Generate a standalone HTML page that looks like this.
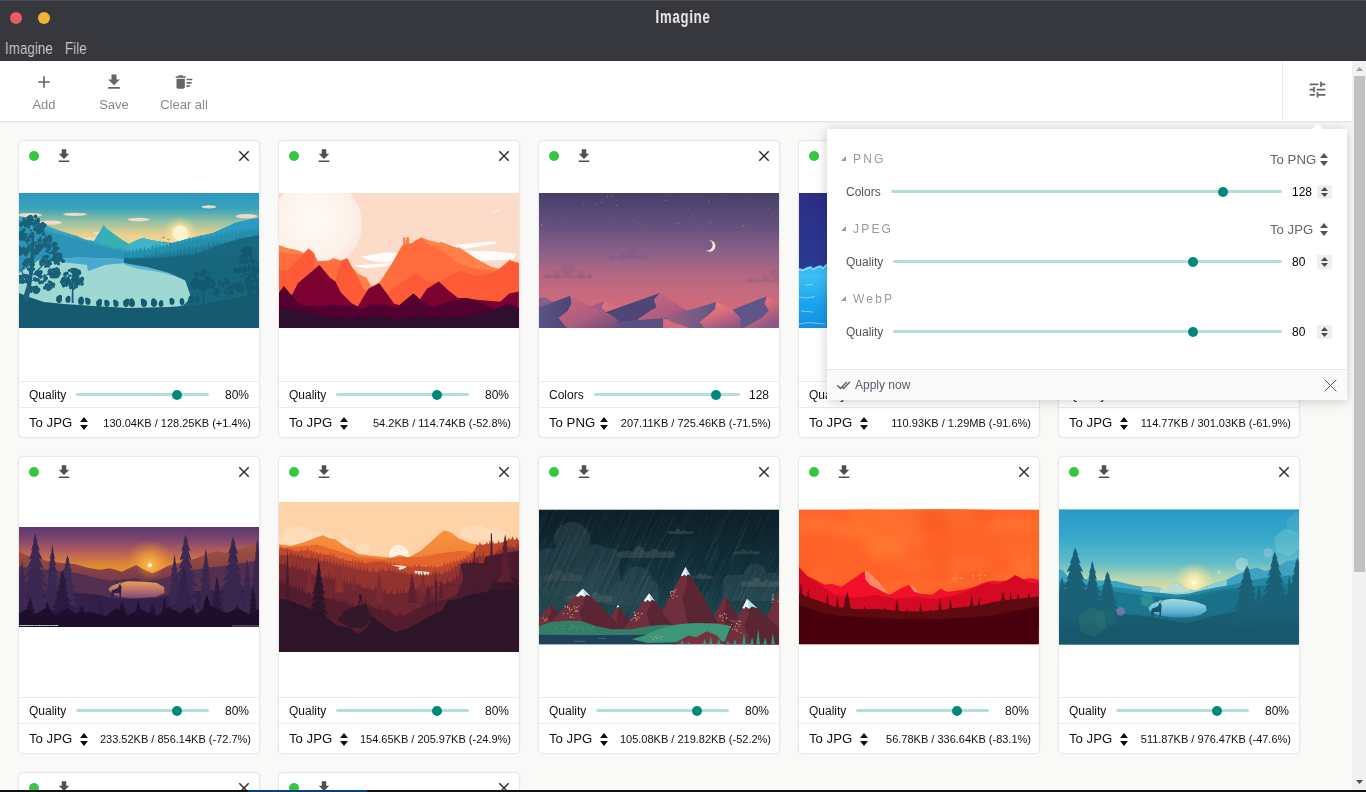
<!DOCTYPE html><html><head><meta charset="utf-8"><title>Imagine</title><style>
*{box-sizing:border-box;margin:0;padding:0}
html,body{width:1366px;height:792px;overflow:hidden;background:#f9f9f7;font-family:"Liberation Sans",sans-serif;}
body{position:relative}
#wrap{position:absolute;left:0;top:0;width:1366px;height:792px;will-change:transform;overflow:hidden}
.abs{position:absolute}
#titlebar{z-index:8;position:absolute;left:0;top:0;width:1366px;height:61px;background:#37383d;border-top:1px solid #4c4d52}
.tl{position:absolute;width:12px;height:12px;border-radius:50%;top:11px}
#title{position:absolute;left:583px;top:4px;width:200px;text-align:center;color:#e9e9e9;font-weight:bold;font-size:18px;line-height:24px;transform:scaleX(.74);transform-origin:50% 50%;letter-spacing:.9px;will-change:transform}
.menu{position:absolute;top:38px;will-change:transform;color:#c9c9c9;font-size:17px;line-height:20px;transform-origin:0 50%;white-space:nowrap}
#toolbar{position:absolute;left:0;top:61px;width:1352px;height:61px;background:#fff;border-bottom:1px solid #e4e4e2;box-shadow:0 1px 2px rgba(0,0,0,.04);z-index:5}
.tb{position:absolute;top:0;height:60px;text-align:center;color:#888;font-size:13px}
.tb svg{position:absolute;top:11px;left:50%;margin-left:-10px;width:20px;height:20px;fill:#666}
.tb span{position:absolute;left:-20px;right:-20px;top:36px;line-height:15px;white-space:nowrap}
#tune{position:absolute;left:1282px;top:61px;width:70px;height:60px;z-index:6;border-left:1px solid #ececec;background:#fff}
#tune svg{position:absolute;left:23.5px;top:18px;width:21px;height:21px;fill:#666}

.card{position:absolute;width:242px;height:298px;background:#fff;border:1px solid #e8e8e6;border-radius:5px;box-shadow:0 0 2px rgba(0,0,0,.07);overflow:hidden}
.card .dot{position:absolute;left:10px;top:10px;width:10px;height:10px;border-radius:50%;background:#33c840}
.card svg.dl{position:absolute;left:36px;top:6px;width:18px;height:18px;fill:#505050}
.card svg.cl{position:absolute;left:216px;top:6px;width:18px;height:18px;fill:#333}
.card .img{position:absolute;left:0;width:240px}
.card .img svg{display:block;width:240px}
.card .r1{position:absolute;left:0;top:240px;width:240px;height:27px;border-top:1px solid #ececec}
.card .r2{position:absolute;left:0;top:266px;width:240px;height:31px;border-top:1px solid #ececec}
.lab{position:absolute;left:10px;top:6px;font-size:12px;line-height:14px;color:#111}
.val{position:absolute;right:10px;top:6px;font-size:12px;line-height:14px;color:#111}
.trk{position:absolute;top:11px;height:3px;border-radius:2px;background:#b2dfdb}
.thm{position:absolute;top:8px;width:10px;height:10px;border-radius:50%;background:#00897b}
.sel{position:absolute;left:10px;top:7px;font-size:13.2px;line-height:16px;color:#111;white-space:nowrap}
.arr{position:absolute;top:9px;width:8px;height:13px;fill:#111}
.sz{position:absolute;right:8px;top:8px;font-size:11px;line-height:14px;color:#111;white-space:nowrap}
#sb{z-index:7;position:absolute;left:1352px;top:61px;width:14px;height:729px;background:#f1f1f1}
#sb .th{position:absolute;left:2px;top:15px;width:11px;height:496px;background:#c1c1c1}
#bottom{position:absolute;left:0;top:790px;width:1366px;height:2px;background:#111}
#bottom i{position:absolute;left:248px;top:0;width:119px;height:2px;background:#0a3d7a}
#pop{position:absolute;left:827px;top:129px;width:520px;height:271px;background:#fff;box-shadow:0 1px 12px rgba(0,0,0,.2);z-index:4}
#pop .ft{position:absolute;left:0;top:240px;width:520px;height:31px;background:#fafafa;border-top:1px solid #e8e8e8}
.ph{position:absolute;left:26px;font-size:12px;line-height:14px;color:#999;letter-spacing:2.2px}
.ptri{position:absolute;left:14px;width:5px;height:5px;fill:#999}
.psel{position:absolute;font-size:13.2px;line-height:16px;color:#666;white-space:nowrap}
.parr{position:absolute;width:8px;height:13px;fill:#555}
.plab{position:absolute;left:19px;font-size:12px;line-height:14px;color:#555}
.ptrk{position:absolute;height:3px;border-radius:2px;background:#b2dfdb}
.pthm{position:absolute;width:10px;height:10px;border-radius:50%;background:#00897b}
.pval{position:absolute;left:465px;font-size:12px;line-height:14px;color:#000}
.spin{position:absolute;left:490px;width:15px;height:14px;background:#efefef}
.spin svg{position:absolute;left:4px;top:2px;width:7px;height:10px;fill:#4a4a4a}
</style></head><body><div id="wrap"><div class="card" style="left:18px;top:140px"><div class="img" style="top:52px;height:135px"><svg viewBox="0 0 240 135" height="135" preserveAspectRatio="none"><defs><linearGradient id="i1sky" x1="0" y1="0" x2="0" y2="1"><stop offset="0" stop-color="#2c97c2"/><stop offset=".28" stop-color="#3aa3b8"/><stop offset=".5" stop-color="#8fc0a4"/><stop offset=".75" stop-color="#ecd08c"/><stop offset="1" stop-color="#f6d78f"/></linearGradient><radialGradient id="i1sun" cx=".5" cy=".5" r=".5"><stop offset="0" stop-color="#fff6d8"/><stop offset=".42" stop-color="#fdf0c8"/><stop offset=".5" stop-color="#fbe6aa" stop-opacity=".7"/><stop offset="1" stop-color="#f6d78f" stop-opacity="0"/></radialGradient></defs><rect width="240" height="135" fill="#2d94b8"/><rect width="240" height="56" fill="url(#i1sky)"/><circle cx="161.3" cy="40.4" r="17" fill="url(#i1sun)"/><ellipse cx="11" cy="22" rx="12" ry="2" fill="#f4dcc6" opacity=".95"/><ellipse cx="56" cy="21.3" rx="12" ry="1.6" fill="#f4dcc6" opacity=".95"/><ellipse cx="31" cy="29.6" rx="12" ry="2.2" fill="#f4dcc6" opacity=".95"/><ellipse cx="119.5" cy="26.6" rx="11" ry="1.8" fill="#f4dcc6" opacity=".95"/><ellipse cx="190" cy="13.8" rx="7.5" ry="1.6" fill="#f4dcc6" opacity=".95"/><ellipse cx="227.5" cy="23.2" rx="11" ry="2.2" fill="#f4dcc6" opacity=".95"/><ellipse cx="84" cy="40" rx="10" ry="1.5" fill="#f4dcc6" opacity=".95"/><ellipse cx="73" cy="45.6" rx="8" ry="1.2" fill="#f4dcc6" opacity=".95"/><ellipse cx="126" cy="46.6" rx="7" ry="1.3" fill="#f4dcc6" opacity=".95"/><path d="M0 23.5L8 25L23 31L42 38L58 43L66 46.5L75 48L80 40L84.4 32.3L88 36L96 42L104 47.5L110 51L118 47L124 45L132 47L139 48.2L153 50L172 45L194 40L216 30L232 26L240 25.4V70H0z" fill="#3aa6c6"/><path d="M84.4 32.3L88 36L96 42L104 47.5L110 51L112 56H78L80 47z" fill="#36b0b4"/><path d="M110 51L118 47L124 45L132 47L139 48.2L153 50V58H108z" fill="#3db4c8"/><path d="M150 51L172 45L194 40L216 30L232 26L240 25.4V70H150z" fill="#2a9cc4"/><path d="M0 33L10 36L24 40L40 45L60 50L80 55L100 59L112 62V72H0z" fill="#2d94b8"/><path d="M24.0 38.0L25.4 35.1L26.8 38.7L28.1 35.0L29.4 39.5L30.9 36.0L32.4 40.3L34.0 38.1L35.6 41.1L37.2 39.0L38.8 42.0L40.1 39.7L41.4 42.7L43.2 39.6L45.1 43.7L46.5 41.3L47.9 44.5L49.8 40.9L51.7 45.5L53.2 41.9L54.7 46.3L56.0 41.7L57.4 47.0L58.8 42.8L60.3 47.8L61.6 45.3L63.0 48.5L64.8 45.7L66.6 49.5L68.3 47.0L69.9 50.4L71.4 46.7L72.9 51.2L74.3 47.7L75.6 51.9L77.0 49.7L78.4 52.7L80.0 48.9L81.5 53.5L83.2 50.7L84.8 54.4L86.3 51.2L87.8 55.2L89.5 51.2L91.2 56.2L92.9 53.5L94.5 57.0L96.4 53.7L98.2 58.0L99.7 54.1L101.1 58.8L102.5 54.2L103.8 59.6L105.6 56.5L107.4 60.5L109.0 58.1L110.6 61.4L112.3 59.2L112.0 61.8V72H0z" fill="#2d94b8"/><path d="M105.0 62.0L106.9 56.4L108.7 61.3L110.4 55.4L112.0 60.7L113.9 55.2L115.8 60.0L117.5 54.9L119.3 59.3L121.4 53.4L123.6 58.5L125.5 53.7L127.4 57.7L129.3 54.2L131.3 57.0L133.4 51.7L135.6 56.2L137.2 50.4L138.9 55.6L140.8 51.0L142.7 54.8L144.5 51.4L146.3 54.2L147.8 50.4L149.3 53.6L151.3 50.0L153.3 52.8L154.9 49.1L156.5 52.2L158.6 47.6L160.7 51.4L162.4 47.8L164.2 50.8L166.3 45.7L168.3 50.0L170.4 44.1L172.5 49.2L174.2 45.0L176.0 48.5L178.0 44.0L180.1 47.7L181.7 41.6L183.2 47.1L184.8 43.3L186.4 46.5L188.2 42.5L190.0 45.9L191.6 40.8L193.3 45.2L195.0 41.9L196.7 44.6L198.6 40.1L200.4 43.9L202.4 37.6L204.3 43.1L206.2 38.2L208.1 42.4L209.6 37.1L211.0 41.9L213.0 35.8L215.0 41.1L217.1 35.1L219.1 40.3L220.8 35.8L222.5 39.7L224.4 36.0L226.3 39.0L227.8 35.5L229.3 38.4L230.8 34.5L232.4 37.8L233.9 33.5L235.4 37.2L236.9 33.9L238.5 36.6L240.2 33.0L240.0 36.4V80H105z" fill="#2590ae"/><path d="M120.0 66.0L122.2 62.5L124.4 65.3L126.0 59.8L127.6 64.7L129.4 60.5L131.2 64.1L132.8 59.5L134.4 63.5L136.7 57.2L139.0 62.8L140.9 57.8L142.8 62.1L144.4 58.6L145.9 61.6L147.7 57.1L149.4 61.0L151.0 54.8L152.7 60.4L154.9 57.0L157.2 59.7L158.8 54.6L160.4 59.1L162.0 54.0L163.5 58.6L165.8 53.4L168.0 57.8L170.1 51.5L172.1 57.1L173.9 52.9L175.7 56.5L177.8 52.6L179.9 55.8L182.1 50.6L184.2 55.1L185.9 50.7L187.5 54.5L189.8 48.3L192.1 53.7L194.2 47.4L196.3 53.0L198.4 46.8L200.5 52.3L202.4 48.2L204.3 51.7L205.9 47.2L207.4 51.1L209.2 47.7L210.9 50.5L212.9 46.3L215.0 49.9L216.8 43.2L218.7 49.2L221.0 42.6L223.2 48.4L225.0 41.8L226.8 47.8L228.5 43.8L230.2 47.3L231.9 43.3L233.6 46.7L235.8 41.1L238.0 45.9L239.9 39.7L240.0 45.6V80H120z" fill="#1e7f9c"/><path d="M135.0 70.0L137.1 64.6L139.3 69.1L141.3 65.5L143.3 68.3L145.4 62.2L147.5 67.5L149.4 61.9L151.3 66.7L153.4 62.8L155.5 65.9L157.7 61.5L159.8 65.0L161.6 58.8L163.4 64.3L165.7 59.7L167.9 63.4L169.6 57.9L171.2 62.8L172.8 59.0L174.5 62.1L176.6 56.0L178.7 61.3L180.9 57.4L183.0 60.4L185.1 54.0L187.1 59.6L189.0 55.1L191.0 58.8L192.5 55.1L194.0 58.2L196.0 51.9L198.0 57.4L200.3 52.4L202.5 56.5L204.7 51.8L206.9 55.6L208.5 49.8L210.2 55.0L212.0 50.8L213.7 54.3L215.7 50.1L217.6 53.5L219.5 49.3L221.3 52.7L223.5 48.9L225.7 51.9L227.6 47.4L229.5 51.1L231.7 45.9L233.9 50.2L236.1 45.5L238.3 49.3L240.3 44.4L240.0 49.0V90H135z" fill="#1a7088"/><path d="M150 72L180 60L200 52L220 46L240 42V100H150z" fill="#18687f"/><path d="M20 67L60 64.5L105 66L130 72L160 80L176 88L180 96L176 106L150 118L60 118L10 108L0 100L0 80z" fill="#9fd7d3"/><path d="M38 66L60 64.5L105 66L108 70L95 71L86 72L72 77L69 78L68 72L52 70L40 69z" fill="#49a9d2"/><path d="M105 69L125 73L150 80L165 86L160 84L140 79L120 76L106 72z" fill="#5bb8d8"/><path d="M105.0 66.0L106.0 63.7L106.9 66.0L108.0 63.9L109.0 66.0L110.4 64.5L111.7 66.1L112.9 64.3L114.1 66.1L115.3 63.5L116.5 66.1L117.8 64.1L119.0 66.1L120.3 63.8L121.6 66.2L122.9 64.5L124.1 66.2L125.2 64.4L126.3 66.6L127.5 64.3L128.7 67.3L130.0 65.4L131.3 68.1L132.5 65.6L133.7 68.8L134.9 66.7L136.1 69.5L137.4 67.6L138.7 70.3L139.9 68.5L141.1 71.0L142.5 69.2L143.9 71.9L145.3 69.7L146.7 72.7L147.8 70.1L148.9 73.4L150.3 71.4L151.7 74.2L152.7 71.8L153.7 74.8L154.9 73.5L156.1 75.5L157.2 74.2L158.2 76.2L159.5 74.9L160.8 76.9L162.2 74.7L163.6 77.8L164.9 76.4L166.2 78.6L167.2 76.4L168.2 79.2L169.7 76.8L171.1 80.0L172.5 78.6L173.9 80.9L175.1 79.1L176.0 81.5L176 92L150 80L128 74L105 70z" fill="#18677e"/><path d="M105 67L125 67L150 72L172 82L185 95L240 95V60L200 60z" fill="#18677e"/><path d="M165 84L185 74L210 64L240 58V118H160L172 104z" fill="#17667c"/><path d="M0 100L10 104L25 109L45 111L75 113L110 115L150 114L180 112L200 108L220 104L240 101V135H0z" fill="#155a6f"/><g fill="#1a6279"><path d="M3 108L8 92L11 74L12 56L13 40L15 40L15 58L14.5 76L12 94L9 109z"/><path d="M12 70L22 52L30 46M13 60L6 46L4 36M14 82L26 70L36 64M12 88L22 84L32 80M10 92L5 84L2 76" stroke="#1a6279" stroke-width="1.1" fill="none"/><circle cx="11.9" cy="29.7" r="1.0"/><circle cx="1.8" cy="31.7" r="1.2"/><circle cx="7.2" cy="32.9" r="1.7"/><circle cx="10.8" cy="30.5" r="1.4"/><circle cx="9.7" cy="30.4" r="1.6"/><circle cx="4.4" cy="29.9" r="2.1"/><circle cx="7.5" cy="24.7" r="0.9"/><circle cx="5.9" cy="31.1" r="1.8"/><circle cx="5.7" cy="32.0" r="1.3"/><circle cx="11.0" cy="27.4" r="1.1"/><circle cx="9.7" cy="34.3" r="1.5"/><circle cx="5.4" cy="28.4" r="0.9"/><circle cx="4.4" cy="26.7" r="0.9"/><circle cx="10.8" cy="28.3" r="1.8"/><circle cx="11.2" cy="32.6" r="0.9"/><circle cx="8.8" cy="27.2" r="1.2"/><circle cx="0.1" cy="28.3" r="1.1"/><circle cx="9.2" cy="32.9" r="1.1"/><circle cx="8.0" cy="31.4" r="0.9"/><circle cx="7.1" cy="32.9" r="1.2"/><circle cx="6.2" cy="27.0" r="1.5"/><circle cx="7.7" cy="32.9" r="0.8"/><circle cx="6.0" cy="30.7" r="1.8"/><circle cx="3.3" cy="29.2" r="1.4"/><circle cx="7.9" cy="29.3" r="1.9"/><circle cx="1.8" cy="31.6" r="1.9"/><circle cx="2.4" cy="32.4" r="1.7"/><circle cx="9.8" cy="29.6" r="1.9"/><circle cx="4.6" cy="25.8" r="1.3"/><circle cx="5.1" cy="31.1" r="1.0"/><circle cx="11.1" cy="32.0" r="1.1"/><circle cx="7.0" cy="31.4" r="1.9"/><circle cx="9.7" cy="26.7" r="1.2"/><circle cx="6.2" cy="33.0" r="1.4"/><circle cx="16.0" cy="29.6" r="1.1"/><circle cx="19.3" cy="25.9" r="1.5"/><circle cx="14.2" cy="31.6" r="1.2"/><circle cx="13.9" cy="27.1" r="1.3"/><circle cx="10.1" cy="27.5" r="1.1"/><circle cx="13.6" cy="27.0" r="1.1"/><circle cx="16.9" cy="28.6" r="0.9"/><circle cx="17.0" cy="27.4" r="1.1"/><circle cx="10.6" cy="25.3" r="1.8"/><circle cx="11.4" cy="23.7" r="1.9"/><circle cx="11.6" cy="28.7" r="2.1"/><circle cx="16.8" cy="30.2" r="1.6"/><circle cx="18.8" cy="28.2" r="2.0"/><circle cx="10.7" cy="24.1" r="1.9"/><circle cx="16.6" cy="29.6" r="1.5"/><circle cx="16.5" cy="23.4" r="1.9"/><circle cx="9.5" cy="24.8" r="1.7"/><circle cx="13.1" cy="24.9" r="0.8"/><circle cx="16.2" cy="29.1" r="0.9"/><circle cx="16.1" cy="24.0" r="1.6"/><circle cx="10.8" cy="24.3" r="1.4"/><circle cx="18.9" cy="27.1" r="1.8"/><circle cx="10.0" cy="26.9" r="1.7"/><circle cx="18.3" cy="28.6" r="1.1"/><circle cx="16.5" cy="28.1" r="1.7"/><circle cx="15.3" cy="30.9" r="2.1"/><circle cx="10.6" cy="27.1" r="1.4"/><circle cx="12.1" cy="23.3" r="1.6"/><circle cx="13.0" cy="26.0" r="1.0"/><circle cx="13.9" cy="31.0" r="1.2"/><circle cx="13.4" cy="26.8" r="0.9"/><circle cx="13.5" cy="30.8" r="1.7"/><circle cx="12.7" cy="24.7" r="1.5"/><circle cx="10.3" cy="27.7" r="1.0"/><circle cx="23.3" cy="33.5" r="2.1"/><circle cx="21.8" cy="34.7" r="1.4"/><circle cx="23.7" cy="30.1" r="1.4"/><circle cx="20.7" cy="37.5" r="2.0"/><circle cx="22.2" cy="39.1" r="1.0"/><circle cx="14.7" cy="34.2" r="1.0"/><circle cx="23.0" cy="31.4" r="2.0"/><circle cx="20.1" cy="32.5" r="2.0"/><circle cx="20.0" cy="35.1" r="0.8"/><circle cx="16.6" cy="35.2" r="1.2"/><circle cx="23.4" cy="37.5" r="1.2"/><circle cx="21.1" cy="34.8" r="1.8"/><circle cx="22.2" cy="33.4" r="2.0"/><circle cx="19.6" cy="29.9" r="1.2"/><circle cx="18.2" cy="37.5" r="2.1"/><circle cx="17.7" cy="33.2" r="1.4"/><circle cx="20.8" cy="36.2" r="0.9"/><circle cx="22.8" cy="32.5" r="2.0"/><circle cx="21.0" cy="37.8" r="1.5"/><circle cx="22.5" cy="38.1" r="2.0"/><circle cx="25.4" cy="31.7" r="1.6"/><circle cx="26.4" cy="32.2" r="1.5"/><circle cx="20.7" cy="33.8" r="1.8"/><circle cx="15.6" cy="36.5" r="1.6"/><circle cx="20.7" cy="36.2" r="2.0"/><circle cx="24.1" cy="37.7" r="1.2"/><circle cx="19.3" cy="39.5" r="2.1"/><circle cx="20.7" cy="39.5" r="1.2"/><circle cx="17.2" cy="33.8" r="1.0"/><circle cx="22.6" cy="37.1" r="2.0"/><circle cx="18.0" cy="35.0" r="2.0"/><circle cx="25.4" cy="34.9" r="1.0"/><circle cx="21.7" cy="36.6" r="1.2"/><circle cx="23.7" cy="36.5" r="1.1"/><circle cx="2.0" cy="39.6" r="1.8"/><circle cx="4.2" cy="44.0" r="1.5"/><circle cx="5.1" cy="44.4" r="0.9"/><circle cx="6.8" cy="47.8" r="1.0"/><circle cx="2.4" cy="41.9" r="1.9"/><circle cx="8.8" cy="45.0" r="1.1"/><circle cx="4.2" cy="44.3" r="2.0"/><circle cx="11.8" cy="37.5" r="0.8"/><circle cx="13.8" cy="43.0" r="2.0"/><circle cx="2.7" cy="42.8" r="0.8"/><circle cx="2.8" cy="45.6" r="1.9"/><circle cx="12.2" cy="37.4" r="1.1"/><circle cx="10.1" cy="43.5" r="1.5"/><circle cx="5.2" cy="36.7" r="1.7"/><circle cx="4.3" cy="37.8" r="1.4"/><circle cx="6.7" cy="41.6" r="1.8"/><circle cx="8.7" cy="47.7" r="1.6"/><circle cx="7.2" cy="44.0" r="1.1"/><circle cx="4.2" cy="38.2" r="0.9"/><circle cx="12.6" cy="43.8" r="1.6"/><circle cx="5.5" cy="43.8" r="1.6"/><circle cx="11.8" cy="42.2" r="1.4"/><circle cx="13.4" cy="40.8" r="1.9"/><circle cx="4.6" cy="42.4" r="1.1"/><circle cx="13.7" cy="40.8" r="1.2"/><circle cx="12.9" cy="42.6" r="1.7"/><circle cx="4.9" cy="43.5" r="1.7"/><circle cx="11.0" cy="40.7" r="0.8"/><circle cx="5.6" cy="45.3" r="1.7"/><circle cx="10.0" cy="47.0" r="1.8"/><circle cx="4.8" cy="41.9" r="2.1"/><circle cx="5.6" cy="47.0" r="1.1"/><circle cx="9.1" cy="47.1" r="1.2"/><circle cx="12.7" cy="40.8" r="1.0"/><circle cx="25.8" cy="51.1" r="1.7"/><circle cx="27.7" cy="46.2" r="1.3"/><circle cx="26.7" cy="53.1" r="1.0"/><circle cx="26.7" cy="47.5" r="1.3"/><circle cx="30.7" cy="43.4" r="1.8"/><circle cx="32.2" cy="46.9" r="1.2"/><circle cx="27.9" cy="52.7" r="1.8"/><circle cx="31.0" cy="48.0" r="1.3"/><circle cx="22.0" cy="49.6" r="1.0"/><circle cx="29.0" cy="47.1" r="1.3"/><circle cx="27.5" cy="46.4" r="2.1"/><circle cx="26.2" cy="50.7" r="1.9"/><circle cx="27.2" cy="43.2" r="0.9"/><circle cx="20.5" cy="47.6" r="2.0"/><circle cx="26.6" cy="50.6" r="2.0"/><circle cx="29.7" cy="47.8" r="1.9"/><circle cx="25.2" cy="45.7" r="0.8"/><circle cx="31.6" cy="49.3" r="1.1"/><circle cx="24.9" cy="41.0" r="1.2"/><circle cx="24.0" cy="53.2" r="1.6"/><circle cx="24.5" cy="52.4" r="1.2"/><circle cx="24.9" cy="47.4" r="1.8"/><circle cx="30.2" cy="44.5" r="2.0"/><circle cx="28.6" cy="47.5" r="1.4"/><circle cx="32.1" cy="45.3" r="1.3"/><circle cx="25.0" cy="51.2" r="1.4"/><circle cx="27.9" cy="45.8" r="1.8"/><circle cx="24.5" cy="41.2" r="1.8"/><circle cx="21.6" cy="44.7" r="1.2"/><circle cx="20.7" cy="51.3" r="0.9"/><circle cx="27.1" cy="52.2" r="1.1"/><circle cx="26.3" cy="47.5" r="1.5"/><circle cx="21.6" cy="52.6" r="1.9"/><circle cx="28.8" cy="46.7" r="0.9"/><circle cx="36.8" cy="57.2" r="1.7"/><circle cx="30.0" cy="55.9" r="1.3"/><circle cx="29.1" cy="51.9" r="1.8"/><circle cx="36.0" cy="51.3" r="1.0"/><circle cx="34.9" cy="52.5" r="1.5"/><circle cx="29.1" cy="58.4" r="1.1"/><circle cx="33.1" cy="57.7" r="1.0"/><circle cx="36.7" cy="52.2" r="1.2"/><circle cx="27.9" cy="58.3" r="1.5"/><circle cx="33.7" cy="59.9" r="1.6"/><circle cx="35.1" cy="54.9" r="1.4"/><circle cx="35.5" cy="50.4" r="2.0"/><circle cx="36.4" cy="55.8" r="1.0"/><circle cx="35.4" cy="60.1" r="1.6"/><circle cx="36.6" cy="53.6" r="1.9"/><circle cx="29.9" cy="55.9" r="1.8"/><circle cx="35.0" cy="54.4" r="1.6"/><circle cx="30.8" cy="53.2" r="1.3"/><circle cx="34.9" cy="56.9" r="1.1"/><circle cx="28.7" cy="52.4" r="1.1"/><circle cx="36.7" cy="55.2" r="1.7"/><circle cx="34.4" cy="57.8" r="1.1"/><circle cx="34.4" cy="51.1" r="0.9"/><circle cx="36.3" cy="57.1" r="1.5"/><circle cx="31.7" cy="53.7" r="1.0"/><circle cx="31.6" cy="51.7" r="1.2"/><circle cx="30.8" cy="60.0" r="1.2"/><circle cx="29.4" cy="53.7" r="1.3"/><circle cx="37.3" cy="50.8" r="1.3"/><circle cx="34.8" cy="59.5" r="1.1"/><circle cx="39.2" cy="55.2" r="1.4"/><circle cx="34.8" cy="51.8" r="1.9"/><circle cx="30.5" cy="55.5" r="0.8"/><circle cx="28.1" cy="53.6" r="2.0"/><circle cx="20.7" cy="57.5" r="1.3"/><circle cx="13.3" cy="54.9" r="1.2"/><circle cx="9.3" cy="54.2" r="0.9"/><circle cx="9.7" cy="55.3" r="2.1"/><circle cx="16.8" cy="57.0" r="2.0"/><circle cx="20.8" cy="54.4" r="0.9"/><circle cx="19.9" cy="53.3" r="2.0"/><circle cx="11.4" cy="51.3" r="1.0"/><circle cx="16.7" cy="52.3" r="1.3"/><circle cx="19.6" cy="50.5" r="1.0"/><circle cx="16.9" cy="58.7" r="1.5"/><circle cx="14.2" cy="56.4" r="1.1"/><circle cx="15.0" cy="49.4" r="0.9"/><circle cx="10.4" cy="53.0" r="0.8"/><circle cx="17.3" cy="53.3" r="1.6"/><circle cx="10.7" cy="53.5" r="1.2"/><circle cx="11.3" cy="57.2" r="1.4"/><circle cx="13.5" cy="51.7" r="1.4"/><circle cx="21.4" cy="55.7" r="1.4"/><circle cx="16.6" cy="60.2" r="1.8"/><circle cx="13.1" cy="55.7" r="1.4"/><circle cx="18.0" cy="56.3" r="1.4"/><circle cx="19.9" cy="57.2" r="1.5"/><circle cx="21.4" cy="56.2" r="0.9"/><circle cx="15.4" cy="49.8" r="1.5"/><circle cx="20.7" cy="56.4" r="1.3"/><circle cx="18.5" cy="54.3" r="1.9"/><circle cx="22.0" cy="54.9" r="1.9"/><circle cx="18.4" cy="60.5" r="1.4"/><circle cx="22.5" cy="53.5" r="1.0"/><circle cx="17.6" cy="49.4" r="0.9"/><circle cx="12.4" cy="59.2" r="1.0"/><circle cx="18.9" cy="53.1" r="1.9"/><circle cx="19.1" cy="58.3" r="2.0"/><circle cx="4.7" cy="60.3" r="1.5"/><circle cx="3.6" cy="58.8" r="1.0"/><circle cx="6.8" cy="61.8" r="1.7"/><circle cx="5.8" cy="56.8" r="1.8"/><circle cx="7.0" cy="60.3" r="1.6"/><circle cx="0.7" cy="61.4" r="1.5"/><circle cx="-0.5" cy="55.9" r="0.9"/><circle cx="8.4" cy="57.8" r="1.3"/><circle cx="4.8" cy="55.7" r="2.1"/><circle cx="1.1" cy="56.7" r="1.8"/><circle cx="1.8" cy="58.7" r="1.8"/><circle cx="8.8" cy="59.3" r="1.1"/><circle cx="0.5" cy="54.4" r="1.6"/><circle cx="2.4" cy="55.8" r="0.8"/><circle cx="6.1" cy="58.4" r="1.6"/><circle cx="0.4" cy="59.4" r="2.0"/><circle cx="5.8" cy="59.6" r="1.6"/><circle cx="4.3" cy="58.0" r="1.3"/><circle cx="6.6" cy="59.7" r="1.1"/><circle cx="0.3" cy="56.2" r="1.1"/><circle cx="1.3" cy="55.7" r="1.0"/><circle cx="6.5" cy="57.1" r="1.0"/><circle cx="7.6" cy="60.1" r="1.9"/><circle cx="4.7" cy="55.1" r="1.1"/><circle cx="8.4" cy="58.3" r="1.5"/><circle cx="1.4" cy="61.0" r="1.4"/><circle cx="8.3" cy="56.5" r="1.1"/><circle cx="4.9" cy="57.4" r="1.5"/><circle cx="1.8" cy="59.3" r="0.9"/><circle cx="4.1" cy="57.5" r="1.5"/><circle cx="5.9" cy="57.4" r="1.1"/><circle cx="1.0" cy="55.9" r="1.6"/><circle cx="4.9" cy="56.2" r="1.2"/><circle cx="3.6" cy="59.0" r="2.0"/><circle cx="40.0" cy="61.8" r="0.8"/><circle cx="41.9" cy="62.3" r="1.4"/><circle cx="38.8" cy="62.6" r="1.1"/><circle cx="41.3" cy="67.5" r="0.9"/><circle cx="36.3" cy="69.8" r="1.7"/><circle cx="41.9" cy="62.4" r="1.1"/><circle cx="35.3" cy="64.9" r="1.8"/><circle cx="35.9" cy="65.6" r="1.6"/><circle cx="41.7" cy="65.5" r="1.9"/><circle cx="42.0" cy="66.2" r="1.1"/><circle cx="38.8" cy="61.0" r="1.8"/><circle cx="36.4" cy="70.2" r="1.2"/><circle cx="39.4" cy="70.8" r="1.6"/><circle cx="37.3" cy="62.1" r="2.1"/><circle cx="33.6" cy="66.9" r="1.7"/><circle cx="41.5" cy="63.4" r="1.7"/><circle cx="36.0" cy="64.8" r="1.1"/><circle cx="37.8" cy="65.0" r="2.0"/><circle cx="39.6" cy="66.7" r="0.9"/><circle cx="42.2" cy="64.7" r="1.0"/><circle cx="40.2" cy="66.2" r="1.7"/><circle cx="35.7" cy="62.8" r="1.8"/><circle cx="43.2" cy="67.6" r="1.3"/><circle cx="41.2" cy="61.8" r="2.0"/><circle cx="44.1" cy="67.9" r="2.0"/><circle cx="40.8" cy="65.4" r="1.1"/><circle cx="39.8" cy="66.6" r="1.9"/><circle cx="40.8" cy="62.2" r="1.9"/><circle cx="36.8" cy="64.0" r="0.9"/><circle cx="43.3" cy="68.6" r="1.1"/><circle cx="37.4" cy="69.0" r="0.8"/><circle cx="38.9" cy="68.7" r="1.7"/><circle cx="36.7" cy="68.1" r="2.1"/><circle cx="33.5" cy="65.9" r="1.6"/><circle cx="31.1" cy="68.7" r="1.4"/><circle cx="27.6" cy="64.8" r="1.7"/><circle cx="24.1" cy="67.4" r="1.9"/><circle cx="32.0" cy="70.7" r="1.0"/><circle cx="29.9" cy="68.0" r="1.8"/><circle cx="27.4" cy="67.9" r="1.4"/><circle cx="21.2" cy="68.3" r="1.0"/><circle cx="23.2" cy="68.1" r="1.9"/><circle cx="26.6" cy="73.4" r="1.2"/><circle cx="28.2" cy="72.5" r="1.4"/><circle cx="31.0" cy="70.8" r="0.9"/><circle cx="28.3" cy="63.5" r="1.8"/><circle cx="24.3" cy="65.6" r="1.3"/><circle cx="22.2" cy="71.2" r="0.9"/><circle cx="27.8" cy="67.4" r="1.1"/><circle cx="26.5" cy="73.2" r="1.5"/><circle cx="22.6" cy="71.6" r="1.1"/><circle cx="22.4" cy="69.0" r="1.8"/><circle cx="27.1" cy="63.6" r="1.3"/><circle cx="25.8" cy="69.9" r="1.9"/><circle cx="24.1" cy="63.9" r="1.0"/><circle cx="21.7" cy="69.8" r="1.6"/><circle cx="30.1" cy="70.7" r="2.0"/><circle cx="27.2" cy="70.4" r="1.2"/><circle cx="25.3" cy="63.1" r="1.0"/><circle cx="28.8" cy="70.3" r="1.2"/><circle cx="24.4" cy="67.7" r="1.2"/><circle cx="29.4" cy="73.1" r="1.7"/><circle cx="32.1" cy="71.2" r="0.9"/><circle cx="22.2" cy="71.6" r="1.8"/><circle cx="26.6" cy="64.4" r="1.1"/><circle cx="25.6" cy="66.6" r="1.1"/><circle cx="26.1" cy="68.7" r="1.3"/><circle cx="28.4" cy="63.6" r="1.5"/><circle cx="6.8" cy="69.0" r="1.0"/><circle cx="6.5" cy="69.7" r="1.8"/><circle cx="13.8" cy="69.9" r="1.5"/><circle cx="10.0" cy="68.1" r="1.1"/><circle cx="8.9" cy="66.5" r="1.8"/><circle cx="8.0" cy="66.8" r="1.7"/><circle cx="7.0" cy="68.9" r="1.2"/><circle cx="8.5" cy="70.7" r="1.3"/><circle cx="11.2" cy="67.1" r="1.6"/><circle cx="10.0" cy="75.9" r="1.4"/><circle cx="6.8" cy="69.4" r="1.7"/><circle cx="12.7" cy="70.9" r="1.7"/><circle cx="10.8" cy="68.3" r="1.4"/><circle cx="11.3" cy="71.8" r="1.5"/><circle cx="13.3" cy="76.5" r="2.0"/><circle cx="7.8" cy="71.8" r="1.5"/><circle cx="4.3" cy="70.7" r="1.5"/><circle cx="5.9" cy="67.8" r="1.5"/><circle cx="4.2" cy="75.1" r="1.1"/><circle cx="8.2" cy="68.6" r="1.8"/><circle cx="15.0" cy="76.1" r="1.3"/><circle cx="13.4" cy="73.1" r="1.3"/><circle cx="14.5" cy="72.3" r="1.3"/><circle cx="8.7" cy="68.7" r="1.1"/><circle cx="11.0" cy="77.1" r="2.0"/><circle cx="6.8" cy="71.5" r="1.8"/><circle cx="7.5" cy="73.7" r="1.0"/><circle cx="11.0" cy="66.7" r="1.6"/><circle cx="4.9" cy="72.9" r="1.1"/><circle cx="14.1" cy="71.2" r="1.6"/><circle cx="12.6" cy="67.1" r="1.4"/><circle cx="8.6" cy="76.2" r="1.0"/><circle cx="12.1" cy="68.9" r="1.9"/><circle cx="9.5" cy="75.6" r="1.1"/><circle cx="32.7" cy="81.0" r="0.8"/><circle cx="34.4" cy="77.3" r="1.1"/><circle cx="33.7" cy="83.3" r="1.4"/><circle cx="31.8" cy="76.9" r="1.3"/><circle cx="40.0" cy="78.0" r="0.9"/><circle cx="37.7" cy="75.7" r="1.8"/><circle cx="38.5" cy="83.6" r="1.6"/><circle cx="35.6" cy="80.1" r="2.0"/><circle cx="33.3" cy="77.9" r="0.9"/><circle cx="36.8" cy="81.9" r="1.8"/><circle cx="33.7" cy="81.6" r="2.0"/><circle cx="35.6" cy="78.0" r="2.0"/><circle cx="30.9" cy="77.2" r="1.7"/><circle cx="39.2" cy="77.2" r="1.9"/><circle cx="36.6" cy="84.0" r="1.5"/><circle cx="34.8" cy="76.6" r="1.9"/><circle cx="32.1" cy="79.1" r="1.1"/><circle cx="37.7" cy="82.7" r="0.9"/><circle cx="32.8" cy="80.4" r="1.4"/><circle cx="30.6" cy="80.0" r="1.9"/><circle cx="40.5" cy="80.2" r="1.4"/><circle cx="30.5" cy="78.4" r="1.9"/><circle cx="32.3" cy="82.3" r="2.0"/><circle cx="39.3" cy="81.9" r="1.6"/><circle cx="39.6" cy="80.7" r="1.7"/><circle cx="38.1" cy="78.8" r="2.1"/><circle cx="30.8" cy="79.8" r="2.0"/><circle cx="40.0" cy="80.9" r="1.6"/><circle cx="32.1" cy="84.0" r="1.3"/><circle cx="30.7" cy="80.6" r="1.8"/><circle cx="36.0" cy="83.3" r="1.3"/><circle cx="29.9" cy="78.5" r="1.2"/><circle cx="36.8" cy="77.1" r="1.5"/><circle cx="34.4" cy="83.6" r="2.1"/><circle cx="17.5" cy="79.6" r="1.2"/><circle cx="19.4" cy="87.0" r="1.6"/><circle cx="16.9" cy="80.1" r="0.9"/><circle cx="19.9" cy="78.5" r="1.5"/><circle cx="24.7" cy="85.0" r="0.8"/><circle cx="23.5" cy="89.3" r="1.6"/><circle cx="17.6" cy="79.6" r="2.0"/><circle cx="16.8" cy="81.0" r="1.6"/><circle cx="19.2" cy="79.7" r="1.7"/><circle cx="22.3" cy="88.7" r="1.4"/><circle cx="21.2" cy="82.1" r="1.0"/><circle cx="27.0" cy="85.2" r="2.0"/><circle cx="18.6" cy="81.0" r="1.9"/><circle cx="22.2" cy="79.7" r="1.1"/><circle cx="19.5" cy="87.7" r="1.2"/><circle cx="15.9" cy="86.0" r="2.0"/><circle cx="26.0" cy="85.5" r="0.9"/><circle cx="25.6" cy="87.6" r="1.5"/><circle cx="25.1" cy="82.1" r="0.8"/><circle cx="16.9" cy="87.0" r="2.0"/><circle cx="25.8" cy="83.5" r="1.3"/><circle cx="25.5" cy="86.9" r="1.1"/><circle cx="21.5" cy="84.6" r="0.8"/><circle cx="20.0" cy="82.1" r="2.1"/><circle cx="26.6" cy="86.9" r="1.0"/><circle cx="26.9" cy="84.6" r="1.1"/><circle cx="20.7" cy="81.4" r="0.9"/><circle cx="21.9" cy="79.0" r="1.9"/><circle cx="20.7" cy="82.3" r="1.6"/><circle cx="19.8" cy="80.1" r="2.0"/><circle cx="20.8" cy="89.8" r="1.7"/><circle cx="21.8" cy="84.1" r="1.6"/><circle cx="21.8" cy="82.5" r="1.2"/><circle cx="20.6" cy="81.6" r="1.9"/><circle cx="3.7" cy="86.1" r="1.3"/><circle cx="1.8" cy="84.6" r="1.7"/><circle cx="8.0" cy="89.3" r="1.3"/><circle cx="2.3" cy="83.1" r="1.3"/><circle cx="1.3" cy="88.7" r="2.0"/><circle cx="5.9" cy="82.6" r="1.2"/><circle cx="10.0" cy="87.7" r="1.7"/><circle cx="6.5" cy="83.6" r="1.6"/><circle cx="10.0" cy="85.4" r="1.6"/><circle cx="3.7" cy="88.9" r="2.0"/><circle cx="1.7" cy="88.7" r="1.6"/><circle cx="8.9" cy="83.4" r="1.2"/><circle cx="7.8" cy="86.0" r="1.3"/><circle cx="0.7" cy="83.8" r="2.0"/><circle cx="9.8" cy="87.1" r="1.9"/><circle cx="7.8" cy="83.4" r="1.2"/><circle cx="7.9" cy="82.6" r="1.7"/><circle cx="7.8" cy="84.6" r="0.9"/><circle cx="0.4" cy="84.6" r="1.1"/><circle cx="5.0" cy="81.5" r="1.1"/><circle cx="1.5" cy="83.6" r="1.4"/><circle cx="5.7" cy="88.3" r="1.8"/><circle cx="6.0" cy="82.9" r="0.9"/><circle cx="6.7" cy="82.1" r="1.1"/><circle cx="0.4" cy="83.9" r="2.0"/><circle cx="1.2" cy="85.6" r="1.6"/><circle cx="5.9" cy="87.9" r="1.0"/><circle cx="4.0" cy="83.3" r="1.5"/><circle cx="1.8" cy="87.9" r="1.0"/><circle cx="10.3" cy="87.3" r="1.3"/><circle cx="8.4" cy="88.3" r="1.8"/><circle cx="7.4" cy="89.0" r="1.2"/><circle cx="4.2" cy="85.9" r="0.8"/><circle cx="10.1" cy="85.7" r="1.4"/><circle cx="27.7" cy="92.1" r="1.8"/><circle cx="25.7" cy="94.9" r="1.8"/><circle cx="32.1" cy="89.2" r="1.1"/><circle cx="32.2" cy="93.4" r="1.0"/><circle cx="31.0" cy="93.5" r="1.5"/><circle cx="32.3" cy="90.9" r="2.0"/><circle cx="31.1" cy="92.4" r="1.6"/><circle cx="28.6" cy="93.9" r="2.0"/><circle cx="29.8" cy="96.2" r="1.6"/><circle cx="33.9" cy="92.1" r="1.3"/><circle cx="28.1" cy="93.5" r="2.1"/><circle cx="32.4" cy="92.9" r="0.9"/><circle cx="29.9" cy="95.5" r="2.0"/><circle cx="33.8" cy="90.8" r="0.9"/><circle cx="31.0" cy="89.5" r="1.6"/><circle cx="31.2" cy="92.9" r="1.0"/><circle cx="30.2" cy="88.9" r="1.7"/><circle cx="28.8" cy="96.1" r="1.8"/><circle cx="32.2" cy="94.5" r="1.1"/><circle cx="32.5" cy="95.1" r="1.0"/><circle cx="30.1" cy="94.6" r="1.7"/><circle cx="34.2" cy="93.3" r="1.1"/><circle cx="34.7" cy="93.9" r="1.1"/><circle cx="34.3" cy="91.4" r="2.0"/><circle cx="32.1" cy="95.2" r="0.9"/><circle cx="34.1" cy="91.3" r="1.6"/><circle cx="27.2" cy="93.7" r="1.9"/><circle cx="26.1" cy="93.5" r="1.0"/><circle cx="30.2" cy="94.0" r="1.7"/><circle cx="28.2" cy="92.5" r="1.9"/><circle cx="29.7" cy="95.7" r="1.0"/><circle cx="29.4" cy="96.9" r="1.2"/><circle cx="31.7" cy="95.6" r="1.2"/><circle cx="31.4" cy="92.2" r="2.1"/><circle cx="19.0" cy="98.3" r="1.7"/><circle cx="15.8" cy="99.6" r="1.2"/><circle cx="14.9" cy="98.7" r="1.3"/><circle cx="19.5" cy="96.8" r="2.0"/><circle cx="17.0" cy="98.2" r="2.0"/><circle cx="18.6" cy="98.2" r="1.2"/><circle cx="15.6" cy="96.9" r="1.8"/><circle cx="14.1" cy="98.2" r="0.8"/><circle cx="16.6" cy="94.6" r="1.0"/><circle cx="11.1" cy="98.4" r="1.1"/><circle cx="13.5" cy="96.4" r="1.0"/><circle cx="15.5" cy="93.8" r="1.1"/><circle cx="16.2" cy="97.5" r="1.6"/><circle cx="12.6" cy="97.1" r="1.1"/><circle cx="12.1" cy="94.9" r="1.9"/><circle cx="13.2" cy="96.1" r="0.9"/><circle cx="14.7" cy="94.6" r="1.7"/><circle cx="18.8" cy="98.2" r="1.2"/><circle cx="17.3" cy="94.0" r="1.4"/><circle cx="19.3" cy="97.4" r="1.4"/><circle cx="16.6" cy="95.6" r="1.0"/><circle cx="16.3" cy="95.0" r="1.0"/><circle cx="12.6" cy="99.1" r="0.8"/><circle cx="12.0" cy="96.7" r="1.5"/><circle cx="17.8" cy="99.2" r="1.9"/><circle cx="16.7" cy="95.4" r="1.7"/><circle cx="12.1" cy="99.2" r="0.9"/><circle cx="18.1" cy="94.3" r="1.4"/><circle cx="11.7" cy="96.8" r="1.5"/><circle cx="19.4" cy="97.5" r="1.1"/><circle cx="15.6" cy="98.1" r="1.1"/><circle cx="15.3" cy="96.4" r="0.9"/><circle cx="14.4" cy="95.4" r="0.8"/><circle cx="12.2" cy="95.3" r="1.5"/><circle cx="1.6" cy="43.0" r="1.9"/><circle cx="1.8" cy="43.3" r="1.0"/><circle cx="-0.8" cy="44.1" r="1.2"/><circle cx="3.8" cy="45.5" r="1.0"/><circle cx="-1.1" cy="42.3" r="1.0"/><circle cx="-1.1" cy="42.7" r="1.0"/><circle cx="3.8" cy="41.1" r="1.3"/><circle cx="-1.2" cy="45.5" r="1.5"/><circle cx="-1.1" cy="46.0" r="1.8"/><circle cx="1.0" cy="45.4" r="1.2"/><circle cx="-1.6" cy="45.3" r="1.8"/><circle cx="5.1" cy="42.4" r="1.9"/><circle cx="4.7" cy="44.8" r="2.0"/><circle cx="3.8" cy="43.3" r="1.3"/><circle cx="0.4" cy="42.5" r="1.5"/><circle cx="4.4" cy="44.9" r="1.5"/><circle cx="3.5" cy="44.2" r="2.1"/><circle cx="2.6" cy="40.8" r="1.6"/><circle cx="3.4" cy="41.0" r="2.0"/><circle cx="5.1" cy="44.6" r="1.1"/><circle cx="1.1" cy="42.4" r="1.5"/><circle cx="4.8" cy="42.8" r="1.1"/><circle cx="-0.6" cy="43.7" r="2.0"/><circle cx="1.5" cy="45.8" r="1.6"/><circle cx="4.2" cy="45.8" r="2.0"/><circle cx="-0.1" cy="43.8" r="1.4"/><circle cx="0.5" cy="43.7" r="1.0"/><circle cx="3.5" cy="45.4" r="1.3"/><circle cx="1.5" cy="45.6" r="0.9"/><circle cx="-1.5" cy="43.1" r="1.6"/><circle cx="-0.9" cy="42.8" r="1.1"/><circle cx="1.3" cy="41.8" r="1.5"/><circle cx="-0.1" cy="42.5" r="1.2"/><circle cx="2.1" cy="45.6" r="1.5"/></g><g fill="#176077"><path d="M53 92L54.3 92L54.6 110L52.6 110z"/><path d="M53.5 96L48 88M53.8 94L60 86" stroke="#176077" stroke-width=".7" fill="none"/><circle cx="48.7" cy="85.3" r="0.8"/><circle cx="48.8" cy="86.7" r="1.0"/><circle cx="48.1" cy="80.4" r="1.1"/><circle cx="57.1" cy="81.7" r="1.6"/><circle cx="54.1" cy="83.4" r="1.7"/><circle cx="51.3" cy="82.6" r="1.2"/><circle cx="47.0" cy="84.0" r="0.9"/><circle cx="54.1" cy="88.2" r="1.5"/><circle cx="55.5" cy="85.1" r="1.2"/><circle cx="50.3" cy="77.5" r="1.6"/><circle cx="55.3" cy="77.9" r="1.5"/><circle cx="52.7" cy="76.4" r="1.3"/><circle cx="54.4" cy="76.8" r="1.7"/><circle cx="57.9" cy="86.3" r="0.8"/><circle cx="53.6" cy="77.1" r="1.3"/><circle cx="58.5" cy="80.9" r="1.2"/><circle cx="54.5" cy="76.2" r="1.4"/><circle cx="49.3" cy="84.9" r="1.3"/><circle cx="52.3" cy="78.6" r="1.2"/><circle cx="48.6" cy="80.7" r="1.1"/><circle cx="54.6" cy="76.3" r="1.3"/><circle cx="50.0" cy="82.9" r="1.1"/><circle cx="56.5" cy="85.8" r="1.4"/><circle cx="59.1" cy="85.2" r="1.1"/><circle cx="56.8" cy="77.1" r="1.8"/><circle cx="54.4" cy="86.0" r="1.7"/><circle cx="54.6" cy="82.1" r="1.4"/><circle cx="45.8" cy="82.1" r="1.6"/><circle cx="45.7" cy="80.5" r="1.3"/><circle cx="46.8" cy="81.4" r="1.2"/><circle cx="49.4" cy="85.8" r="1.2"/><circle cx="58.8" cy="80.3" r="1.3"/><circle cx="56.7" cy="84.3" r="1.2"/><circle cx="47.7" cy="80.2" r="1.7"/><circle cx="49.9" cy="88.3" r="1.2"/><circle cx="43.0" cy="86.0" r="1.1"/><circle cx="42.1" cy="88.3" r="1.0"/><circle cx="44.4" cy="92.8" r="1.6"/><circle cx="44.8" cy="88.9" r="1.7"/><circle cx="44.8" cy="85.4" r="1.8"/><circle cx="49.0" cy="87.2" r="1.0"/><circle cx="45.6" cy="91.9" r="1.3"/><circle cx="47.3" cy="90.7" r="1.4"/><circle cx="44.1" cy="87.5" r="1.8"/><circle cx="45.8" cy="88.3" r="1.2"/><circle cx="47.1" cy="86.7" r="1.5"/><circle cx="49.3" cy="89.1" r="1.6"/><circle cx="43.0" cy="87.2" r="1.0"/><circle cx="42.8" cy="89.0" r="1.1"/><circle cx="44.3" cy="86.5" r="1.8"/><circle cx="43.6" cy="87.8" r="0.9"/><circle cx="48.9" cy="92.1" r="0.9"/><circle cx="48.2" cy="90.0" r="1.3"/><circle cx="48.2" cy="86.0" r="1.6"/><circle cx="47.0" cy="89.2" r="1.6"/><circle cx="44.6" cy="92.2" r="1.2"/><circle cx="47.8" cy="90.9" r="0.9"/><circle cx="49.6" cy="87.2" r="1.1"/><circle cx="43.5" cy="89.8" r="0.9"/><circle cx="49.4" cy="86.9" r="1.8"/><circle cx="42.8" cy="90.2" r="1.0"/><circle cx="51.1" cy="90.1" r="1.7"/><circle cx="44.6" cy="92.7" r="1.6"/><circle cx="45.2" cy="92.1" r="1.8"/><circle cx="41.6" cy="89.1" r="1.0"/><circle cx="43.2" cy="91.3" r="1.0"/><circle cx="44.8" cy="92.7" r="1.3"/><circle cx="47.2" cy="87.0" r="1.0"/><circle cx="59.0" cy="89.6" r="1.8"/><circle cx="59.5" cy="91.4" r="0.9"/><circle cx="57.2" cy="87.4" r="1.2"/><circle cx="62.3" cy="88.7" r="1.6"/><circle cx="58.9" cy="89.9" r="1.0"/><circle cx="59.9" cy="90.2" r="0.8"/><circle cx="58.9" cy="85.7" r="1.0"/><circle cx="60.0" cy="86.6" r="1.1"/><circle cx="61.5" cy="86.6" r="1.2"/><circle cx="63.0" cy="84.4" r="1.0"/><circle cx="57.7" cy="91.2" r="1.2"/><circle cx="62.9" cy="87.4" r="1.8"/><circle cx="57.9" cy="87.9" r="1.3"/><circle cx="63.6" cy="90.9" r="1.1"/><circle cx="63.9" cy="85.9" r="1.2"/><circle cx="60.6" cy="91.6" r="1.0"/><circle cx="61.8" cy="86.8" r="1.3"/><circle cx="57.7" cy="87.4" r="1.6"/><circle cx="57.2" cy="90.5" r="1.4"/><circle cx="59.2" cy="90.7" r="0.9"/><circle cx="62.7" cy="91.9" r="1.1"/><circle cx="59.6" cy="86.7" r="1.4"/><circle cx="58.0" cy="90.5" r="1.1"/><circle cx="63.3" cy="89.0" r="1.0"/><circle cx="63.8" cy="90.8" r="1.1"/><circle cx="56.2" cy="90.5" r="1.6"/><circle cx="64.3" cy="85.1" r="0.9"/><circle cx="60.3" cy="88.8" r="1.5"/><circle cx="58.8" cy="85.6" r="1.2"/><circle cx="58.0" cy="84.7" r="1.0"/><circle cx="62.4" cy="85.7" r="1.4"/><circle cx="61.3" cy="89.4" r="1.7"/><circle cx="60.0" cy="84.1" r="0.8"/><circle cx="62.6" cy="88.5" r="1.0"/><circle cx="51.8" cy="94.0" r="0.8"/><circle cx="51.2" cy="94.8" r="1.0"/><circle cx="55.4" cy="87.7" r="1.5"/><circle cx="52.9" cy="94.4" r="1.5"/><circle cx="52.9" cy="91.1" r="1.6"/><circle cx="53.5" cy="88.3" r="0.8"/><circle cx="55.8" cy="87.8" r="0.8"/><circle cx="53.1" cy="92.7" r="1.6"/><circle cx="54.4" cy="95.7" r="1.5"/><circle cx="57.3" cy="93.2" r="1.2"/><circle cx="52.9" cy="86.4" r="1.1"/><circle cx="57.9" cy="93.7" r="1.2"/><circle cx="57.5" cy="89.2" r="1.5"/><circle cx="55.3" cy="87.5" r="1.3"/><circle cx="57.7" cy="92.4" r="1.2"/><circle cx="47.2" cy="90.6" r="0.9"/><circle cx="53.1" cy="89.9" r="1.5"/><circle cx="54.1" cy="88.6" r="1.3"/><circle cx="57.7" cy="90.2" r="1.3"/><circle cx="53.0" cy="92.2" r="1.2"/><circle cx="50.7" cy="92.2" r="1.1"/><circle cx="56.3" cy="94.2" r="1.5"/><circle cx="53.2" cy="93.5" r="1.3"/><circle cx="47.5" cy="92.7" r="1.2"/><circle cx="51.3" cy="95.6" r="0.9"/><circle cx="49.8" cy="89.9" r="1.6"/><circle cx="48.0" cy="89.7" r="1.0"/><circle cx="50.7" cy="87.6" r="1.3"/><circle cx="53.6" cy="86.4" r="0.9"/><circle cx="52.1" cy="94.0" r="1.0"/><circle cx="56.0" cy="92.0" r="1.0"/><circle cx="51.8" cy="87.7" r="0.9"/><circle cx="51.1" cy="94.1" r="1.2"/><circle cx="53.8" cy="92.2" r="0.8"/><circle cx="60.5" cy="79.9" r="0.9"/><circle cx="56.2" cy="76.7" r="1.4"/><circle cx="59.2" cy="81.5" r="1.2"/><circle cx="58.1" cy="82.3" r="0.8"/><circle cx="59.8" cy="78.7" r="1.4"/><circle cx="60.0" cy="78.9" r="1.1"/><circle cx="57.0" cy="81.3" r="0.8"/><circle cx="57.6" cy="76.9" r="1.1"/><circle cx="58.3" cy="82.5" r="1.6"/><circle cx="58.5" cy="79.4" r="1.6"/><circle cx="58.7" cy="77.4" r="1.1"/><circle cx="58.5" cy="82.8" r="1.1"/><circle cx="55.0" cy="81.9" r="1.2"/><circle cx="58.0" cy="78.5" r="0.8"/><circle cx="54.1" cy="78.9" r="1.6"/><circle cx="56.0" cy="76.9" r="1.7"/><circle cx="54.2" cy="80.1" r="1.0"/><circle cx="56.1" cy="82.5" r="0.9"/><circle cx="56.4" cy="78.7" r="1.2"/><circle cx="58.2" cy="79.8" r="0.8"/><circle cx="55.4" cy="80.6" r="1.5"/><circle cx="60.7" cy="80.1" r="1.7"/><circle cx="57.6" cy="77.8" r="1.1"/><circle cx="55.5" cy="77.9" r="1.2"/><circle cx="55.6" cy="81.9" r="1.5"/><circle cx="58.7" cy="77.1" r="1.0"/><circle cx="56.2" cy="82.2" r="1.4"/><circle cx="56.0" cy="81.2" r="0.9"/><circle cx="55.8" cy="82.1" r="1.8"/><circle cx="60.1" cy="78.3" r="1.8"/><circle cx="60.1" cy="79.4" r="1.6"/><circle cx="60.1" cy="81.0" r="1.4"/><circle cx="56.1" cy="82.5" r="1.8"/><circle cx="53.8" cy="80.3" r="1.1"/></g><g fill="#14586e"><path d="M184 94L185.3 94L185.6 110L183.6 110z"/><circle cx="179.8" cy="88.3" r="0.8"/><circle cx="186.5" cy="88.2" r="1.2"/><circle cx="189.6" cy="85.8" r="1.2"/><circle cx="179.5" cy="80.9" r="1.3"/><circle cx="179.4" cy="81.3" r="0.9"/><circle cx="187.2" cy="88.8" r="1.3"/><circle cx="189.7" cy="87.1" r="1.1"/><circle cx="188.8" cy="85.8" r="1.1"/><circle cx="178.1" cy="83.3" r="1.0"/><circle cx="181.6" cy="82.0" r="1.3"/><circle cx="182.1" cy="82.0" r="1.2"/><circle cx="188.7" cy="85.0" r="1.7"/><circle cx="177.6" cy="81.2" r="1.6"/><circle cx="190.0" cy="87.5" r="1.5"/><circle cx="189.8" cy="86.7" r="1.2"/><circle cx="187.7" cy="88.9" r="1.4"/><circle cx="184.5" cy="80.5" r="1.6"/><circle cx="187.6" cy="84.2" r="1.2"/><circle cx="190.1" cy="83.5" r="1.0"/><circle cx="181.9" cy="88.4" r="1.2"/><circle cx="188.8" cy="79.5" r="1.7"/><circle cx="176.9" cy="80.5" r="1.7"/><circle cx="187.4" cy="88.1" r="1.1"/><circle cx="184.6" cy="77.4" r="1.6"/><circle cx="187.5" cy="85.9" r="1.5"/><circle cx="190.4" cy="81.1" r="0.8"/><circle cx="182.0" cy="81.7" r="1.3"/><circle cx="184.9" cy="80.8" r="1.7"/><circle cx="182.2" cy="79.9" r="1.0"/><circle cx="177.1" cy="85.0" r="1.4"/><circle cx="184.9" cy="83.6" r="0.9"/><circle cx="185.1" cy="80.2" r="1.4"/><circle cx="182.3" cy="88.5" r="1.2"/><circle cx="188.6" cy="88.0" r="1.3"/><circle cx="175.2" cy="87.1" r="1.7"/><circle cx="180.2" cy="91.2" r="1.0"/><circle cx="171.9" cy="91.0" r="1.6"/><circle cx="179.3" cy="91.4" r="1.6"/><circle cx="175.5" cy="88.4" r="1.3"/><circle cx="179.8" cy="94.6" r="1.2"/><circle cx="180.0" cy="88.4" r="0.9"/><circle cx="175.8" cy="92.9" r="1.7"/><circle cx="176.0" cy="90.5" r="1.0"/><circle cx="174.6" cy="93.5" r="1.4"/><circle cx="174.5" cy="92.8" r="0.8"/><circle cx="174.2" cy="89.7" r="0.8"/><circle cx="171.7" cy="92.2" r="0.8"/><circle cx="179.7" cy="94.0" r="1.1"/><circle cx="176.4" cy="94.3" r="1.1"/><circle cx="173.4" cy="89.6" r="1.8"/><circle cx="178.0" cy="91.0" r="1.4"/><circle cx="177.7" cy="86.7" r="1.6"/><circle cx="174.1" cy="88.2" r="1.2"/><circle cx="176.0" cy="95.1" r="1.7"/><circle cx="181.2" cy="89.5" r="1.1"/><circle cx="177.4" cy="87.0" r="1.3"/><circle cx="174.9" cy="88.9" r="1.4"/><circle cx="175.9" cy="91.6" r="1.1"/><circle cx="174.6" cy="95.2" r="1.3"/><circle cx="175.2" cy="92.7" r="1.0"/><circle cx="175.8" cy="92.4" r="0.8"/><circle cx="179.6" cy="88.7" r="1.2"/><circle cx="174.3" cy="89.9" r="1.0"/><circle cx="179.8" cy="92.0" r="1.1"/><circle cx="176.4" cy="87.6" r="1.7"/><circle cx="174.2" cy="94.8" r="1.4"/><circle cx="179.0" cy="92.0" r="1.4"/><circle cx="180.3" cy="90.8" r="1.6"/><circle cx="186.4" cy="91.9" r="0.9"/><circle cx="185.8" cy="90.4" r="1.1"/><circle cx="191.0" cy="90.7" r="1.0"/><circle cx="190.5" cy="93.9" r="1.0"/><circle cx="189.0" cy="91.2" r="1.4"/><circle cx="193.9" cy="87.2" r="1.0"/><circle cx="190.5" cy="85.4" r="1.4"/><circle cx="195.3" cy="92.0" r="1.7"/><circle cx="189.9" cy="91.5" r="1.0"/><circle cx="186.0" cy="89.0" r="1.4"/><circle cx="193.2" cy="89.0" r="1.1"/><circle cx="191.0" cy="86.2" r="1.2"/><circle cx="189.6" cy="87.5" r="0.9"/><circle cx="190.0" cy="90.5" r="1.4"/><circle cx="189.0" cy="92.8" r="1.4"/><circle cx="190.8" cy="93.2" r="0.8"/><circle cx="194.7" cy="88.4" r="1.8"/><circle cx="195.0" cy="91.3" r="1.5"/><circle cx="190.2" cy="91.3" r="1.0"/><circle cx="194.0" cy="93.2" r="0.9"/><circle cx="192.4" cy="87.2" r="1.3"/><circle cx="187.5" cy="88.2" r="1.5"/><circle cx="188.5" cy="88.4" r="1.5"/><circle cx="190.8" cy="93.9" r="1.6"/><circle cx="191.5" cy="87.4" r="1.6"/><circle cx="194.7" cy="89.6" r="1.1"/><circle cx="185.7" cy="89.3" r="0.9"/><circle cx="194.8" cy="90.2" r="1.5"/><circle cx="191.5" cy="87.2" r="1.8"/><circle cx="191.7" cy="94.0" r="0.9"/><circle cx="193.0" cy="90.3" r="0.9"/><circle cx="186.9" cy="90.0" r="1.0"/><circle cx="194.1" cy="89.0" r="0.9"/><circle cx="193.1" cy="93.6" r="1.7"/><circle cx="184.5" cy="92.7" r="1.6"/><circle cx="184.3" cy="96.6" r="1.3"/><circle cx="181.9" cy="89.9" r="1.6"/><circle cx="181.0" cy="92.7" r="1.7"/><circle cx="187.7" cy="94.5" r="0.9"/><circle cx="181.9" cy="89.7" r="1.7"/><circle cx="187.8" cy="93.3" r="1.2"/><circle cx="188.7" cy="89.8" r="1.4"/><circle cx="184.4" cy="94.3" r="1.1"/><circle cx="181.6" cy="92.9" r="1.0"/><circle cx="184.3" cy="88.3" r="1.1"/><circle cx="186.6" cy="91.9" r="1.4"/><circle cx="186.8" cy="95.6" r="1.7"/><circle cx="183.5" cy="96.0" r="1.6"/><circle cx="183.4" cy="94.6" r="1.3"/><circle cx="185.7" cy="90.8" r="1.5"/><circle cx="181.0" cy="90.2" r="1.4"/><circle cx="185.9" cy="90.6" r="1.7"/><circle cx="180.9" cy="95.2" r="1.7"/><circle cx="186.1" cy="96.0" r="1.8"/><circle cx="183.7" cy="92.7" r="0.9"/><circle cx="184.5" cy="91.9" r="1.7"/><circle cx="186.8" cy="95.3" r="0.9"/><circle cx="186.2" cy="95.4" r="0.9"/><circle cx="181.2" cy="95.8" r="1.5"/><circle cx="188.0" cy="88.9" r="0.8"/><circle cx="184.5" cy="96.1" r="1.5"/><circle cx="187.8" cy="92.8" r="1.0"/><circle cx="182.4" cy="92.6" r="0.8"/><circle cx="187.1" cy="91.8" r="1.7"/><circle cx="186.8" cy="94.2" r="0.9"/><circle cx="181.9" cy="92.9" r="1.5"/><circle cx="186.8" cy="95.2" r="1.3"/><circle cx="186.5" cy="93.8" r="1.3"/></g><g fill="#15596f"><circle cx="207.1" cy="88.5" r="0.9"/><circle cx="209.5" cy="89.0" r="1.4"/><circle cx="203.6" cy="92.1" r="1.0"/><circle cx="205.1" cy="90.4" r="1.2"/><circle cx="200.2" cy="92.1" r="1.1"/><circle cx="209.0" cy="90.3" r="1.4"/><circle cx="199.7" cy="89.0" r="1.4"/><circle cx="209.6" cy="89.5" r="1.4"/><circle cx="201.3" cy="91.7" r="1.1"/><circle cx="207.7" cy="89.5" r="1.1"/><circle cx="202.1" cy="91.0" r="1.7"/><circle cx="208.7" cy="90.1" r="1.6"/><circle cx="203.9" cy="94.0" r="1.1"/><circle cx="204.2" cy="92.3" r="0.8"/><circle cx="206.9" cy="86.2" r="1.6"/><circle cx="208.8" cy="91.3" r="1.0"/><circle cx="201.3" cy="87.0" r="1.0"/><circle cx="204.2" cy="90.0" r="1.4"/><circle cx="212.6" cy="95.1" r="1.3"/><circle cx="212.9" cy="97.9" r="1.3"/><circle cx="209.8" cy="94.9" r="1.4"/><circle cx="206.6" cy="100.3" r="1.3"/><circle cx="208.5" cy="95.4" r="1.3"/><circle cx="207.3" cy="97.4" r="1.3"/><circle cx="209.5" cy="102.8" r="1.2"/><circle cx="209.2" cy="94.4" r="1.2"/><circle cx="210.4" cy="99.9" r="1.6"/><circle cx="205.7" cy="97.3" r="1.2"/><circle cx="211.1" cy="95.7" r="0.9"/><circle cx="211.8" cy="94.9" r="1.3"/><circle cx="212.7" cy="93.7" r="1.6"/><circle cx="213.6" cy="98.8" r="1.5"/><circle cx="210.9" cy="96.4" r="0.9"/><circle cx="210.0" cy="99.6" r="1.1"/><circle cx="211.4" cy="94.5" r="1.2"/><circle cx="213.2" cy="99.7" r="1.7"/><circle cx="196.9" cy="96.3" r="1.2"/><circle cx="199.3" cy="95.5" r="0.8"/><circle cx="196.7" cy="96.7" r="1.2"/><circle cx="198.2" cy="101.6" r="1.0"/><circle cx="197.5" cy="99.4" r="0.9"/><circle cx="196.9" cy="98.6" r="0.9"/><circle cx="197.5" cy="96.8" r="1.0"/><circle cx="198.2" cy="102.9" r="0.8"/><circle cx="195.0" cy="96.0" r="0.9"/><circle cx="194.1" cy="100.8" r="1.3"/><circle cx="197.3" cy="99.6" r="1.1"/><circle cx="195.2" cy="101.7" r="1.0"/><circle cx="194.6" cy="100.9" r="1.5"/><circle cx="196.1" cy="101.1" r="1.3"/><circle cx="199.9" cy="98.2" r="1.7"/><circle cx="197.3" cy="96.5" r="1.4"/><circle cx="197.4" cy="100.0" r="1.5"/><circle cx="195.4" cy="101.1" r="1.2"/></g><g fill="#14586e"><path d="M229 80L231 80L233 108L228 108z"/><circle cx="233.7" cy="62.6" r="0.8"/><circle cx="223.5" cy="63.5" r="1.4"/><circle cx="230.7" cy="62.3" r="1.4"/><circle cx="232.1" cy="63.1" r="1.4"/><circle cx="220.8" cy="65.5" r="1.6"/><circle cx="227.7" cy="61.7" r="0.8"/><circle cx="225.5" cy="61.4" r="1.7"/><circle cx="228.3" cy="63.7" r="1.1"/><circle cx="234.4" cy="68.9" r="0.9"/><circle cx="233.9" cy="69.1" r="1.5"/><circle cx="234.2" cy="67.9" r="1.7"/><circle cx="226.1" cy="66.2" r="1.6"/><circle cx="222.7" cy="68.6" r="2.0"/><circle cx="231.0" cy="60.2" r="1.0"/><circle cx="225.1" cy="70.2" r="0.8"/><circle cx="232.2" cy="65.7" r="1.1"/><circle cx="226.4" cy="69.2" r="1.8"/><circle cx="222.6" cy="64.3" r="1.3"/><circle cx="232.2" cy="67.2" r="1.8"/><circle cx="230.4" cy="60.0" r="1.1"/><circle cx="228.5" cy="67.5" r="1.4"/><circle cx="224.2" cy="69.3" r="1.4"/><circle cx="223.8" cy="63.9" r="1.8"/><circle cx="230.4" cy="72.2" r="1.5"/><circle cx="232.3" cy="67.2" r="1.4"/><circle cx="222.9" cy="68.8" r="1.2"/><circle cx="235.1" cy="81.3" r="1.1"/><circle cx="234.5" cy="70.8" r="1.5"/><circle cx="229.5" cy="77.6" r="1.3"/><circle cx="237.2" cy="75.0" r="1.3"/><circle cx="235.0" cy="75.0" r="1.8"/><circle cx="240.9" cy="78.0" r="1.0"/><circle cx="240.6" cy="73.9" r="1.8"/><circle cx="230.3" cy="76.1" r="1.6"/><circle cx="235.1" cy="78.6" r="1.8"/><circle cx="240.1" cy="80.5" r="1.0"/><circle cx="237.7" cy="77.1" r="1.7"/><circle cx="240.3" cy="74.8" r="1.6"/><circle cx="235.7" cy="81.7" r="1.6"/><circle cx="236.9" cy="77.2" r="1.6"/><circle cx="242.2" cy="77.4" r="1.2"/><circle cx="236.6" cy="80.5" r="1.2"/><circle cx="233.4" cy="75.1" r="1.9"/><circle cx="233.1" cy="80.9" r="1.0"/><circle cx="238.1" cy="70.4" r="1.3"/><circle cx="240.2" cy="76.8" r="1.6"/><circle cx="236.9" cy="80.3" r="0.9"/><circle cx="230.2" cy="77.1" r="1.3"/><circle cx="235.0" cy="74.2" r="1.8"/><circle cx="240.8" cy="80.0" r="2.0"/><circle cx="240.7" cy="74.4" r="1.1"/><circle cx="232.5" cy="80.2" r="1.4"/><circle cx="223.9" cy="77.2" r="1.4"/><circle cx="225.6" cy="74.5" r="1.4"/><circle cx="224.2" cy="79.2" r="1.1"/><circle cx="227.0" cy="74.6" r="1.1"/><circle cx="223.1" cy="77.5" r="1.5"/><circle cx="226.0" cy="77.3" r="1.9"/><circle cx="221.1" cy="76.9" r="1.2"/><circle cx="218.7" cy="78.9" r="1.7"/><circle cx="224.7" cy="82.8" r="1.2"/><circle cx="226.7" cy="79.9" r="0.9"/><circle cx="216.1" cy="76.3" r="1.5"/><circle cx="220.8" cy="78.3" r="1.4"/><circle cx="226.6" cy="80.7" r="1.0"/><circle cx="218.3" cy="76.3" r="1.2"/><circle cx="220.5" cy="75.9" r="1.0"/><circle cx="225.8" cy="76.8" r="1.8"/><circle cx="225.4" cy="75.1" r="1.0"/><circle cx="227.5" cy="81.1" r="0.9"/><circle cx="216.9" cy="78.1" r="0.9"/><circle cx="219.2" cy="78.5" r="1.4"/><circle cx="217.8" cy="77.8" r="1.0"/><circle cx="219.4" cy="79.5" r="1.0"/><circle cx="222.4" cy="83.5" r="1.4"/><circle cx="222.7" cy="77.5" r="1.9"/><circle cx="215.8" cy="78.4" r="1.5"/><circle cx="220.7" cy="75.4" r="1.7"/><circle cx="234.3" cy="92.9" r="0.8"/><circle cx="227.5" cy="93.0" r="1.2"/><circle cx="233.8" cy="88.7" r="1.5"/><circle cx="232.6" cy="95.2" r="1.7"/><circle cx="231.5" cy="88.4" r="1.1"/><circle cx="225.6" cy="86.1" r="0.8"/><circle cx="227.1" cy="86.2" r="1.8"/><circle cx="228.1" cy="95.1" r="1.4"/><circle cx="232.7" cy="89.7" r="1.9"/><circle cx="227.7" cy="92.3" r="0.9"/><circle cx="232.2" cy="95.8" r="1.6"/><circle cx="234.7" cy="93.2" r="1.0"/><circle cx="233.2" cy="93.0" r="1.2"/><circle cx="239.9" cy="89.0" r="1.7"/><circle cx="226.4" cy="90.6" r="1.7"/><circle cx="237.8" cy="86.8" r="1.6"/><circle cx="234.0" cy="95.1" r="1.8"/><circle cx="232.6" cy="88.0" r="1.7"/><circle cx="230.1" cy="92.2" r="2.0"/><circle cx="228.8" cy="84.8" r="1.0"/><circle cx="235.7" cy="84.2" r="1.9"/><circle cx="231.8" cy="83.8" r="1.8"/><circle cx="227.6" cy="87.6" r="1.8"/><circle cx="233.6" cy="83.8" r="1.2"/><circle cx="237.7" cy="88.8" r="1.9"/><circle cx="237.9" cy="94.5" r="1.7"/><circle cx="219.9" cy="98.7" r="1.1"/><circle cx="221.3" cy="97.3" r="1.1"/><circle cx="214.3" cy="94.2" r="1.6"/><circle cx="219.1" cy="90.9" r="1.7"/><circle cx="221.3" cy="89.9" r="1.9"/><circle cx="221.8" cy="91.1" r="0.9"/><circle cx="216.8" cy="90.2" r="1.2"/><circle cx="215.5" cy="91.4" r="1.8"/><circle cx="224.2" cy="94.1" r="0.8"/><circle cx="224.2" cy="96.9" r="1.3"/><circle cx="216.8" cy="91.9" r="1.2"/><circle cx="220.8" cy="97.0" r="1.8"/><circle cx="217.6" cy="92.1" r="0.9"/><circle cx="219.3" cy="98.2" r="1.3"/><circle cx="217.1" cy="90.1" r="0.9"/><circle cx="219.5" cy="93.1" r="1.8"/><circle cx="221.3" cy="96.4" r="1.9"/><circle cx="218.2" cy="95.8" r="1.9"/><circle cx="215.6" cy="90.9" r="1.3"/><circle cx="214.1" cy="94.0" r="1.4"/><circle cx="222.6" cy="93.8" r="1.8"/><circle cx="222.3" cy="97.2" r="0.8"/><circle cx="222.6" cy="98.4" r="1.3"/><circle cx="221.1" cy="91.6" r="1.2"/><circle cx="223.6" cy="96.2" r="1.8"/><circle cx="216.3" cy="93.7" r="1.9"/><circle cx="241.8" cy="95.4" r="0.9"/><circle cx="235.2" cy="95.6" r="1.9"/><circle cx="234.8" cy="101.2" r="1.6"/><circle cx="234.9" cy="100.6" r="1.6"/><circle cx="241.5" cy="96.0" r="1.2"/><circle cx="239.4" cy="97.8" r="1.8"/><circle cx="236.2" cy="94.5" r="1.3"/><circle cx="238.0" cy="93.2" r="1.7"/><circle cx="238.0" cy="97.0" r="1.2"/><circle cx="241.8" cy="101.8" r="1.9"/><circle cx="240.8" cy="101.1" r="1.5"/><circle cx="241.6" cy="98.9" r="1.7"/><circle cx="236.0" cy="95.9" r="1.7"/><circle cx="236.9" cy="101.6" r="1.3"/><circle cx="242.8" cy="97.4" r="1.8"/><circle cx="236.4" cy="95.2" r="2.0"/><circle cx="236.8" cy="93.9" r="1.1"/><circle cx="240.4" cy="101.3" r="1.8"/><circle cx="239.0" cy="95.1" r="1.0"/><circle cx="232.4" cy="97.5" r="1.0"/><circle cx="237.8" cy="95.9" r="1.2"/><circle cx="241.1" cy="98.9" r="1.3"/><circle cx="243.8" cy="97.0" r="1.0"/><circle cx="235.9" cy="102.6" r="1.0"/><circle cx="236.3" cy="101.0" r="0.9"/><circle cx="237.8" cy="101.2" r="1.3"/><circle cx="230.5" cy="57.5" r="1.0"/><circle cx="230.8" cy="56.5" r="1.8"/><circle cx="225.1" cy="55.2" r="1.2"/><circle cx="230.5" cy="61.0" r="1.4"/><circle cx="224.2" cy="56.7" r="1.7"/><circle cx="227.5" cy="60.5" r="1.9"/><circle cx="225.4" cy="57.6" r="1.6"/><circle cx="227.7" cy="61.7" r="0.8"/><circle cx="229.7" cy="55.2" r="1.2"/><circle cx="230.4" cy="57.2" r="1.1"/><circle cx="231.4" cy="59.3" r="1.7"/><circle cx="226.6" cy="55.5" r="1.8"/><circle cx="230.1" cy="59.5" r="1.6"/><circle cx="231.9" cy="57.3" r="1.6"/><circle cx="228.5" cy="55.4" r="1.9"/><circle cx="227.9" cy="55.5" r="1.3"/><circle cx="229.0" cy="55.6" r="1.0"/><circle cx="230.5" cy="55.8" r="1.4"/><circle cx="225.7" cy="54.5" r="1.0"/><circle cx="227.3" cy="58.9" r="1.3"/><circle cx="223.4" cy="57.9" r="1.6"/><circle cx="225.2" cy="56.7" r="1.5"/><circle cx="227.3" cy="61.9" r="1.7"/><circle cx="229.0" cy="56.6" r="1.6"/><circle cx="228.1" cy="55.0" r="1.9"/><circle cx="231.5" cy="55.8" r="1.8"/></g><g fill="#155a6f"><ellipse cx="40" cy="106.3" rx="2.9" ry="3.6"/><circle cx="41.1" cy="103.7" r="2.0"/><ellipse cx="49" cy="106.7" rx="2.5" ry="3.1"/><circle cx="49.6" cy="104.5" r="1.8"/><ellipse cx="62" cy="108.2" rx="3.0" ry="3.7"/><circle cx="62.3" cy="105.6" r="2.1"/><ellipse cx="69" cy="108.6" rx="2.6" ry="3.3"/><circle cx="67.7" cy="106.3" r="1.8"/><ellipse cx="80" cy="110.3" rx="2.9" ry="3.6"/><circle cx="81.0" cy="107.7" r="2.0"/><ellipse cx="88" cy="110.6" rx="2.6" ry="3.3"/><circle cx="87.1" cy="108.3" r="1.8"/><ellipse cx="97" cy="110.7" rx="2.6" ry="3.2"/><circle cx="95.8" cy="108.3" r="1.8"/><ellipse cx="107" cy="110.3" rx="2.9" ry="3.7"/><circle cx="108.4" cy="107.6" r="2.1"/><ellipse cx="113" cy="110.2" rx="3.0" ry="3.8"/><circle cx="112.6" cy="107.4" r="2.1"/><ellipse cx="125" cy="110.2" rx="3.0" ry="3.7"/><circle cx="123.7" cy="107.6" r="2.1"/><ellipse cx="135" cy="110.1" rx="3.1" ry="3.8"/><circle cx="134.5" cy="107.4" r="2.1"/><ellipse cx="142" cy="110.9" rx="2.4" ry="3.0"/><circle cx="142.4" cy="108.7" r="1.7"/><ellipse cx="153" cy="108.7" rx="2.5" ry="3.1"/><circle cx="152.3" cy="106.5" r="1.8"/><ellipse cx="163" cy="108.8" rx="2.4" ry="3.1"/><circle cx="162.8" cy="106.6" r="1.7"/><ellipse cx="172" cy="106.4" rx="2.8" ry="3.6"/><circle cx="172.9" cy="103.8" r="2.0"/><ellipse cx="178" cy="106.8" rx="2.4" ry="3.0"/><circle cx="179.0" cy="104.6" r="1.7"/></g><path d="M143 44l1.5 1l1.5-1M148 46l1.3 .8l1.3-.8M144 49l1.2 .8l1.2-.8M151 50l1.2 .8l1.2-.8M147 52l1 .6l1-.6" stroke="#4a4a3a" stroke-width=".5" fill="none"/></svg></div><div class="dot"></div><svg class="dl" viewBox="0 0 24 24"><path d="M19 9h-4V3H9v6H5l7 7 7-7zM5 18v2h14v-2H5z"/></svg><svg class="cl" viewBox="0 0 24 24"><path d="M19 6.41L17.59 5 12 10.59 6.41 5 5 6.41 10.59 12 5 17.59 6.41 19 12 13.41 17.59 19 19 17.59 13.41 12z"/></svg><div class="r1"><span class="lab">Quality</span><i class="trk" style="left:57px;width:133px"></i><i class="thm" style="left:153px"></i><span class="val">80%</span></div><div class="r2"><span class="sel">To JPG</span><svg class="arr" style="left:60.5px" viewBox="0 0 8 13"><path d="M4 0L8 5H0zM4 13L0 8H8z"/></svg><span class="sz">130.04KB / 128.25KB (+1.4%)</span></div></div><div class="card" style="left:278px;top:140px"><div class="img" style="top:52px;height:135px"><svg viewBox="0 0 240 135" height="135" preserveAspectRatio="none"><rect width="240" height="135" fill="#fcdbc8"/><g transform="scale(0.183016) translate(-21.9,-16.4)"><defs><radialGradient id="i2moon" cx=".45" cy=".45" r=".55"><stop offset="0" stop-color="#fffaf6"/><stop offset=".8" stop-color="#fdf1ea"/><stop offset="1" stop-color="#fbe9df"/></radialGradient></defs><circle cx="230" cy="185" r="246" fill="url(#i2moon)"/><path d="M470 365L600 340L670 345L680 395L560 395L500 378z" fill="#fff" opacity=".92"/><path d="M430 412L650 398L620 415L500 428z" fill="#fff" opacity=".9"/><path d="M960 302L1200 280L1212 292L1030 322z" fill="#fff" opacity=".92"/><path d="M1030 332L1180 335L1322 348L1300 378L1120 388z" fill="#fff" opacity=".95"/><path d="M1185 122Q1215 118 1226 98Q1222 124 1185 122z" fill="#fff"/><path d="M22 300L60 315L130 330L160 345L183 318L215 345L225 390L290 385L320 372L360 385L395 372L420 420L450 455L500 480L525 525L540 520L575 500L640 400L690 310L700 300L700 258L712 258L714 300L718 258L732 258L735 300L760 280L800 258L830 272L900 290L905 283L1000 318L1000 310L1100 375L1180 420L1230 432L1283 380L1310 400L1332 395L1332 760L22 760z" fill="#ff8048" /><path d="M575 505L640 400L700 300L760 288L800 262L830 292L920 335L1000 400L1100 432L1230 440L1283 385L1332 400L1332 760L575 760z" fill="#ff6d3e" /><path d="M22 335L80 350L150 352L183 322L215 350L235 392L300 392L330 380L360 390L395 375L430 440L470 500L470 760L22 760z" fill="#ff6d3e" /><path d="M22 430L60 445L183 322L215 350L210 420L240 410L330 500L360 390L395 375L430 440L470 520L500 560L620 560L700 500L770 452L830 500L900 500L1010 440L1100 470L1200 450L1283 385L1332 400L1332 760L22 760z" fill="#ff5a38" /><path d="M22 600L95 570L125 510L243 410L300 480L330 500L360 560L420 620L450 640L510 540L570 510L600 550L650 620L680 630L757 565L790 600L830 540L895 500L950 550L1000 590L1045 590L1100 600L1230 610L1280 565L1332 555L1332 760L22 760z" fill="#7b0230" /><path d="M22 560L48 525L95 580L125 610L150 630L200 635L320 625L400 635L430 625L480 650L520 625L600 625L660 645L757 565L800 605L860 640L950 610L1045 590L1120 610L1200 650L1270 620L1332 640L1332 760L22 760z" fill="#510030" /><path d="M22 665L65 650L150 670L300 695L420 700L560 690L680 705L780 690L900 700L1050 690L1180 665L1270 635L1332 650L1332 760L22 760z" fill="#2e102e" /></g></svg></div><div class="dot"></div><svg class="dl" viewBox="0 0 24 24"><path d="M19 9h-4V3H9v6H5l7 7 7-7zM5 18v2h14v-2H5z"/></svg><svg class="cl" viewBox="0 0 24 24"><path d="M19 6.41L17.59 5 12 10.59 6.41 5 5 6.41 10.59 12 5 17.59 6.41 19 12 13.41 17.59 19 19 17.59 13.41 12z"/></svg><div class="r1"><span class="lab">Quality</span><i class="trk" style="left:57px;width:133px"></i><i class="thm" style="left:153px"></i><span class="val">80%</span></div><div class="r2"><span class="sel">To JPG</span><svg class="arr" style="left:60.5px" viewBox="0 0 8 13"><path d="M4 0L8 5H0zM4 13L0 8H8z"/></svg><span class="sz">54.2KB / 114.74KB (-52.8%)</span></div></div><div class="card" style="left:538px;top:140px"><div class="img" style="top:52px;height:135px"><svg viewBox="0 0 240 135" height="135" preserveAspectRatio="none"><defs><linearGradient id="i3sky" x1="0" y1="0" x2="0" y2="1"><stop offset="0" stop-color="#463f6b"/><stop offset=".3" stop-color="#65507c"/><stop offset=".55" stop-color="#8d6289"/><stop offset=".75" stop-color="#b56782"/><stop offset="1" stop-color="#cf6a7c"/></linearGradient><linearGradient id="i3lit" x1="0" y1="0" x2="1" y2="1"><stop offset="0" stop-color="#c86a82"/><stop offset=".5" stop-color="#b05c80"/><stop offset="1" stop-color="#5a4a7a"/></linearGradient><linearGradient id="i3lit2" x1="0" y1="0" x2=".6" y2="1"><stop offset="0" stop-color="#f58a72"/><stop offset=".5" stop-color="#d86a7c"/><stop offset="1" stop-color="#8a5686"/></linearGradient><linearGradient id="i3sh" x1="0" y1="0" x2="1" y2="0"><stop offset="0" stop-color="#5c5486"/><stop offset="1" stop-color="#4c4474"/></linearGradient><linearGradient id="i3sh2" x1="0" y1="0" x2="1" y2="0"><stop offset="0" stop-color="#a0607f"/><stop offset="1" stop-color="#5e5688"/></linearGradient></defs><rect width="240" height="110" fill="url(#i3sky)"/><rect y="109" width="240" height="26" fill="#cf6a7c"/><g transform="scale(0.183016) translate(-21.9,-16.4)"><circle cx="337" cy="120" r="2.1" fill="#e6d6b0" opacity="0.57"/><circle cx="837" cy="36" r="1.6" fill="#e6d6b0" opacity="0.68"/><circle cx="365" cy="66" r="3.0" fill="#e6d6b0" opacity="0.51"/><circle cx="1109" cy="108" r="2.5" fill="#e6d6b0" opacity="0.37"/><circle cx="849" cy="177" r="2.3" fill="#e6d6b0" opacity="0.63"/><circle cx="896" cy="36" r="2.7" fill="#e6d6b0" opacity="0.57"/><circle cx="419" cy="30" r="2.8" fill="#e6d6b0" opacity="0.51"/><circle cx="957" cy="179" r="2.6" fill="#e6d6b0" opacity="0.71"/><circle cx="540" cy="165" r="2.2" fill="#e6d6b0" opacity="0.72"/><circle cx="1164" cy="42" r="1.8" fill="#e6d6b0" opacity="0.40"/><circle cx="1275" cy="101" r="2.5" fill="#e6d6b0" opacity="0.44"/><circle cx="684" cy="93" r="2.1" fill="#e6d6b0" opacity="0.56"/><circle cx="784" cy="183" r="2.6" fill="#e6d6b0" opacity="0.72"/><circle cx="1135" cy="198" r="2.5" fill="#e6d6b0" opacity="0.37"/><circle cx="1140" cy="194" r="2.9" fill="#e6d6b0" opacity="0.56"/><circle cx="951" cy="62" r="2.8" fill="#e6d6b0" opacity="0.56"/><circle cx="398" cy="36" r="2.8" fill="#e6d6b0" opacity="0.75"/><circle cx="144" cy="165" r="2.2" fill="#e6d6b0" opacity="0.37"/><circle cx="409" cy="160" r="2.8" fill="#e6d6b0" opacity="0.32"/><circle cx="823" cy="33" r="2.6" fill="#e6d6b0" opacity="0.45"/><circle cx="1166" cy="197" r="2.3" fill="#e6d6b0" opacity="0.75"/><circle cx="429" cy="38" r="2.4" fill="#e6d6b0" opacity="0.31"/><circle cx="285" cy="96" r="2.5" fill="#e6d6b0" opacity="0.37"/><circle cx="85" cy="177" r="2.0" fill="#e6d6b0" opacity="0.73"/><circle cx="1187" cy="91" r="2.2" fill="#e6d6b0" opacity="0.53"/><circle cx="861" cy="129" r="2.4" fill="#e6d6b0" opacity="0.58"/><circle cx="1243" cy="114" r="2.2" fill="#e6d6b0" opacity="0.62"/><circle cx="337" cy="78" r="3.0" fill="#e6d6b0" opacity="0.53"/><circle cx="737" cy="27" r="2.2" fill="#e6d6b0" opacity="0.56"/><circle cx="56" cy="133" r="2.5" fill="#e6d6b0" opacity="0.33"/><circle cx="839" cy="107" r="2.6" fill="#e6d6b0" opacity="0.46"/><circle cx="942" cy="154" r="1.6" fill="#e6d6b0" opacity="0.33"/><circle cx="902" cy="194" r="2.0" fill="#e6d6b0" opacity="0.51"/><circle cx="795" cy="81" r="2.1" fill="#e6d6b0" opacity="0.44"/><circle cx="506" cy="129" r="2.0" fill="#e6d6b0" opacity="0.47"/><circle cx="1026" cy="30" r="2.4" fill="#e6d6b0" opacity="0.63"/><circle cx="430" cy="64" r="2.7" fill="#e6d6b0" opacity="0.41"/><circle cx="272" cy="101" r="2.6" fill="#e6d6b0" opacity="0.35"/><circle cx="445" cy="83" r="2.8" fill="#e6d6b0" opacity="0.50"/><circle cx="1134" cy="55" r="2.1" fill="#e6d6b0" opacity="0.59"/><circle cx="1172" cy="104" r="1.9" fill="#e6d6b0" opacity="0.35"/><circle cx="713" cy="58" r="2.7" fill="#e6d6b0" opacity="0.68"/><circle cx="267" cy="74" r="2.7" fill="#e6d6b0" opacity="0.59"/><circle cx="1070" cy="85" r="1.8" fill="#e6d6b0" opacity="0.43"/><circle cx="1054" cy="72" r="2.1" fill="#e6d6b0" opacity="0.49"/><circle cx="572" cy="97" r="2.9" fill="#e6d6b0" opacity="0.37"/><circle cx="36" cy="190" r="2.8" fill="#e6d6b0" opacity="0.74"/><circle cx="590" cy="191" r="2.9" fill="#e6d6b0" opacity="0.40"/><circle cx="530" cy="350" r="30" fill="#6a5080" opacity=".17"/><circle cx="480" cy="362" r="22" fill="#6a5080" opacity=".17"/><circle cx="590" cy="362" r="20" fill="#6a5080" opacity=".17"/><circle cx="420" cy="368" r="15" fill="#6a5080" opacity=".17"/><circle cx="180" cy="440" r="32" fill="#6a5080" opacity=".17"/><circle cx="120" cy="462" r="22" fill="#6a5080" opacity=".17"/><circle cx="250" cy="462" r="22" fill="#6a5080" opacity=".17"/><circle cx="70" cy="468" r="14" fill="#6a5080" opacity=".17"/><circle cx="300" cy="470" r="12" fill="#6a5080" opacity=".17"/><circle cx="1310" cy="460" r="30" fill="#6a5080" opacity=".17"/><circle cx="1260" cy="480" r="20" fill="#6a5080" opacity=".17"/><circle cx="1180" cy="492" r="14" fill="#6a5080" opacity=".17"/><rect x="400" y="362" width="215" height="14" rx="7" fill="#6a5080" opacity=".22"/><rect x="40" y="466" width="275" height="14" rx="7" fill="#6a5080" opacity=".22"/><rect x="1150" y="490" width="190" height="14" rx="7" fill="#6a5080" opacity=".22"/><circle cx="948" cy="306" r="30" fill="#7a5a88"/><circle cx="955" cy="306" r="31" fill="#f6ead0"/><circle cx="942" cy="301" r="29" fill="#7a5a88"/><path d="M22 590L50 585L100 612L22 650z" fill="#8a5c8c" /><path d="M300 640L380 605L365 640L390 668L300 690z" fill="#9a5c88" /><path d="M380 605L460 642L390 670L365 640z" fill="#d8707e" /><path d="M22 640L193 578L200 620L180 660L130 700L180 760L22 760z" fill="url(#i3sh)" /><path d="M193 578L440 700L520 760L180 760L130 700L180 660L200 620z" fill="url(#i3lit)" /><path d="M385 668L683 563L650 600L665 640L600 680L560 710L600 735L720 700L500 760L440 700z" fill="#4e4676" /><path d="M683 563L830 660L920 760L700 760L720 700L600 735L560 710L600 680L665 640L650 600z" fill="url(#i3lit)" /><path d="M440 720L720 700L700 760L480 760z" fill="#5a5080" /><path d="M720 700L830 660L990 612L985 650L940 690L900 720L930 760L700 760z" fill="url(#i3sh2)" /><path d="M990 612L1080 655L1160 760L930 760L900 720L940 690L985 650z" fill="url(#i3lit2)" /><path d="M700 700L760 725L860 760L700 760z" fill="#d8687c" /><path d="M1080 655L1268 580L1255 620L1280 660L1240 700L1130 760L1120 700z" fill="#5e5688" /><path d="M1268 580L1332 620L1332 760L1130 760L1240 700L1280 660L1255 620z" fill="url(#i3lit2)" /></g></svg></div><div class="dot"></div><svg class="dl" viewBox="0 0 24 24"><path d="M19 9h-4V3H9v6H5l7 7 7-7zM5 18v2h14v-2H5z"/></svg><svg class="cl" viewBox="0 0 24 24"><path d="M19 6.41L17.59 5 12 10.59 6.41 5 5 6.41 10.59 12 5 17.59 6.41 19 12 13.41 17.59 19 19 17.59 13.41 12z"/></svg><div class="r1"><span class="lab">Colors</span><i class="trk" style="left:55px;width:146px"></i><i class="thm" style="left:172px"></i><span class="val">128</span></div><div class="r2"><span class="sel">To PNG</span><svg class="arr" style="left:60.5px" viewBox="0 0 8 13"><path d="M4 0L8 5H0zM4 13L0 8H8z"/></svg><span class="sz">207.11KB / 725.46KB (-71.5%)</span></div></div><div class="card" style="left:798px;top:140px"><div class="img" style="top:52px;height:135px"><svg viewBox="0 0 240 135" height="135" preserveAspectRatio="none"><defs><linearGradient id="i4sky" x1="0" y1="0" x2="0" y2="1"><stop offset="0" stop-color="#2b2e84"/><stop offset="1" stop-color="#2a3a94"/></linearGradient><linearGradient id="i4sea" x1="0" y1="0" x2="0" y2="1"><stop offset="0" stop-color="#22a2ee"/><stop offset=".35" stop-color="#3cc0f6"/><stop offset=".7" stop-color="#1aa4ee"/><stop offset="1" stop-color="#1590e0"/></linearGradient></defs><rect width="240" height="80" fill="url(#i4sky)"/><path d="M0 75L4 76L8 74L12 73L14 75L18 73L22 72L24 74L28 70L40 66L60 62L240 55V135H0z" fill="url(#i4sea)"/><path d="M0 76.5L4 77.5L8 75.5L12 74.5L14 76.5L18 74.5L22 73.5L24 76L27 72" stroke="#e8f8ff" stroke-width=".8" fill="none"/><path d="M0 104L8 105L16 103.5M6 92l8-.6M2 118l12 1M0 131l10-1.5l16 1.5" stroke="#9fe0fb" stroke-width=".7" fill="none"/></svg></div><div class="dot"></div><svg class="dl" viewBox="0 0 24 24"><path d="M19 9h-4V3H9v6H5l7 7 7-7zM5 18v2h14v-2H5z"/></svg><svg class="cl" viewBox="0 0 24 24"><path d="M19 6.41L17.59 5 12 10.59 6.41 5 5 6.41 10.59 12 5 17.59 6.41 19 12 13.41 17.59 19 19 17.59 13.41 12z"/></svg><div class="r1"><span class="lab">Quality</span><i class="trk" style="left:57px;width:133px"></i><i class="thm" style="left:153px"></i><span class="val">80%</span></div><div class="r2"><span class="sel">To JPG</span><svg class="arr" style="left:60.5px" viewBox="0 0 8 13"><path d="M4 0L8 5H0zM4 13L0 8H8z"/></svg><span class="sz">110.93KB / 1.29MB (-91.6%)</span></div></div><div class="card" style="left:1058px;top:140px"><div class="img" style="top:52px;height:135px"><svg viewBox="0 0 240 135" height="135" preserveAspectRatio="none"><defs><linearGradient id="gffffffffffff" x1="0" y1="0" x2="0" y2="1"><stop offset="0" stop-color="#ffffff"/><stop offset="1" stop-color="#ffffff"/></linearGradient></defs><rect width="240" height="135" fill="url(#gffffffffffff)"/></svg></div><div class="dot"></div><svg class="dl" viewBox="0 0 24 24"><path d="M19 9h-4V3H9v6H5l7 7 7-7zM5 18v2h14v-2H5z"/></svg><svg class="cl" viewBox="0 0 24 24"><path d="M19 6.41L17.59 5 12 10.59 6.41 5 5 6.41 10.59 12 5 17.59 6.41 19 12 13.41 17.59 19 19 17.59 13.41 12z"/></svg><div class="r1"><span class="lab">Quality</span><i class="trk" style="left:57px;width:133px"></i><i class="thm" style="left:153px"></i><span class="val">80%</span></div><div class="r2"><span class="sel">To JPG</span><svg class="arr" style="left:60.5px" viewBox="0 0 8 13"><path d="M4 0L8 5H0zM4 13L0 8H8z"/></svg><span class="sz">114.77KB / 301.03KB (-61.9%)</span></div></div><div class="card" style="left:18px;top:456px"><div class="img" style="top:69px;height:100px;transform:translateY(0.90px)"><svg viewBox="0 0 240 100" height="100" preserveAspectRatio="none"><defs><linearGradient id="i6sky" x1="0" y1="0" x2="0" y2="1"><stop offset="0" stop-color="#5a396e"/><stop offset=".25" stop-color="#7d4470"/><stop offset=".55" stop-color="#b8605a"/><stop offset=".85" stop-color="#e08a30"/><stop offset="1" stop-color="#e89830"/></linearGradient><radialGradient id="i6sun" cx=".5" cy=".5" r=".5"><stop offset="0" stop-color="#ffd060"/><stop offset=".2" stop-color="#f8b040" stop-opacity=".9"/><stop offset=".55" stop-color="#f0a038" stop-opacity=".55"/><stop offset="1" stop-color="#e89030" stop-opacity="0"/></radialGradient><linearGradient id="i6lake" x1="0" y1="0" x2="0" y2="1"><stop offset="0" stop-color="#e8a050"/><stop offset=".45" stop-color="#c07868"/><stop offset="1" stop-color="#80487a"/></linearGradient><linearGradient id="i6mt" x1="0" y1="0" x2="0" y2="1"><stop offset="0" stop-color="#a4543c"/><stop offset="1" stop-color="#6a3050"/></linearGradient></defs><rect width="240" height="100" fill="#2a1838"/><g transform="scale(0.20194) translate(-19.8,-133)"><rect x="19" y="133" width="1190" height="230" fill="url(#i6sky)"/><circle cx="668" cy="323" r="125" fill="url(#i6sun)"/><path d="M19 255L60 275L150 300L230 312L300 318L360 335L420 345L470 338L530 355L560 340L600 322L640 345L680 362L720 345L760 325L830 305L900 288L960 262L1000 252L1040 262L1100 248L1160 225L1209 212L1209 470L19 470z" fill="url(#i6mt)" /><circle cx="668" cy="323" r="70" fill="url(#i6sun)" opacity=".6"/><circle cx="668" cy="323" r="10" fill="#fff8e8"/><path d="M19 330L150 345L300 360L420 390L470 400L520 395L600 385L640 400L700 395L760 380L850 350L1000 330L1209 300L1209 500L19 500z" fill="#543050" /><path d="M462 440L480 425L520 410L560 402L640 405L700 410L738 430L740 460L700 478L600 486L520 480L480 465z" fill="url(#i6lake)" /><path d="M19 450L200 455L330 462L420 470L470 482L560 490L700 485L760 470L900 450L1209 440L1209 640L19 640z" fill="#33204a" /><path d="M478 488L476 455L482 445L500 440L512 432L516 420L522 418L528 430L526 452L524 488L518 488L517 462L490 462L486 488z" fill="#352046" /><path d="M516 420L506 405L498 392M506 405L498 406M522 418L532 404L540 390M532 404L540 404" stroke="#352046" stroke-width="3" fill="none"/><path d="M100 165L112.721 208.889L106.36 200.111L123.719 252.778L111.86 244L137.261 296.667L118.63 287.889L141.506 340.556L120.753 331.778L150.851 384.444L125.425 375.667L160.863 428.333L130.431 419.556L160.796 472.222L130.398 463.444L175.92 516.111L137.96 507.333L187.029 560L8.77245 560L66.8407 507.333L29.7093 516.111L73.4725 463.444L36.0171 472.222L68.8578 419.556L47.6295 428.333L72.1452 375.667L44.512 384.444L78.9671 331.778L58.3322 340.556L83.4306 287.889L68.1886 296.667L88.3528 244L79.4857 252.778L94.2911 200.111L88.4178 208.889z" fill="#3a2852" /><path d="M185 222L191.499 257.333L188.25 250.267L198.599 292.667L191.8 285.6L204.052 328L194.526 320.933L212.477 363.333L198.738 356.267L215.155 398.667L200.078 391.6L221.549 434L203.275 426.933L224.895 469.333L204.948 462.267L231.987 504.667L208.493 497.6L233.734 540L140.187 540L159.171 497.6L133.365 504.667L163.854 462.267L144.029 469.333L168.026 426.933L151.835 434L171.095 391.6L158.839 398.667L170.691 356.267L158.894 363.333L174.887 320.933L166.965 328L177.592 285.6L170.56 292.667L182.237 250.267L179.135 257.333z" fill="#3a2852" /><path d="M260 275L269.947 302.222L264.973 296.778L275.722 329.444L267.861 324L285.802 356.667L272.901 351.222L287.683 383.889L273.842 378.444L289.922 411.111L274.961 405.667L302.034 438.333L281.017 432.889L310.085 465.556L285.043 460.111L307.821 492.778L283.91 487.333L309.569 520L213.745 520L233.913 487.333L210.29 492.778L237.975 460.111L214.342 465.556L241.605 432.889L223.642 438.333L244.302 405.667L233.237 411.111L246.299 378.444L233.373 383.889L248.419 351.222L233.347 356.667L253.061 324L244.106 329.444L255.628 296.778L250.499 302.222z" fill="#3c2a54" /><path d="M35 300L40.3382 328.889L37.6691 323.111L44.8124 357.778L39.9062 352L52.157 386.667L43.5785 380.889L55.9009 415.556L45.4505 409.778L56.6309 444.444L45.8155 438.667L65.1939 473.333L50.097 467.556L62.8872 502.222L48.9436 496.444L68.232 531.111L51.616 525.333L77.2525 560L-7.69444 560L20.4596 525.333L-1.46633 531.111L22.4046 496.444L9.4952 502.222L19.2513 467.556L6.85206 473.333L25.0056 438.667L16.2168 444.444L25.8817 409.778L14.1893 415.556L27.1871 380.889L17.8374 386.667L30.3738 352L25.5477 357.778L32.0912 323.111L29.8169 328.889z" fill="#3c2852" /><path d="M845 170L857.769 213.333L851.384 204.667L870.089 256.667L857.544 248L873.56 300L859.28 291.333L881.104 343.333L863.052 334.667L900.315 386.667L872.658 378L907.95 430L876.475 421.333L905.059 473.333L875.03 464.667L910.901 516.667L877.95 508L931.855 560L750.753 560L815.373 508L773.331 516.667L812.852 464.667L784.888 473.333L814.93 421.333L789.858 430L821.223 378L784.669 386.667L828.58 334.667L807.952 343.333L831.945 291.333L814.843 300L832.467 248L821.834 256.667L839.293 204.667L831.847 213.333z" fill="#3c2852" /><path d="M945 240L950.705 273.333L947.852 266.667L955.883 306.667L950.442 300L962.118 340L953.559 333.333L968.845 373.333L956.923 366.667L971.875 406.667L958.438 400L973.185 440L959.093 433.333L984.078 473.333L964.539 466.667L980.062 506.667L962.531 500L981.224 540L911.772 540L928.145 500L914.668 506.667L927.531 466.667L908.181 473.333L931.006 433.333L920.116 440L932.361 400L916.17 406.667L931.943 366.667L920.815 373.333L936.246 333.333L927.949 340L940.184 300L935.654 306.667L942.563 266.667L938.853 273.333z" fill="#39274f" /><path d="M1080 180L1093.27 224.444L1086.63 215.556L1105.77 268.889L1092.89 260L1106.94 313.333L1093.47 304.444L1122.27 357.778L1101.14 348.889L1128.72 402.222L1104.36 393.333L1141.37 446.667L1110.69 437.778L1141.49 491.111L1110.74 482.222L1164.58 535.556L1122.29 526.667L1149.92 580L1011.02 580L1036.26 526.667L989.075 535.556L1048.2 482.222L1016.92 491.111L1047.83 437.778L1013.79 446.667L1057.15 393.333L1030.24 402.222L1057.27 348.889L1034.86 357.778L1067.15 304.444L1051.78 313.333L1066.27 260L1054.4 268.889L1073.33 215.556L1067.46 224.444z" fill="#3a2750" /><path d="M1200 190L1207.53 233.333L1203.76 224.667L1213.68 276.667L1206.84 268L1216.19 320L1208.1 311.333L1224.89 363.333L1212.45 354.667L1233.31 406.667L1216.66 398L1237.69 450L1218.84 441.333L1241.13 493.333L1220.56 484.667L1241.46 536.667L1220.73 528L1251.03 580L1149.22 580L1180.1 528L1156.07 536.667L1182.09 484.667L1157.33 493.333L1183.84 441.333L1162.3 450L1183.84 398L1169.77 406.667L1187.25 354.667L1175.75 363.333L1191.87 311.333L1182.51 320L1193.75 268L1188.33 276.667L1196.52 224.667L1192.32 233.333z" fill="#3a2750" /><path d="M790 270L795.319 297.778L792.66 292.222L799.478 325.556L794.739 320L806.849 353.333L798.425 347.778L810.037 381.111L800.019 375.556L812.634 408.889L801.317 403.333L820.252 436.667L805.126 431.111L819.014 464.444L804.507 458.889L826.181 492.222L808.09 486.667L824.382 520L757.071 520L770.978 486.667L750.977 492.222L774.477 458.889L762.55 464.444L774.938 431.111L761.892 436.667L779.995 403.333L767.952 408.889L779.388 375.556L768.717 381.111L781.341 347.778L771.676 353.333L785.644 320L781.543 325.556L787.44 292.222L785.113 297.778z" fill="#3a2750" /><path d="M1000 370L1004.01 391.111L1002 386.889L1007.72 412.222L1003.86 408L1011.65 433.333L1005.82 429.111L1014.28 454.444L1007.14 450.222L1016.28 475.556L1008.14 471.333L1022.35 496.667L1011.18 492.444L1026.52 517.778L1013.26 513.556L1025.4 538.889L1012.7 534.667L1024.67 560L978.834 560L986.435 534.667L978.148 538.889L986.379 513.556L973.673 517.778L989.636 492.444L976.576 496.667L993.04 471.333L985.605 475.556L993.12 450.222L987.776 454.444L993.842 429.111L989.409 433.333L996.583 408L993.347 412.222L997.983 386.889L996.148 391.111z" fill="#3c2852" /><path d="M1150 290L1155.35 320L1152.67 314L1159.71 350L1154.86 344L1164.34 380L1157.17 374L1169.11 410L1159.55 404L1171.35 440L1160.68 434L1171.32 470L1160.66 464L1176.64 500L1163.32 494L1177.03 530L1163.51 524L1178.11 560L1122.79 560L1136.1 524L1125.81 530L1137.77 494L1125.05 500L1139.08 464L1129.1 470L1139.29 434L1127.82 440L1140.94 404L1129.98 410L1142.28 374L1137.5 380L1144.74 344L1139.99 350L1147.64 314L1144.85 320z" fill="#3a2750" /><path d="M235 345L245.456 376.875L240.228 370.5L255.476 408.75L245.238 402.375L259.593 440.625L247.296 434.25L268.387 472.5L251.693 466.125L279.233 504.375L257.117 498L285.445 536.25L260.223 529.875L294.957 568.125L264.978 561.75L293.225 600L176.028 600L207.983 561.75L173.216 568.125L208.4 529.875L184.03 536.25L212.233 498L195.043 504.375L217.055 466.125L198.437 472.5L221.544 434.25L210.795 440.625L224.274 402.375L215.956 408.75L229.367 370.5L223.875 376.875z" fill="#2a1a40" /><path d="M75 480L82.7228 498.75L78.8614 495L87.6936 517.5L81.3468 513.75L95.2506 536.25L85.1253 532.5L101.771 555L88.3854 551.25L109.554 573.75L92.2772 570L112.049 592.5L93.5243 588.75L111.089 611.25L93.0443 607.5L127.137 630L29.8485 630L56.0541 607.5L42.7648 611.25L57.703 588.75L36.2111 592.5L59.7075 570L44.3444 573.75L61.8939 551.25L47.4021 555L64.2672 532.5L54.2969 536.25L68.1046 513.75L62.6473 517.5L70.8015 495L68.2695 498.75z" fill="#23142f" /><path d="M425 495L429.734 510.625L427.367 507.5L434.435 526.25L429.718 523.125L437.332 541.875L431.166 538.75L443.084 557.5L434.042 554.375L446.282 573.125L435.641 570L448.977 588.75L436.988 585.625L455.083 604.375L440.041 601.25L455.976 620L396.257 620L410.781 601.25L393.072 604.375L412.111 585.625L403.372 588.75L413.692 570L401.758 573.125L416.129 554.375L407.038 557.5L419.449 538.75L412.866 541.875L420.396 523.125L415.552 526.25L422.972 507.5L419.829 510.625z" fill="#2c1b42" /><path d="M530 505L538.967 520.625L534.484 517.5L545.577 536.25L537.788 533.125L554.857 551.875L542.429 548.75L559.563 567.5L544.781 564.375L564.942 583.125L547.471 580L573.383 598.75L551.692 595.625L570.25 614.375L550.125 611.25L582.889 630L479.574 630L508.08 611.25L486.496 614.375L510.102 595.625L487.992 598.75L514.595 580L496.51 583.125L514.421 564.375L498.216 567.5L517.955 548.75L506.9 551.875L523.007 533.125L514.353 536.25L525.152 517.5L522.088 520.625z" fill="#1f1130" /><path d="M610 500L617.061 516.25L613.53 513L619.933 532.5L614.967 529.25L624.914 548.75L617.457 545.5L629.266 565L619.633 561.75L636.99 581.25L623.495 578L638.085 597.5L624.042 594.25L642.373 613.75L626.187 610.5L649.437 630L575.444 630L593.284 610.5L581.489 613.75L596.272 594.25L584.369 597.5L597.862 578L583.48 581.25L600.76 561.75L591.814 565L602.891 545.5L595.35 548.75L605.58 529.25L601.049 532.5L606.442 513L602.871 516.25z" fill="#1d0f2c" /><path d="M680 515L687.368 529.375L683.684 526.5L694.617 543.75L687.309 540.875L699.227 558.125L689.614 555.25L706.389 572.5L693.195 569.625L706.25 586.875L693.125 584L716.022 601.25L698.011 598.375L721.905 615.625L700.953 612.75L728.186 630L635.237 630L660.54 612.75L634.713 615.625L663.709 598.375L640.391 601.25L665.932 584L656.809 586.875L667.995 569.625L652.776 572.5L671.205 555.25L663.19 558.125L672.267 540.875L666.034 543.75L676.141 526.5L673.505 529.375z" fill="#22132f" /><path d="M835 330L846.321 363.75L840.661 357L857.284 397.5L846.142 390.75L860.19 431.25L847.595 424.5L869.363 465L852.182 458.25L883.515 498.75L859.257 492L895.52 532.5L865.26 525.75L905.092 566.25L870.046 559.5L895.093 600L776.324 600L798.568 559.5L766.611 566.25L804.092 525.75L780.698 532.5L813.953 492L792.475 498.75L820.235 458.25L801.052 465L822.673 424.5L810.007 431.25L825.121 390.75L815.031 397.5L829.9 357L822.999 363.75z" fill="#33224a" /><path d="M1000 380L1007.87 410L1003.93 404L1013.94 440L1006.97 434L1015.12 470L1007.56 464L1019.07 500L1009.54 494L1030.57 530L1015.29 524L1030.87 560L1015.44 554L1038.6 590L1019.3 584L1037.72 620L963.536 620L981.11 584L963.043 590L984.561 554L973.658 560L984.327 524L967.559 530L991.461 494L981.623 500L992.177 464L985.617 470L993.737 434L987.579 440L996.152 404L993.282 410z" fill="#2a1a40" /><path d="M950 470L959.118 490L954.559 486L966.013 510L958.006 506L971.969 530L960.985 526L979.354 550L964.677 546L983.158 570L966.579 566L986.074 590L968.037 586L993.737 610L971.869 606L997.564 630L897.885 630L927.012 606L909.999 610L930.559 586L912.623 590L932.683 566L915.063 570L936.036 546L918.47 550L938.247 526L927.51 530L941.659 506L933.326 510L945.662 486L940.603 490z" fill="#1d0f2c" /><path d="M1180 430L1185.61 455L1182.8 450L1191.11 480L1185.56 475L1196.35 505L1188.17 500L1197.82 530L1188.91 525L1204.32 555L1192.16 550L1211.06 580L1195.53 575L1215.25 605L1197.63 600L1214.79 630L1142.22 630L1162.08 600L1147.06 605L1164.24 575L1149.18 580L1168.04 550L1156.96 555L1170.2 525L1161.99 530L1171.62 500L1162.99 505L1173.92 475L1170.49 480L1177.18 450L1174.2 455z" fill="#21122f" /><path d="M740 480L745.092 498.75L742.546 495L749.632 517.5L744.816 513.75L752.04 536.25L746.02 532.5L756.196 555L748.098 551.25L760.812 573.75L750.406 570L762.086 592.5L751.043 588.75L766.566 611.25L753.283 607.5L776.438 630L704.017 630L727.023 607.5L710.996 611.25L729.045 588.75L715.733 592.5L729.495 570L718.098 573.75L732.962 551.25L723.814 555L733.74 532.5L729.63 536.25L734.786 513.75L731.427 517.5L737.536 495L735.457 498.75z" fill="#22132f" /><path d="M1100 520L1107.29 533.75L1103.64 531L1113.62 547.5L1106.81 544.75L1115.98 561.25L1107.99 558.5L1127.05 575L1113.53 572.25L1127.95 588.75L1113.98 586L1133.76 602.5L1116.88 599.75L1139.34 616.25L1119.67 613.5L1140.94 630L1062.28 630L1080.06 613.5L1061.05 616.25L1084.46 599.75L1065.26 602.5L1087.09 586L1076.14 588.75L1087.67 572.25L1076.72 575L1092.89 558.5L1083.4 561.25L1093.55 544.75L1085.37 547.5L1096.22 531L1093.71 533.75z" fill="#26163a" /><path d="M880 520L887.49 533.75L883.745 531L893.337 547.5L886.669 544.75L894.285 561.25L887.143 558.5L903.782 575L891.891 572.25L904.918 588.75L892.459 586L909.546 602.5L894.773 599.75L918.991 616.25L899.496 613.5L914.924 630L845.745 630L858.86 613.5L839.812 616.25L865.713 599.75L847.655 602.5L866.866 586L855.06 588.75L869.551 572.25L856.074 575L873.115 558.5L867.13 561.25L874.245 544.75L866.902 547.5L876.7 531L872.804 533.75z" fill="#1f1130" /><path d="M160 500L166.833 516.25L163.416 513L171.532 532.5L165.766 529.25L175.269 548.75L167.634 545.5L181.629 565L170.815 561.75L184.837 581.25L172.419 578L192.369 597.5L176.184 594.25L194.252 613.75L177.126 610.5L203.972 630L112.152 630L142.299 610.5L128.844 613.75L145.783 594.25L125.263 597.5L147.009 578L135.008 581.25L149.836 561.75L140.147 565L152.203 545.5L144.865 548.75L154.246 529.25L148.373 532.5L156.453 513L153.868 516.25z" fill="#21122f" /><path d="M330 520L336.721 533.75L333.361 531L345.151 547.5L337.576 544.75L351.01 561.25L340.505 558.5L356.554 575L343.277 572.25L354.501 588.75L342.251 586L358.833 602.5L344.417 599.75L365.403 616.25L347.701 613.5L371.74 630L288.016 630L314.5 613.5L295.114 616.25L317.485 599.75L304.869 602.5L317.516 586L305.801 588.75L316.62 572.25L304.952 575L319.814 558.5L311.035 561.25L322.91 544.75L314.3 547.5L326.439 531L324.162 533.75z" fill="#22132f" /><path d="M19 560L60 540L100 565L160 530L200 570L260 535L300 560L380 555L450 575L500 535L560 570L620 540L700 575L760 530L820 560L860 530L900 565L960 520L1050 560L1100 535L1160 565L1209 540L1209 640L19 640z" fill="#1d0f2c" /><rect x="22" y="615" width="192" height="11" fill="#1c0e2a"/><text x="22" y="625.5" font-family="Liberation Sans" font-weight="bold" font-size="11" fill="#fff" stroke="#fff" stroke-width=".5" textLength="192" lengthAdjust="spacingAndGlyphs">WWW.GOODFON.COM</text><rect x="1075" y="620" width="133" height="7" fill="#6a5a78" opacity=".8"/></g></svg></div><div class="dot"></div><svg class="dl" viewBox="0 0 24 24"><path d="M19 9h-4V3H9v6H5l7 7 7-7zM5 18v2h14v-2H5z"/></svg><svg class="cl" viewBox="0 0 24 24"><path d="M19 6.41L17.59 5 12 10.59 6.41 5 5 6.41 10.59 12 5 17.59 6.41 19 12 13.41 17.59 19 19 17.59 13.41 12z"/></svg><div class="r1"><span class="lab">Quality</span><i class="trk" style="left:57px;width:133px"></i><i class="thm" style="left:153px"></i><span class="val">80%</span></div><div class="r2"><span class="sel">To JPG</span><svg class="arr" style="left:60.5px" viewBox="0 0 8 13"><path d="M4 0L8 5H0zM4 13L0 8H8z"/></svg><span class="sz">233.52KB / 856.14KB (-72.7%)</span></div></div><div class="card" style="left:278px;top:456px"><div class="img" style="top:44px;height:150px;transform:translateY(0.90px)"><svg viewBox="0 0 240 150" height="150" preserveAspectRatio="none"><defs><linearGradient id="i7mt" x1="0" y1="0" x2="0" y2="1"><stop offset="0" stop-color="#f8933e"/><stop offset="1" stop-color="#e7682c"/></linearGradient></defs><rect width="240" height="150" fill="#fdd3a7"/><g transform="scale(0.208333) translate(-19.2,-35)"><ellipse cx="110" cy="195" rx="70" ry="45" fill="#fee3c6" opacity=".5"/><ellipse cx="200" cy="215" rx="80" ry="40" fill="#fee3c6" opacity=".5"/><ellipse cx="60" cy="230" rx="50" ry="30" fill="#fee3c6" opacity=".5"/><ellipse cx="960" cy="185" rx="70" ry="40" fill="#fee3c6" opacity=".5"/><ellipse cx="1060" cy="195" rx="50" ry="35" fill="#fee3c6" opacity=".5"/><ellipse cx="420" cy="260" rx="40" ry="25" fill="#fee3c6" opacity=".5"/><ellipse cx="330" cy="235" rx="40" ry="25" fill="#fee3c6" opacity=".5"/><circle cx="595" cy="290" r="48" fill="#fff4e2"/><path d="M640 222l5 3l5-3M690 212l5 3l5-3M745 165l4 3l4-3M735 182l4 3l4-3" stroke="#e8b088" stroke-width="2" fill="none"/><path d="M600 262l4 3l4-3M620 255l4 3l4-3M578 272l4 3l4-3" stroke="#e0a078" stroke-width="2" fill="none"/><path d="M19 240L80 245L150 225L200 205L230 195L260 208L290 215L340 250L400 285L450 292L520 300L560 302L600 290L640 302L700 270L760 215L800 180L810 172L830 176L850 185L880 210L940 235L975 240L1000 262L1100 290L1171 300L1171 500L19 500z" fill="url(#i7mt)" /><path d="M19 255L100 250L200 240L300 270L400 300L520 310L600 300L700 300L800 280L900 270L1000 290L1171 320L1171 500L19 500z" fill="#e2602b" opacity=".8"/><path d="M19 262L22.075 261.7L29.25 245.582L36.425 260.3L60 258L100 272L119.167 270.467L125 257.344L130.833 269.533L150 268L152.25 268.637L157.5 253.116L162.75 271.613L167.25 272.887L172.5 261.684L177.75 275.863L182.25 277.137L187.5 265.187L192.75 280.113L197.25 281.387L202.5 274.744L207.75 284.363L210 285L212.5 285.25L218.333 275.039L224.167 286.417L260 290L262.25 290.75L267.5 276.529L272.75 294.25L277.25 295.75L282.5 283.325L287.75 299.25L292.25 300.75L297.5 294.482L302.75 304.25L320 310L322.25 310.45L327.5 301.345L332.75 312.55L367.25 319.45L372.5 302.885L377.75 321.55L380 322L382.25 322.3L387.5 308.222L392.75 323.7L397.25 324.3L402.5 307.59L407.75 325.7L412.25 326.3L417.5 309.334L422.75 327.7L440 330L442.25 329.7L447.5 317.388L452.75 328.3L457.25 327.7L462.5 317.543L467.75 326.3L472.25 325.7L477.5 313.986L482.75 324.3L487.25 323.7L492.5 314.966L497.75 322.3L500 322L502.25 322.5L507.5 312.288L512.75 324.833L517.25 325.833L522.5 310.815L527.75 328.167L532.25 329.167L537.5 319.175L542.75 331.5L545 332L547.75 332.65L554.167 319.12L560.583 335.683L566.083 336.983L572.5 320.749L578.917 340.017L584.417 341.317L590.833 327.335L597.25 344.35L600 345L617.25 346.438L622.5 330.998L627.75 347.312L632.25 347.688L637.5 334.34L642.75 348.562L647.25 348.938L652.5 340.908L657.75 349.812L660 350L663 349.625L670 331.198L677 347.875L683 347.125L690 330.693L697 345.375L700 345L732.25 348.762L737.5 337.827L742.75 349.988L747.25 350.512L752.5 335.369L757.75 351.738L760 352L762.25 351.55L767.5 335.016L772.75 349.45L807.25 342.55L812.5 324.042L817.75 340.45L820 340L822.25 339.25L827.5 326.093L832.75 335.75L837.25 334.25L842.5 315.319L847.75 330.75L852.25 329.25L857.5 310.258L862.75 325.75L867.25 324.25L872.5 311.375L877.75 320.75L880 320L882.5 319L888.333 306.892L894.167 314.333L899.167 312.333L905 300.511L910.833 307.667L915.833 305.667L921.667 285.366L927.5 301L930 300L932.25 297.1L937.5 281.848L942.75 283.567L962.25 258.433L967.5 239.608L972.75 244.9L975 242L977.625 241.7L983.75 227.06L989.875 240.3L1010 238L1012.1 237.82L1017 225.182L1021.9 236.98L1026.1 236.62L1031 219.039L1035.9 235.78L1040.1 235.42L1045 222.064L1049.9 234.58L1068.1 233.02L1073 217.283L1077.9 232.18L1080 232L1099.17 225.483L1105 207.62L1110.83 221.517L1115.83 219.817L1121.67 205.488L1127.5 215.85L1130 215L1133.08 215.225L1140.25 199.303L1147.42 216.275L1153.58 216.725L1160.75 204.718L1167.92 217.775L1171 218L1171 760L19 760z" fill="#bd482d" /><path d="M560 338L600 340L632 344L625 352L600 362L590 356L600 350z" fill="#fde8d2" /><path d="M670 366L700 368L740 372L742 384L700 386L672 378z" fill="#fde8d2" /><path d="M19 292L70 290L72.5 290.5L78.3333 272.832L84.1667 292.833L89.1667 293.833L95 276.293L100.833 296.167L105.833 297.167L111.667 280.68L117.5 299.5L120 300L122.5 300.25L128.333 283.555L134.167 301.417L170 305L172.25 305.562L177.5 287.884L182.75 308.188L187.25 309.312L192.5 297.377L197.75 311.938L202.25 313.062L207.5 291.427L212.75 315.688L230 320L232.25 320.562L237.5 298.871L242.75 323.188L247.25 324.312L252.5 303.901L257.75 326.938L262.25 328.062L267.5 306.74L272.75 330.688L277.25 331.812L282.5 311.262L287.75 334.438L290 335L292.25 335.562L297.5 318.075L302.75 338.188L307.25 339.312L312.5 318.953L317.75 341.938L322.25 343.062L327.5 319.137L332.75 345.688L337.25 346.812L342.5 327.996L347.75 349.438L350 350L352.1 350.45L357 331.842L361.9 352.55L366.1 353.45L371 333.097L375.9 355.55L380.1 356.45L385 334.066L389.9 358.55L394.1 359.45L399 337.333L403.9 361.55L408.1 362.45L413 342.483L417.9 364.55L420 365L422.25 365.262L427.5 342.28L432.75 366.488L437.25 367.012L442.5 343.825L447.75 368.238L467.25 370.512L472.5 345.459L477.75 371.738L480 372L497.25 369.988L502.5 349.964L507.75 368.762L512.25 368.238L517.5 343.912L522.75 367.012L540 365L542.25 365.488L547.5 344.945L552.75 367.762L557.25 368.738L562.5 347.65L567.75 371.012L572.25 371.988L577.5 350.2L582.75 374.262L587.25 375.238L592.5 355.057L597.75 377.512L600 378L602.25 378.375L607.5 358.518L612.75 380.125L617.25 380.875L622.5 360.834L627.75 382.625L632.25 383.375L637.5 371.863L642.75 385.125L647.25 385.875L652.5 368.575L657.75 387.625L660 388L662.25 388.15L667.5 373.433L672.75 388.85L677.25 389.15L682.5 368.668L687.75 389.85L692.25 390.15L697.5 371.898L702.75 390.85L707.25 391.15L712.5 378.742L717.75 391.85L720 392L722.25 391.738L727.5 374.682L732.75 390.512L737.25 389.988L742.5 374.668L747.75 388.762L752.25 388.238L757.5 369.11L762.75 387.012L767.25 386.488L772.5 365.31L777.75 385.262L780 385L782.25 384.512L787.5 368.045L792.75 382.238L812.25 378.012L817.5 359.2L822.75 375.738L827.25 374.762L832.5 355.884L837.75 372.488L840 372L842.5 370L848.333 341.694L854.167 360.667L859.167 356.667L865 339.495L870.833 347.333L875.833 343.333L881.667 325.339L887.5 334L890 332L892.5 331.8L898.333 314.582L904.167 330.867L909.167 330.467L915 304.584L920.833 329.533L940 328L942.625 325.9L948.75 297.618L954.875 316.1L960.125 311.9L966.25 289.828L972.375 302.1L975 300L977.438 299.625L983.125 278.407L988.812 297.875L993.688 297.125L999.375 270.849L1005.06 295.375L1026.19 292.125L1031.88 274.334L1037.56 290.375L1040 290L1057.25 281.375L1062.5 265.239L1067.75 276.125L1072.25 273.875L1077.5 250.638L1082.75 268.625L1087.25 266.375L1092.5 242.938L1097.75 261.125L1100 260L1116.33 257.7L1121.3 238.956L1126.27 256.3L1130.53 255.7L1135.5 238.919L1140.47 254.3L1158.93 251.7L1163.9 225.544L1168.87 250.3L1171 250L1171 760L19 760z" fill="#93332f" /><path d="M19 330L42.575 338.625L49.75 320.573L56.925 343.875L60 345L79.1667 350.75L85 329.021L90.8333 354.25L95.8333 355.75L101.667 323.783L107.5 359.25L110 360L112.5 360.6L118.333 340.845L124.167 363.4L129.167 364.6L135 347.806L140.833 367.4L145.833 368.6L151.667 346.018L157.5 371.4L160 372L162.25 372.863L167.5 344.804L172.75 376.887L192.25 384.363L197.5 360.789L202.75 388.387L207.25 390.113L212.5 359.29L217.75 394.137L220 395L237.25 399.312L242.5 379.807L247.75 401.938L252.25 403.062L257.5 370.576L262.75 405.688L267.25 406.812L272.5 381.18L277.75 409.438L280 410L282.25 410.75L287.5 384.892L292.75 414.25L297.25 415.75L302.5 388.117L307.75 419.25L312.25 420.75L317.5 392.813L322.75 424.25L327.25 425.75L332.5 401.897L337.75 429.25L340 430L342.25 430.375L347.5 409.907L352.75 432.125L357.25 432.875L362.5 409.392L367.75 434.625L372.25 435.375L377.5 406.84L382.75 437.125L387.25 437.875L392.5 422.094L397.75 439.625L400 440L402.25 440.562L407.5 417.674L412.75 443.188L447.25 451.812L452.5 436.863L457.75 454.438L460 455L477.25 459.312L482.5 434.263L487.75 461.938L492.25 463.062L497.5 436.995L502.75 465.688L507.25 466.812L512.5 435.714L517.75 469.438L520 470L522.25 470.375L527.5 448.196L532.75 472.125L552.25 475.375L557.5 454.914L562.75 477.125L580 480L582.25 479.625L587.5 447.697L592.75 477.875L597.25 477.125L602.5 452.459L607.75 475.375L612.25 474.625L617.5 443.697L622.75 472.875L640 470L642.25 469.438L647.5 443.514L652.75 466.812L657.25 465.688L662.5 439.417L667.75 463.062L672.25 461.938L677.5 441.862L682.75 459.312L687.25 458.188L692.5 426.262L697.75 455.562L700 455L702.25 454.438L707.5 432.985L712.75 451.812L747.25 443.188L752.5 425.415L757.75 440.562L760 440L762.25 439.625L767.5 405.134L772.75 437.875L792.25 434.625L797.5 416.87L802.75 432.875L820 430L822.25 428.875L827.5 398.627L832.75 423.625L852.25 413.875L857.5 392.827L862.75 408.625L867.25 406.375L872.5 371.226L877.75 401.125L880 400L883 390.25L890 340.509L897 344.75L900 335L902.25 334.625L907.5 314.849L912.75 332.875L917.25 332.125L922.5 314.466L927.75 330.375L932.25 329.625L937.5 305.924L942.75 327.875L947.25 327.125L952.5 309.214L957.75 325.375L960 325L963 325.375L970 296.888L977 327.125L1000 330L1002.25 329.25L1007.5 303.73L1012.75 325.75L1017.25 324.25L1022.5 295.696L1027.75 320.75L1032.25 319.25L1037.5 284.606L1042.75 315.75L1047.25 314.25L1052.5 295.496L1057.75 310.75L1060 310L1062.25 309.25L1067.5 288.78L1072.75 305.75L1077.25 304.25L1082.5 277.395L1087.75 300.75L1107.25 294.25L1112.5 265.324L1117.75 290.75L1120 290L1122.55 289.25L1128.5 261.57L1134.45 285.75L1139.55 284.25L1145.5 252.99L1151.45 280.75L1156.55 279.25L1162.5 259.092L1168.45 275.75L1171 275L1171 760L19 760z" fill="#702630" /><path d="M308 335L312.458 351.875L310.229 348.5L316.415 368.75L312.208 365.375L321.307 385.625L314.654 382.25L322.21 402.5L315.105 399.125L328.401 419.375L318.201 416L331.41 436.25L319.705 432.875L330.11 453.125L319.055 449.75L338.012 470L281.806 470L298.258 449.75L285.924 453.125L297.353 432.875L282.969 436.25L298.104 416L289.01 419.375L300.546 399.125L295.817 402.5L301.138 382.25L296.51 385.625L304.265 365.375L298.844 368.75L305.726 348.5L303.962 351.875z" fill="#8a3030" /><path d="M500 378L504.277 395.75L502.138 392.2L510.081 413.5L505.041 409.95L513.027 431.25L506.513 427.7L517.412 449L508.706 445.45L516.939 466.75L508.47 463.2L523.197 484.5L511.599 480.95L524.271 502.25L512.136 498.7L526.115 520L475.626 520L487.823 498.7L477.254 502.25L489.023 480.95L479.491 484.5L491.041 463.2L482.858 466.75L490.849 445.45L483.313 449L493.077 427.7L487.242 431.25L494.969 409.95L489.986 413.5L497.787 392.2L495.942 395.75z" fill="#7a2a32" /><path d="M658 378L662.53 395.75L660.265 392.2L665.977 413.5L661.989 409.95L669.966 431.25L663.983 427.7L672.413 449L665.206 445.45L680.894 466.75L669.447 463.2L681.663 484.5L669.831 480.95L687.369 502.25L672.685 498.7L683.604 520L633.227 520L642.252 498.7L628.488 502.25L646.676 480.95L635.133 484.5L647.985 463.2L637.655 466.75L651.588 445.45L644.399 449L652.338 427.7L645.196 431.25L654.458 409.95L650.713 413.5L655.918 392.2L653.966 395.75z" fill="#5e2030" /><path d="M710 365L713.329 379.375L711.664 376.5L715.895 393.75L712.947 390.875L719.028 408.125L714.514 405.25L719.882 422.5L714.941 419.625L725.896 436.875L717.948 434L725.689 451.25L717.845 448.375L731.238 465.625L720.619 462.75L732.139 480L687.453 480L699.722 462.75L686.928 465.625L703.101 448.375L694.042 451.25L702.666 434L693.808 436.875L704.899 419.625L701.197 422.5L705.936 405.25L702.27 408.125L707.325 390.875L704.874 393.75L708.418 376.5L706.36 379.375z" fill="#7d2b32" /><path d="M735 430L738.726 441.25L736.863 439L741.601 452.5L738.3 450.25L744.805 463.75L739.903 461.5L746.783 475L740.891 472.75L751.413 486.25L743.206 484L754.083 497.5L744.541 495.25L753.19 508.75L744.095 506.5L755.932 520L713.69 520L725.131 506.5L716.602 508.75L725.863 495.25L714.126 497.5L728.012 484L720.799 486.25L728.845 472.75L723.776 475L730.778 461.5L725.321 463.75L731.378 450.25L728.533 452.5L733.253 439L731.745 441.25z" fill="#5e2030" /><path d="M165 345L168.647 360.625L166.823 357.5L173.56 376.25L169.28 373.125L175.701 391.875L170.35 388.75L180.589 407.5L172.794 404.375L179.231 423.125L172.115 420L182.775 438.75L173.887 435.625L183.92 454.375L174.46 451.25L188.899 470L144.326 470L156.355 451.25L146.991 454.375L156.766 435.625L149.663 438.75L158.885 420L149.447 423.125L158.025 404.375L149.767 407.5L159.914 388.75L154.483 391.875L161.272 373.125L157.053 376.25L163.401 357.5L161.406 360.625z" fill="#7d2b32" /><path d="M770 362L773.676 375.5L771.838 372.8L776.029 389L773.015 386.3L779.184 402.5L774.592 399.8L779.59 416L774.795 413.3L780.801 429.5L775.4 426.8L785.065 443L777.532 440.3L786.889 456.5L778.445 453.8L789.429 470L751.656 470L761.502 453.8L752.58 456.5L761.878 440.3L756.037 443L764.804 426.8L758.588 429.5L765.656 413.3L761.571 416L765.739 399.8L761.992 402.5L766.855 386.3L763.64 389L768.294 372.8L766.756 375.5z" fill="#7d2b32" /><path d="M380 378L382.253 388.25L381.126 386.2L384.301 398.5L382.151 396.45L385.737 408.75L382.868 406.7L388.243 419L384.121 416.95L390.442 429.25L385.221 427.2L390.946 439.5L385.473 437.45L391.69 449.75L385.845 447.7L396.163 460L366.067 460L374.74 447.7L369.228 449.75L374.837 437.45L370.427 439.5L375.013 427.2L370.305 429.25L375.722 416.95L371.848 419L376.919 406.7L374.186 408.75L377.763 396.45L375.726 398.5L378.918 386.2L377.625 388.25z" fill="#7d2b32" /><path d="M798 410L800.723 421.25L799.361 419L803.35 432.5L800.675 430.25L805.079 443.75L801.539 441.5L806.968 455L802.484 452.75L807.446 466.25L802.723 464L811.076 477.5L804.538 475.25L811.065 488.75L804.533 486.5L811.425 500L786.367 500L792.171 486.5L786.037 488.75L791.338 475.25L785.952 477.5L793.91 464L788.167 466.25L793.564 452.75L790.315 455L794.947 441.5L791.753 443.75L795.487 430.25L792.302 432.5L796.52 419L795.269 421.25z" fill="#5a2030" /><path d="M19 420L21.2875 420.75L26.625 401.638L31.9625 424.25L36.5375 425.75L41.875 408.214L47.2125 429.25L51.7875 430.75L57.125 409.149L62.4625 434.25L80 440L97.25 448.625L102.5 428.765L107.75 453.875L112.25 456.125L117.5 433.399L122.75 461.375L127.25 463.625L132.5 437.233L137.75 468.875L140 470L157.25 475.75L162.5 458.427L167.75 479.25L187.25 485.75L192.5 466.554L197.75 489.25L200 490L202.25 490.375L207.5 464.97L212.75 492.125L260 500L276.1 504.6L281 478.972L285.9 507.4L290.1 508.6L295 495.163L299.9 511.4L318.1 516.6L323 494.768L327.9 519.4L330 520L332.5 521L338.333 495.225L344.167 525.667L349.167 527.667L355 512.55L360.833 532.333L365.833 534.333L371.667 519.448L377.5 539L380 540L397.25 534.25L402.5 506.483L407.75 530.75L412.25 529.25L417.5 507.872L422.75 525.75L427.25 524.25L432.5 492.781L437.75 520.75L440 520L480 545L497.25 549.312L502.5 534.336L507.75 551.938L527.25 556.812L532.5 543.521L537.75 559.438L540 560L542.25 561.125L547.5 548.17L552.75 566.375L587.25 583.625L592.5 559.497L597.75 588.875L600 590L602.25 588.875L607.5 561.324L612.75 583.625L660 560L662.25 558.875L667.5 542.089L672.75 553.625L707.25 536.375L712.5 513.524L717.75 531.125L720 530L722.25 529.25L727.5 513.067L732.75 525.75L737.25 524.25L742.5 502.375L747.75 520.75L752.25 519.25L757.5 492.246L762.75 515.75L767.25 514.25L772.5 482.782L777.75 510.75L780 510L830 500L877.25 476.375L882.5 450.253L887.75 471.125L890 470L920.1 461.4L925 444.756L929.9 458.6L934.1 457.4L939 436.306L943.9 454.6L960 450L994.4 445.7L1000 416.133L1005.6 444.3L1010.4 443.7L1016 417.543L1021.6 442.3L1026.4 441.7L1032 414.946L1037.6 440.3L1040 440L1144.07 432.056L1149.17 409.4L1154.26 431.278L1171 430L1171 760L19 760z" fill="#531d2e" /><path d="M890 332L950 326L1000 332L1010 300L1060 288L1171 270L1171 760L860 760L880 470L905 400z" fill="#4a1a2e" /><path d="M1050 420L1100 395L1150 400L1171 410L1171 760L1000 760L1020 470z" fill="#3a1629" /><path d="M955 275L960 275L962 480L952 480zM1036 185L1041 185L1046 330L1034 330zM770 412L777 412L780 600L768 600z" fill="#4a1a2e"/><path d="M780 425Q870 445 955 438Q1000 436 1050 430" stroke="#4a1a2e" stroke-width="2.5" fill="none"/><path d="M1105 190L1110.12 215.556L1107.56 210.444L1116.56 241.111L1110.78 236L1119.39 266.667L1112.19 261.556L1122.51 292.222L1113.75 287.111L1123.47 317.778L1114.23 312.667L1129.69 343.333L1117.34 338.222L1131.19 368.889L1118.1 363.778L1139.24 394.444L1122.12 389.333L1145.65 420L1061.19 420L1087.82 389.333L1072.59 394.444L1093.51 363.778L1078.23 368.889L1092.8 338.222L1079.6 343.333L1096.29 312.667L1085.21 317.778L1097.09 287.111L1088.78 292.222L1098.4 261.556L1090.53 266.667L1098.79 236L1094.69 241.111L1102.42 210.444L1099.67 215.556z" fill="#5a2030" /><path d="M60 262L63.0919 313.6L61.5459 303.28L65.2609 365.2L62.6305 354.88L68.7948 416.8L64.3974 406.48L72.1496 468.4L66.0748 458.08L74.8901 520L44.6333 520L54.2033 458.08L48.3807 468.4L55.6809 406.48L50.5352 416.8L57.5653 354.88L55.159 365.2L58.452 303.28L56.6248 313.6z" fill="#4a1a2e" /><path d="M210 318L217.256 350.2L213.628 343.76L222.361 382.4L216.18 375.96L227.998 414.6L218.999 408.16L236.676 446.8L223.338 440.36L242.656 479L226.328 472.56L243.238 511.2L226.619 504.76L247.976 543.4L228.988 536.96L258.56 575.6L234.28 569.16L264.526 607.8L237.263 601.36L270.424 640L147.628 640L186.408 601.36L157.046 607.8L184.296 569.16L157.104 575.6L192.349 536.96L169.647 543.4L193.194 504.76L174.048 511.2L195.186 472.56L176.554 479L195.859 440.36L184.146 446.8L202.124 408.16L193.831 414.6L204.505 375.96L199.206 382.4L206.778 343.76L202.715 350.2z" fill="#2f1529" /><path d="M19 500L60 505L100 520L150 540L200 560L260 600L300 630L360 640L400 670L440 640L470 585L500 610L540 640L580 660L620 650L680 620L740 585L800 560L830 510L880 500L940 480L1000 470L1060 460L1171 450L1171 760L19 760z" fill="#2d1428" /><path d="M330 560L360 545L400 530L440 528L450 560L470 590L420 640L360 640L300 600z" fill="#33172b" /><path d="M402 480l10-4l6 8l-2 16l4 22h-5l-4-16l-3 16h-5l2-22z" fill="#33172b"/></g></svg></div><div class="dot"></div><svg class="dl" viewBox="0 0 24 24"><path d="M19 9h-4V3H9v6H5l7 7 7-7zM5 18v2h14v-2H5z"/></svg><svg class="cl" viewBox="0 0 24 24"><path d="M19 6.41L17.59 5 12 10.59 6.41 5 5 6.41 10.59 12 5 17.59 6.41 19 12 13.41 17.59 19 19 17.59 13.41 12z"/></svg><div class="r1"><span class="lab">Quality</span><i class="trk" style="left:57px;width:133px"></i><i class="thm" style="left:153px"></i><span class="val">80%</span></div><div class="r2"><span class="sel">To JPG</span><svg class="arr" style="left:60.5px" viewBox="0 0 8 13"><path d="M4 0L8 5H0zM4 13L0 8H8z"/></svg><span class="sz">154.65KB / 205.97KB (-24.9%)</span></div></div><div class="card" style="left:538px;top:456px"><div class="img" style="top:52px;height:135px;transform:translateY(0.40px)"><svg viewBox="0 0 240 135" height="135" preserveAspectRatio="none"><defs><linearGradient id="i8sky" x1="0" y1="0" x2="0" y2="1"><stop offset="0" stop-color="#0d1f28"/><stop offset=".45" stop-color="#12303a"/><stop offset="1" stop-color="#23535a"/></linearGradient></defs><rect width="240" height="135" fill="url(#i8sky)"/><g transform="scale(0.20194) translate(-19.8,-47)"><g fill="#5a6e74" opacity=".24"><circle cx="185" cy="200" r="90"/><circle cx="300" cy="290" r="70"/><rect x="19" y="240" width="400" height="230" rx="40"/><circle cx="510" cy="400" r="70"/><rect x="330" y="400" width="280" height="120" rx="30"/></g><g fill="#5a6e74" opacity=".22"><circle cx="1090" cy="370" r="55"/><rect x="930" y="370" width="290" height="130" rx="40"/><circle cx="1170" cy="420" r="60"/></g><g fill="#33454b" opacity="0.9"><rect x="405" y="256" width="290" height="30" rx="15"/><circle cx="515.2" cy="254.8" r="25.2"/><circle cx="593.5" cy="260.8" r="19.2"/><circle cx="463" cy="265" r="15"/></g><g fill="#2f4147" opacity="0.9"><rect x="657.5" y="155.2" width="125" height="14" rx="7"/><circle cx="705" cy="154.64" r="11.76"/><circle cx="738.75" cy="157.44" r="8.96"/><circle cx="682.5" cy="159.4" r="7"/></g><g fill="#2f4147" opacity="0.9"><rect x="985" y="255.2" width="130" height="14" rx="7"/><circle cx="1034.4" cy="254.64" r="11.76"/><circle cx="1069.5" cy="257.44" r="8.96"/><circle cx="1011" cy="259.4" r="7"/></g><g fill="#374b51" opacity="0.9"><rect x="45" y="372" width="190" height="30" rx="15"/><circle cx="117.2" cy="370.8" r="25.2"/><circle cx="168.5" cy="376.8" r="19.2"/><circle cx="83" cy="381" r="15"/></g><g fill="#35494f" opacity="0.9"><rect x="777.5" y="375" width="105" height="15" rx="7.5"/><circle cx="817.4" cy="374.4" r="12.6"/><circle cx="845.75" cy="377.4" r="9.6"/><circle cx="798.5" cy="379.5" r="7.5"/></g><g fill="#3f585c" opacity="0.85"><rect x="145" y="473.4" width="240" height="33" rx="16.5"/><circle cx="236.2" cy="472.08" r="27.72"/><circle cx="301" cy="478.68" r="21.12"/><circle cx="193" cy="483.3" r="16.5"/></g><g fill="#4a6064" opacity="0.6"><rect x="1020" y="405" width="200" height="25" rx="12.5"/><circle cx="1096" cy="404" r="21"/><circle cx="1150" cy="409" r="16"/><circle cx="1060" cy="412.5" r="12.5"/></g><g stroke="#5a8090" stroke-width="2" opacity=".34"><path d="M355 463l-49 105"/><path d="M1063 59l-60 128"/><path d="M1499 116l-94 202"/><path d="M699 228l-81 175"/><path d="M304 402l-46 98"/><path d="M366 29l-61 131"/><path d="M623 435l-71 153"/><path d="M187 139l-125 268"/><path d="M112 305l-71 152"/><path d="M998 176l-99 212"/><path d="M756 319l-117 251"/><path d="M880 85l-43 93"/><path d="M1420 245l-55 118"/><path d="M1420 286l-102 219"/><path d="M1324 151l-69 148"/><path d="M1319 82l-105 225"/><path d="M164 337l-100 214"/><path d="M1426 408l-82 176"/><path d="M312 89l-84 181"/><path d="M774 53l-117 252"/><path d="M770 343l-57 123"/><path d="M380 25l-68 146"/><path d="M414 215l-71 152"/><path d="M1255 430l-53 114"/><path d="M606 96l-96 206"/><path d="M1463 113l-105 226"/><path d="M463 26l-105 225"/><path d="M525 98l-76 163"/><path d="M362 209l-77 165"/><path d="M638 291l-63 136"/><path d="M160 59l-47 101"/><path d="M791 186l-109 234"/><path d="M767 346l-124 266"/><path d="M112 28l-50 108"/><path d="M591 284l-103 222"/><path d="M539 464l-38 82"/><path d="M1257 117l-115 246"/><path d="M68 464l-105 225"/><path d="M1486 287l-53 115"/><path d="M1455 223l-45 97"/><path d="M916 249l-80 170"/><path d="M248 76l-89 191"/><path d="M689 78l-77 164"/><path d="M1094 349l-79 170"/><path d="M602 186l-58 124"/><path d="M312 225l-47 101"/><path d="M1093 346l-92 197"/><path d="M52 187l-76 163"/><path d="M157 465l-104 224"/><path d="M763 344l-55 119"/><path d="M359 262l-103 222"/><path d="M978 23l-92 197"/><path d="M1365 362l-120 256"/><path d="M1473 123l-64 137"/><path d="M830 469l-70 151"/><path d="M1413 411l-83 179"/><path d="M945 460l-107 229"/><path d="M457 409l-55 118"/><path d="M567 461l-113 241"/><path d="M481 154l-92 197"/><path d="M1267 335l-120 258"/><path d="M1097 398l-91 195"/><path d="M555 217l-81 174"/><path d="M802 406l-62 132"/><path d="M121 357l-62 132"/><path d="M641 74l-111 238"/><path d="M425 154l-109 233"/><path d="M766 148l-116 249"/><path d="M629 186l-123 263"/><path d="M1189 364l-60 128"/><path d="M1223 294l-111 238"/><path d="M564 379l-108 231"/><path d="M594 321l-107 228"/><path d="M1490 443l-107 230"/><path d="M222 301l-98 210"/><path d="M148 233l-114 245"/><path d="M1360 446l-46 99"/><path d="M918 418l-95 204"/><path d="M493 38l-119 255"/><path d="M1291 321l-70 150"/><path d="M1246 395l-102 218"/><path d="M907 167l-64 137"/><path d="M548 170l-84 179"/><path d="M188 352l-68 147"/><path d="M256 137l-72 155"/><path d="M658 380l-47 100"/><path d="M349 155l-53 114"/><path d="M1129 70l-42 91"/><path d="M842 359l-111 237"/><path d="M848 170l-116 248"/><path d="M1109 240l-87 187"/><path d="M1405 479l-120 257"/><path d="M215 170l-74 158"/><path d="M269 371l-43 93"/><path d="M1333 289l-92 197"/><path d="M633 451l-89 190"/><path d="M1347 444l-99 212"/><path d="M1475 245l-70 150"/><path d="M1269 263l-65 139"/><path d="M1026 239l-49 105"/><path d="M1260 250l-123 265"/><path d="M809 451l-63 136"/><path d="M341 262l-105 226"/><path d="M1241 318l-49 104"/><path d="M603 36l-71 151"/><path d="M1418 180l-99 213"/><path d="M939 86l-99 211"/><path d="M137 105l-89 191"/><path d="M208 464l-75 161"/><path d="M952 464l-47 101"/><path d="M1499 38l-91 195"/><path d="M990 473l-69 149"/><path d="M1421 319l-80 171"/><path d="M270 128l-70 150"/><path d="M532 191l-109 234"/><path d="M574 309l-41 88"/><path d="M227 347l-116 249"/><path d="M483 35l-58 125"/><path d="M553 189l-87 187"/><path d="M466 318l-107 230"/><path d="M1179 361l-89 191"/><path d="M405 407l-63 136"/><path d="M1293 226l-93 200"/><path d="M758 321l-68 145"/><path d="M876 359l-70 149"/><path d="M908 230l-79 170"/><path d="M587 271l-100 215"/><path d="M276 87l-110 237"/><path d="M150 385l-105 224"/><path d="M341 313l-60 129"/><path d="M1325 111l-48 103"/><path d="M73 351l-56 121"/><path d="M484 469l-103 220"/><path d="M1111 285l-94 202"/><path d="M35 394l-67 143"/><path d="M1285 211l-118 253"/><path d="M20 471l-46 99"/><path d="M776 242l-125 267"/><path d="M1081 472l-118 252"/><path d="M649 88l-51 109"/><path d="M1070 458l-96 207"/><path d="M532 295l-96 205"/><path d="M394 339l-55 119"/><path d="M60 50l-81 173"/><path d="M1050 124l-73 156"/><path d="M1045 141l-84 180"/><path d="M912 207l-56 120"/><path d="M1045 342l-54 117"/><path d="M1215 321l-114 245"/><path d="M1174 247l-101 216"/><path d="M485 321l-45 97"/><path d="M531 253l-116 248"/><path d="M1032 438l-114 245"/><path d="M1457 304l-92 198"/><path d="M713 122l-108 232"/><path d="M923 94l-59 126"/><path d="M346 352l-90 194"/><path d="M317 336l-87 187"/><path d="M414 224l-125 269"/><path d="M228 129l-90 193"/><path d="M1263 444l-73 156"/><path d="M1158 75l-72 154"/><path d="M1288 326l-77 165"/><path d="M905 244l-86 185"/><path d="M1328 469l-55 119"/><path d="M1137 455l-91 196"/><path d="M760 191l-80 172"/><path d="M879 301l-48 103"/><path d="M1498 147l-86 184"/><path d="M313 310l-44 95"/><path d="M516 197l-65 140"/><path d="M741 93l-81 174"/><path d="M1197 309l-123 264"/><path d="M1426 240l-79 169"/><path d="M1148 425l-86 183"/><path d="M1007 338l-83 178"/><path d="M772 204l-77 166"/><path d="M721 389l-52 111"/><path d="M193 445l-83 177"/><path d="M1051 441l-103 220"/><path d="M858 458l-93 199"/><path d="M680 104l-52 111"/><path d="M1192 432l-69 148"/><path d="M802 332l-91 196"/><path d="M427 439l-86 185"/><path d="M1077 337l-76 164"/><path d="M1058 107l-86 185"/><path d="M984 309l-64 136"/><path d="M288 67l-49 104"/><path d="M292 243l-88 188"/><path d="M1065 221l-106 226"/><path d="M63 180l-48 104"/><path d="M784 283l-89 191"/><path d="M676 189l-67 143"/><path d="M176 109l-81 173"/><path d="M860 66l-112 241"/><path d="M60 78l-77 166"/><path d="M512 259l-99 211"/><path d="M900 381l-79 170"/><path d="M1021 212l-49 105"/><path d="M129 104l-77 165"/><path d="M428 278l-97 207"/><path d="M1380 89l-122 262"/><path d="M21 429l-125 267"/><path d="M560 387l-82 176"/><path d="M851 414l-121 259"/><path d="M464 121l-119 254"/><path d="M896 435l-57 123"/><path d="M1277 93l-51 109"/><path d="M446 447l-72 154"/></g><g stroke="#081820" stroke-width="3" opacity=".3"><path d="M671 136l-57 121"/><path d="M673 219l-79 168"/><path d="M1101 144l-133 284"/><path d="M1366 252l-59 126"/><path d="M848 268l-105 225"/><path d="M649 310l-134 287"/><path d="M1059 36l-103 221"/><path d="M942 238l-129 277"/><path d="M97 27l-111 238"/><path d="M168 75l-119 255"/><path d="M554 373l-118 252"/><path d="M1000 164l-57 123"/><path d="M1465 368l-127 273"/><path d="M773 132l-103 221"/><path d="M640 97l-60 128"/><path d="M623 79l-73 156"/><path d="M1466 393l-125 267"/><path d="M778 325l-64 137"/><path d="M938 410l-117 250"/><path d="M1480 271l-76 163"/><path d="M50 128l-120 257"/><path d="M801 269l-118 252"/><path d="M456 76l-125 268"/><path d="M909 31l-109 233"/><path d="M1087 325l-61 132"/><path d="M424 309l-107 228"/><path d="M532 408l-76 162"/><path d="M1339 74l-89 190"/><path d="M1489 298l-114 244"/><path d="M1328 271l-96 206"/><path d="M1241 233l-131 280"/><path d="M1146 20l-75 160"/><path d="M1330 67l-52 111"/><path d="M880 298l-133 285"/><path d="M1445 271l-109 234"/><path d="M805 360l-109 233"/><path d="M210 270l-55 117"/><path d="M515 153l-128 274"/><path d="M346 171l-98 210"/><path d="M323 201l-75 161"/><path d="M1088 337l-99 213"/><path d="M1304 216l-113 242"/><path d="M159 175l-78 166"/><path d="M1332 219l-82 176"/><path d="M1007 402l-120 257"/><path d="M1209 286l-118 253"/><path d="M851 175l-77 165"/><path d="M408 155l-92 198"/><path d="M1295 115l-83 178"/><path d="M406 213l-56 119"/><path d="M941 363l-127 272"/><path d="M550 88l-112 240"/><path d="M1138 96l-56 119"/><path d="M1011 172l-94 202"/><path d="M855 374l-61 131"/><path d="M403 34l-108 232"/><path d="M136 361l-102 218"/><path d="M778 127l-123 264"/><path d="M188 252l-120 257"/><path d="M993 40l-60 128"/><path d="M442 312l-62 133"/><path d="M1435 374l-98 211"/><path d="M1318 274l-64 137"/><path d="M618 30l-87 187"/><path d="M1484 182l-106 228"/><path d="M552 290l-79 168"/><path d="M1372 184l-73 156"/><path d="M655 50l-78 167"/><path d="M1113 182l-88 188"/><path d="M367 350l-125 267"/><path d="M625 21l-86 185"/><path d="M1314 281l-70 149"/><path d="M175 375l-57 122"/><path d="M931 258l-66 141"/><path d="M673 365l-134 288"/><path d="M130 32l-72 155"/><path d="M93 391l-57 122"/><path d="M563 363l-89 192"/><path d="M365 45l-69 149"/><path d="M478 359l-87 186"/><path d="M837 125l-85 181"/><path d="M1393 66l-109 234"/><path d="M483 187l-111 238"/><path d="M536 216l-91 196"/><path d="M737 50l-83 179"/><path d="M582 188l-74 160"/><path d="M683 316l-57 121"/><path d="M130 234l-99 212"/><path d="M1203 33l-51 110"/><path d="M919 106l-92 197"/></g><path d="M19 470L100 430L200 520L19 560z" fill="#2a4a50" opacity=".6"/><path d="M380 560L500 435L600 560z" fill="#2a4a50" opacity=".6"/><path d="M75 520L200 640L-30 640z" fill="#6f2f3e" /><path d="M75 520L200 640L86.5 640L64.5 586L81.25 556z" fill="#5b2534" /><path d="M940 475L1040 640L850 640z" fill="#6f2f3e" /><path d="M940 475L1040 640L949.5 640L931 565.75L945 524.5z" fill="#5b2534" /><path d="M1230 400L1340 640L1120 640z" fill="#6f2f3e" /><path d="M1230 400L1340 640L1241 640L1219 532L1235.5 472z" fill="#5b2534" /><path d="M745 332L915 625L590 625z" fill="#6f2f3e" /><path d="M745 332L915 625L761.25 625L729.5 493.15L753.5 419.9z" fill="#5b2534" /><path d="M745 332L769.369 374L757.184 365.6L749.874 378.2L738.334 367.7L731.669 378.2L722.782 374z" fill="#f4fbfc" /><path d="M745 332L769.369 374L757.184 365.6L749.874 378.2L748.4 348.8z" fill="#a8e0e8" /><path d="M410 520L500 640L340 640z" fill="#6f2f3e" /><path d="M410 520L500 640L418 640L403 586L414.5 556z" fill="#5b2534" /><path d="M410 520L419 532L414.5 529.6L411.8 533.2L407.9 530.2L405.8 533.2L403 532z" fill="#f4fbfc" /><path d="M410 520L419 532L414.5 529.6L411.8 533.2L411.8 524.8z" fill="#a8e0e8" /><path d="M237 440L450 650L30 650z" fill="#6f2f3e" /><path d="M237 440L450 650L258 650L216.3 555.5L247.65 503z" fill="#5b2534" /><path d="M237 440L273.514 476L255.257 468.8L244.303 479.6L226.354 470.6L215.709 479.6L201.514 476z" fill="#f4fbfc" /><path d="M237 440L273.514 476L255.257 468.8L244.303 479.6L241.26 454.4z" fill="#a8e0e8" /><path d="M565 462L700 650L430 650z" fill="#6f2f3e" /><path d="M565 462L700 650L578.5 650L551.5 565.4L571.75 518.4z" fill="#5b2534" /><path d="M565 462L592.287 500L578.644 492.4L570.457 503.8L556.814 494.3L548.628 503.8L537.713 500z" fill="#f4fbfc" /><path d="M565 462L592.287 500L578.644 492.4L570.457 503.8L567.7 477.2z" fill="#a8e0e8" /><path d="M1050 490L1300 720L930 720z" fill="#6f2f3e" /><path d="M1050 490L1300 720L1068.5 720L1038 616.5L1062.5 559z" fill="#5b2534" /><path d="M1050 490L1098.91 535L1074.46 526L1059.78 539.5L1042.96 528.25L1035.91 539.5L1026.52 535z" fill="#f4fbfc" /><path d="M1050 490L1098.91 535L1074.46 526L1059.78 539.5L1055 508z" fill="#a8e0e8" /><g fill="#e8c48a"><circle cx="162" cy="526" r="2.6"/><circle cx="182" cy="542" r="2.6"/><circle cx="177" cy="581" r="2.6"/><circle cx="174" cy="579" r="2.6"/><circle cx="162" cy="533" r="2.6"/><circle cx="170" cy="541" r="2.6"/><circle cx="195" cy="528" r="2.6"/><circle cx="194" cy="535" r="2.6"/><circle cx="171" cy="535" r="2.6"/><circle cx="151" cy="530" r="2.6"/><circle cx="214" cy="527" r="2.6"/><circle cx="209" cy="552" r="2.6"/><circle cx="206" cy="533" r="2.6"/><circle cx="184" cy="568" r="2.6"/><circle cx="163" cy="563" r="2.6"/><circle cx="208" cy="549" r="2.6"/><circle cx="142" cy="563" r="2.6"/><circle cx="199" cy="552" r="2.6"/><circle cx="203" cy="545" r="2.6"/><circle cx="174" cy="550" r="2.6"/><circle cx="147" cy="525" r="2.6"/><circle cx="188" cy="582" r="2.6"/><circle cx="46" cy="599" r="2.6"/><circle cx="50" cy="591" r="2.6"/><circle cx="41" cy="585" r="2.6"/><circle cx="57" cy="598" r="2.6"/><circle cx="59" cy="587" r="2.6"/><circle cx="511" cy="562" r="2.6"/><circle cx="501" cy="596" r="2.6"/><circle cx="496" cy="572" r="2.6"/><circle cx="493" cy="571" r="2.6"/><circle cx="476" cy="595" r="2.6"/><circle cx="497" cy="565" r="2.6"/><circle cx="492" cy="557" r="2.6"/><circle cx="501" cy="587" r="2.6"/><circle cx="509" cy="579" r="2.6"/><circle cx="529" cy="563" r="2.6"/><circle cx="486" cy="586" r="2.6"/><circle cx="498" cy="572" r="2.6"/><circle cx="515" cy="583" r="2.6"/><circle cx="506" cy="593" r="2.6"/><circle cx="498" cy="583" r="2.6"/><circle cx="529" cy="564" r="2.6"/><circle cx="686" cy="471" r="2.6"/><circle cx="697" cy="444" r="2.6"/><circle cx="674" cy="453" r="2.6"/><circle cx="693" cy="450" r="2.6"/><circle cx="671" cy="461" r="2.6"/><circle cx="675" cy="474" r="2.6"/><circle cx="703" cy="478" r="2.6"/><circle cx="690" cy="460" r="2.6"/><circle cx="671" cy="462" r="2.6"/><circle cx="688" cy="455" r="2.6"/><circle cx="684" cy="487" r="2.6"/><circle cx="683" cy="453" r="2.6"/><circle cx="930" cy="597" r="2.6"/><circle cx="916" cy="579" r="2.6"/><circle cx="950" cy="581" r="2.6"/><circle cx="926" cy="573" r="2.6"/><circle cx="939" cy="565" r="2.6"/><circle cx="948" cy="588" r="2.6"/><circle cx="947" cy="566" r="2.6"/><circle cx="916" cy="573" r="2.6"/><circle cx="931" cy="581" r="2.6"/><circle cx="937" cy="561" r="2.6"/><circle cx="1017" cy="601" r="2.6"/><circle cx="975" cy="599" r="2.6"/><circle cx="986" cy="601" r="2.6"/><circle cx="1004" cy="615" r="2.6"/><circle cx="972" cy="616" r="2.6"/><circle cx="1010" cy="628" r="2.6"/><circle cx="969" cy="631" r="2.6"/><circle cx="992" cy="626" r="2.6"/><circle cx="1006" cy="600" r="2.6"/><circle cx="1003" cy="644" r="2.6"/><circle cx="1015" cy="617" r="2.6"/><circle cx="977" cy="640" r="2.6"/><circle cx="1020" cy="658" r="2.6"/><circle cx="998" cy="612" r="2.6"/><circle cx="1016" cy="601" r="2.6"/><circle cx="1000" cy="650" r="2.6"/><circle cx="996" cy="642" r="2.6"/><circle cx="989" cy="639" r="2.6"/><circle cx="1182" cy="494" r="2.6"/><circle cx="1179" cy="469" r="2.6"/><circle cx="1179" cy="476" r="2.6"/><circle cx="1175" cy="495" r="2.6"/><circle cx="1204" cy="502" r="2.6"/><circle cx="1176" cy="485" r="2.6"/><circle cx="1179" cy="489" r="2.6"/><circle cx="1175" cy="508" r="2.6"/></g><path d="M19 625L80 605L160 598L230 600L300 625L380 640L480 640L560 625L640 618L720 622L720 680L19 680z" fill="#357d66" /><path d="M480 700L560 660L640 630L720 615L800 610L900 612L970 625L940 700z" fill="#3d9677" /><g fill="#5ac8a0" opacity=".8"><circle cx="191" cy="626" r="2"/><circle cx="183" cy="631" r="2"/><circle cx="197" cy="634" r="2"/><circle cx="294" cy="631" r="2"/><circle cx="113" cy="639" r="2"/><circle cx="195" cy="632" r="2"/><circle cx="293" cy="650" r="2"/><circle cx="182" cy="625" r="2"/><circle cx="276" cy="648" r="2"/><circle cx="285" cy="634" r="2"/><circle cx="147" cy="638" r="2"/><circle cx="205" cy="646" r="2"/><circle cx="128" cy="654" r="2"/><circle cx="208" cy="630" r="2"/><circle cx="220" cy="622" r="2"/><circle cx="266" cy="639" r="2"/><circle cx="141" cy="622" r="2"/><circle cx="207" cy="648" r="2"/><circle cx="148" cy="653" r="2"/><circle cx="222" cy="638" r="2"/><circle cx="294" cy="632" r="2"/><circle cx="240" cy="633" r="2"/><circle cx="170" cy="638" r="2"/><circle cx="290" cy="623" r="2"/><circle cx="180" cy="622" r="2"/><circle cx="183" cy="622" r="2"/><circle cx="261" cy="644" r="2"/><circle cx="292" cy="646" r="2"/><circle cx="169" cy="642" r="2"/><circle cx="132" cy="635" r="2"/><circle cx="121" cy="654" r="2"/><circle cx="233" cy="629" r="2"/><circle cx="208" cy="634" r="2"/><circle cx="278" cy="644" r="2"/><circle cx="241" cy="642" r="2"/><circle cx="130" cy="640" r="2"/><circle cx="270" cy="633" r="2"/><circle cx="101" cy="631" r="2"/><circle cx="104" cy="640" r="2"/><circle cx="195" cy="624" r="2"/></g><path d="M19 668L300 670L560 668L700 690L700 716L19 716z" fill="#1f4159" /><path d="M480 690L560 665L700 650L800 660L700 705L560 708z" fill="#3d9677" /><g fill="#e8c080"><circle cx="629" cy="678" r="2.4"/><circle cx="595" cy="676" r="2.4"/><circle cx="602" cy="686" r="2.4"/><circle cx="617" cy="672" r="2.4"/><circle cx="572" cy="676" r="2.4"/><circle cx="585" cy="691" r="2.4"/><circle cx="628" cy="690" r="2.4"/><circle cx="605" cy="673" r="2.4"/><circle cx="583" cy="684" r="2.4"/><circle cx="619" cy="681" r="2.4"/><circle cx="596" cy="680" r="2.4"/><circle cx="602" cy="682" r="2.4"/><circle cx="589" cy="694" r="2.4"/><circle cx="609" cy="688" r="2.4"/></g><path d="M190 700h60M310 686h40" stroke="#5a7a90" stroke-width="3"/><path d="M680 716L760 672L800 680L850 650L900 672L940 716z" fill="#7a3040" /><g fill="#26a070"><path d="M719 716L728 694L737 716z"/><path d="M751 716L760 702L769 716z"/><path d="M831 716L840 686L849 716z"/><path d="M861 716L870 676L879 716z"/><path d="M901 716L910 686L919 716z"/><path d="M946 716L955 698L964 716z"/><path d="M981 716L990 690L999 716z"/><path d="M1026 716L1035 656L1044 716z"/><path d="M1066 716L1075 680L1084 716z"/><path d="M1096 716L1105 636L1114 716z"/><path d="M1131 716L1140 680L1149 716z"/><path d="M1169 716L1178 660L1187 716z"/></g></g></svg></div><div class="dot"></div><svg class="dl" viewBox="0 0 24 24"><path d="M19 9h-4V3H9v6H5l7 7 7-7zM5 18v2h14v-2H5z"/></svg><svg class="cl" viewBox="0 0 24 24"><path d="M19 6.41L17.59 5 12 10.59 6.41 5 5 6.41 10.59 12 5 17.59 6.41 19 12 13.41 17.59 19 19 17.59 13.41 12z"/></svg><div class="r1"><span class="lab">Quality</span><i class="trk" style="left:57px;width:133px"></i><i class="thm" style="left:153px"></i><span class="val">80%</span></div><div class="r2"><span class="sel">To JPG</span><svg class="arr" style="left:60.5px" viewBox="0 0 8 13"><path d="M4 0L8 5H0zM4 13L0 8H8z"/></svg><span class="sz">105.08KB / 219.82KB (-52.2%)</span></div></div><div class="card" style="left:798px;top:456px"><div class="img" style="top:52px;height:135px;transform:translateY(0.40px)"><svg viewBox="0 0 240 135" height="135" preserveAspectRatio="none"><defs><filter id="i9b" x="-20%" y="-20%" width="140%" height="140%"><feGaussianBlur stdDeviation="28"/></filter></defs><rect width="240" height="135" fill="#ff6327"/><g transform="scale(0.20194) translate(-19.8,-47)"><g filter="url(#i9b)"><ellipse cx="570" cy="190" rx="77" ry="57" fill="#ff7230" opacity=".7"/><ellipse cx="422" cy="225" rx="90" ry="67" fill="#ff7a34" opacity=".7"/><ellipse cx="853" cy="326" rx="123" ry="48" fill="#ff7230" opacity=".7"/><ellipse cx="883" cy="107" rx="65" ry="35" fill="#ff7230" opacity=".7"/><ellipse cx="1057" cy="427" rx="130" ry="45" fill="#ff7a34" opacity=".7"/><ellipse cx="908" cy="86" rx="78" ry="39" fill="#f85a22" opacity=".7"/><ellipse cx="963" cy="388" rx="142" ry="46" fill="#f85a22" opacity=".7"/><ellipse cx="426" cy="64" rx="139" ry="32" fill="#ff7a34" opacity=".7"/><ellipse cx="470" cy="235" rx="81" ry="59" fill="#ff7a34" opacity=".7"/><ellipse cx="1032" cy="416" rx="71" ry="53" fill="#ff7a34" opacity=".7"/><ellipse cx="1085" cy="125" rx="140" ry="35" fill="#ff7a34" opacity=".7"/><ellipse cx="1112" cy="239" rx="108" ry="38" fill="#ff6e2e" opacity=".7"/><ellipse cx="101" cy="121" rx="123" ry="36" fill="#ff7a34" opacity=".7"/><ellipse cx="1138" cy="323" rx="65" ry="52" fill="#ff7a34" opacity=".7"/><ellipse cx="741" cy="104" rx="126" ry="53" fill="#f85a22" opacity=".7"/><ellipse cx="60" cy="380" rx="146" ry="39" fill="#ff6e2e" opacity=".7"/><ellipse cx="747" cy="63" rx="136" ry="51" fill="#f85a22" opacity=".7"/><ellipse cx="692" cy="310" rx="70" ry="65" fill="#f85a22" opacity=".7"/><ellipse cx="454" cy="127" rx="149" ry="53" fill="#ff7230" opacity=".7"/><ellipse cx="41" cy="353" rx="60" ry="34" fill="#f85a22" opacity=".7"/><ellipse cx="283" cy="150" rx="88" ry="41" fill="#ff7a34" opacity=".7"/><ellipse cx="635" cy="68" rx="130" ry="62" fill="#ff6e2e" opacity=".7"/><ellipse cx="611" cy="319" rx="111" ry="33" fill="#ff7230" opacity=".7"/><ellipse cx="791" cy="84" rx="106" ry="68" fill="#ff6e2e" opacity=".7"/><ellipse cx="687" cy="100" rx="75" ry="64" fill="#f85a22" opacity=".7"/><ellipse cx="327" cy="66" rx="84" ry="37" fill="#ff7230" opacity=".7"/></g><ellipse cx="700" cy="425" rx="300" ry="26" fill="#ff7a38" opacity=".45" filter="url(#i9b)"/><g fill="#ffc0a0"><rect x="792" y="366" width="7" height="2.5"/><rect x="779" y="381" width="7" height="2.5"/><rect x="912" y="373" width="7" height="2.5"/><rect x="773" y="400" width="7" height="2.5"/><rect x="821" y="383" width="7" height="2.5"/><rect x="820" y="408" width="7" height="2.5"/><rect x="905" y="373" width="7" height="2.5"/><rect x="791" y="380" width="7" height="2.5"/><rect x="796" y="387" width="7" height="2.5"/><rect x="913" y="389" width="7" height="2.5"/><rect x="914" y="392" width="7" height="2.5"/><rect x="819" y="389" width="7" height="2.5"/><rect x="880" y="376" width="7" height="2.5"/><rect x="936" y="372" width="7" height="2.5"/><rect x="793" y="400" width="7" height="2.5"/><rect x="918" y="366" width="7" height="2.5"/><rect x="912" y="403" width="7" height="2.5"/><rect x="807" y="383" width="7" height="2.5"/><rect x="876" y="386" width="7" height="2.5"/><rect x="785" y="387" width="7" height="2.5"/><rect x="877" y="372" width="7" height="2.5"/><rect x="782" y="392" width="7" height="2.5"/></g><path d="M19 330L60 375L100 395L150 420L180 415L230 430L290 390L345 352L400 420L470 470L520 440L565 420L620 465L680 470L720 440L760 455L830 445L880 432L950 405L1010 395L1050 402L1090 372L1130 392L1170 388L1207 395L1207 560L19 560z" fill="#f3102a" /><path d="M345 352L362 356L410 400L470 470L430 452L370 420L350 395z" fill="#ff8a66" /><path d="M565 420L585 428L620 465L590 455z" fill="#ff8a66" /><path d="M730 438L745 446L750 456z" fill="#ff8a66" /><path d="M985 398L1010 392L1040 400L1010 404z" fill="#ff5a50" /><path d="M19 335L60 380L100 400L150 440L200 470L300 485L400 470L500 490L600 480L700 492L800 470L880 440L950 410L1010 420L1090 375L1130 395L1160 410L1207 412L1207 600L19 600z" fill="#d40923" /><path d="M19 462L60 480L120 500L200 530L300 540L420 540L520 550L620 552L720 545L830 530L920 520L1010 500L1100 490L1207 478L1207 640L19 640z" fill="#5f0a10" /><path d="M30 410L32.1971 422L31.2084 420.2L33.8294 434L32.1062 432.2L35.098 446L32.8039 444.2L36.2048 458L33.4127 456.2L37.854 470L22.146 470L26.5873 456.2L23.7952 458L27.1961 444.2L24.902 446L27.8938 432.2L26.1706 434L28.7916 420.2L27.8029 422z" fill="#5f0a10" /><path d="M66 445L68.2305 454L67.2268 452.65L70.032 463L68.2176 461.65L71.685 472L69.1268 470.65L72.6484 481L69.6566 479.65L74.7109 490L57.2891 490L62.3434 479.65L59.3516 481L62.8732 470.65L60.315 472L63.7824 461.65L61.968 463L64.7732 452.65L63.7695 454z" fill="#5f0a10" /><path d="M160 472L162.39 481.6L161.314 480.16L164.353 491.2L162.394 489.76L165.877 500.8L163.232 499.36L167.319 510.4L164.025 508.96L169.729 520L150.271 520L155.975 508.96L152.681 510.4L156.768 499.36L154.123 500.8L157.606 489.76L155.647 491.2L158.686 480.16L157.61 481.6z" fill="#5f0a10" /><path d="M210 480L212.387 491L211.313 489.35L215.151 502L212.833 500.35L216.857 513L213.771 511.35L218.53 524L214.691 522.35L218.573 535L201.427 535L205.309 522.35L201.47 524L206.229 511.35L203.143 513L207.167 500.35L204.849 502L208.687 489.35L207.613 491z" fill="#5f0a10" /><path d="M258 455L265.541 478L262.147 474.55L271.904 501L265.647 497.55L276.796 524L268.338 520.55L285.37 547L273.053 543.55L287.799 570L228.201 570L242.947 543.55L230.63 547L247.662 520.55L239.204 524L250.353 497.55L244.096 501L253.853 474.55L250.459 478z" fill="#5f0a10" /><path d="M345 522L346.613 526.6L345.887 525.91L347.625 531.2L346.444 530.51L349.01 535.8L347.205 535.11L349.372 540.4L347.405 539.71L350.17 545L339.83 545L342.595 539.71L340.628 540.4L342.795 535.11L340.99 535.8L343.556 530.51L342.375 531.2L344.113 525.91L343.387 526.6z" fill="#5f0a10" /><path d="M445 528L446.577 531.4L445.867 530.89L447.874 534.8L446.581 534.29L448.47 538.2L446.908 537.69L449.309 541.6L447.37 541.09L451.229 545L438.771 545L442.63 541.09L440.691 541.6L443.092 537.69L441.53 538.2L443.419 534.29L442.126 534.8L444.133 530.89L443.423 531.4z" fill="#5f0a10" /><path d="M505 492L507.644 503.6L506.454 501.86L509.532 515.2L507.492 513.46L512.355 526.8L509.045 525.06L514.08 538.4L509.994 536.66L515.655 550L494.345 550L500.006 536.66L495.92 538.4L500.955 525.06L497.645 526.8L502.508 513.46L500.468 515.2L503.546 501.86L502.356 503.6z" fill="#5f0a10" /><path d="M555 540L559.529 550L557.491 548.5L561.679 560L558.673 558.5L564.263 570L560.094 568.5L567.452 580L561.849 578.5L570.455 590L539.545 590L548.151 578.5L542.548 580L549.906 568.5L545.737 570L551.327 558.5L548.321 560L552.509 548.5L550.471 550z" fill="#5f0a10" /><path d="M622 505L624.39 515L623.314 513.5L625.836 525L624.11 523.5L627.661 535L625.114 533.5L629.299 545L626.015 543.5L629.96 555L614.04 555L617.985 543.5L614.701 545L618.886 533.5L616.339 535L619.89 523.5L618.164 525L620.686 513.5L619.61 515z" fill="#5f0a10" /><path d="M672 540L673.777 543L672.977 542.55L674.934 546L673.614 545.55L675.839 549L674.112 548.55L676.429 552L674.436 551.55L678.553 555L665.447 555L669.564 551.55L667.571 552L669.888 548.55L668.161 549L670.386 545.55L669.066 546L671.023 542.55L670.223 543z" fill="#5f0a10" /><path d="M718 485L720.663 497.6L719.464 495.71L722.562 510.2L720.509 508.31L724.35 522.8L721.492 520.91L727.306 535.4L723.118 533.51L727.577 548L708.423 548L712.882 533.51L708.694 535.4L714.508 520.91L711.65 522.8L715.491 508.31L713.438 510.2L716.536 495.71L715.337 497.6z" fill="#5f0a10" /><path d="M770 490L772.659 500L771.462 498.5L774.523 510L772.488 508.5L777.358 520L774.047 518.5L778.283 530L774.556 528.5L781.754 540L758.246 540L765.444 528.5L761.717 530L765.953 518.5L762.642 520L767.512 508.5L765.477 510L768.538 498.5L767.341 500z" fill="#5f0a10" /><path d="M835 522L836.441 524.6L835.792 524.21L837.454 527.2L836.35 526.81L839.15 529.8L837.283 529.41L840.123 532.4L837.818 532.01L840.123 535L829.877 535L832.182 532.01L829.877 532.4L832.717 529.41L830.85 529.8L833.65 526.81L832.546 527.2L834.208 524.21L833.559 524.6z" fill="#5f0a10" /><path d="M875 472L877.772 483.6L876.525 481.86L880.299 495.2L877.915 493.46L882.969 506.8L879.383 505.06L884.016 518.4L879.959 516.66L885.497 530L864.503 530L870.041 516.66L865.984 518.4L870.617 505.06L867.031 506.8L872.085 493.46L869.701 495.2L873.475 481.86L872.228 483.6z" fill="#5f0a10" /><path d="M912 485L914.669 493L913.468 491.8L916.19 501L914.304 499.8L917.555 509L915.055 507.8L920.046 517L916.425 515.8L921.088 525L902.912 525L907.575 515.8L903.954 517L908.945 507.8L906.445 509L909.696 499.8L907.81 501L910.532 491.8L909.331 493z" fill="#5f0a10" /><path d="M975 500L976.689 503L975.929 502.55L977.546 506L976.4 505.55L978.428 509L976.885 508.55L979.5 512L977.475 511.55L980.63 515L969.37 515L972.525 511.55L970.5 512L973.115 508.55L971.572 509L973.6 505.55L972.454 506L974.071 502.55L973.311 503z" fill="#5f0a10" /><path d="M1030 455L1037.25 476L1033.99 472.85L1040.96 497L1036.03 493.85L1043.59 518L1037.47 514.85L1051.97 539L1042.08 535.85L1052.22 560L1007.78 560L1017.92 535.85L1008.03 539L1022.53 514.85L1016.41 518L1023.97 493.85L1019.04 497L1026.01 472.85L1022.75 476z" fill="#5f0a10" /><path d="M1068 455L1070.64 464L1069.45 462.65L1071.71 473L1070.04 471.65L1073.74 482L1071.16 480.65L1075.18 491L1071.95 489.65L1076.37 500L1059.63 500L1064.05 489.65L1060.82 491L1064.84 480.65L1062.26 482L1065.96 471.65L1064.29 473L1066.55 462.65L1065.36 464z" fill="#5f0a10" /><path d="M1105 465L1107.19 471L1106.2 470.1L1109.11 477L1107.26 476.1L1110.71 483L1108.14 482.1L1111.41 489L1108.52 488.1L1111.96 495L1098.04 495L1101.48 488.1L1098.59 489L1101.86 482.1L1099.29 483L1102.74 476.1L1100.89 477L1103.8 470.1L1102.81 471z" fill="#5f0a10" /><path d="M1158 460L1159.79 465L1158.98 464.25L1161.25 470L1159.79 469.25L1163.03 475L1160.77 474.25L1163.64 480L1161.1 479.25L1164.62 485L1151.38 485L1154.9 479.25L1152.36 480L1155.23 474.25L1152.97 475L1156.21 469.25L1154.75 470L1157.02 464.25L1156.21 465z" fill="#5f0a10" /><path d="M19 520L80 540L140 560L220 575L320 580L440 585L520 590L600 588L720 590L850 582L960 575L1060 555L1140 540L1207 525L1207 716L19 716z" fill="#47000c" /></g></svg></div><div class="dot"></div><svg class="dl" viewBox="0 0 24 24"><path d="M19 9h-4V3H9v6H5l7 7 7-7zM5 18v2h14v-2H5z"/></svg><svg class="cl" viewBox="0 0 24 24"><path d="M19 6.41L17.59 5 12 10.59 6.41 5 5 6.41 10.59 12 5 17.59 6.41 19 12 13.41 17.59 19 19 17.59 13.41 12z"/></svg><div class="r1"><span class="lab">Quality</span><i class="trk" style="left:57px;width:133px"></i><i class="thm" style="left:153px"></i><span class="val">80%</span></div><div class="r2"><span class="sel">To JPG</span><svg class="arr" style="left:60.5px" viewBox="0 0 8 13"><path d="M4 0L8 5H0zM4 13L0 8H8z"/></svg><span class="sz">56.78KB / 336.64KB (-83.1%)</span></div></div><div class="card" style="left:1058px;top:456px"><div class="img" style="top:52px;height:135px;transform:translateY(0.40px)"><svg viewBox="0 0 240 135" height="135" preserveAspectRatio="none"><defs><linearGradient id="i10sky" x1="0" y1="0" x2="0" y2="1"><stop offset="0" stop-color="#2a9ac6"/><stop offset=".35" stop-color="#37a8cb"/><stop offset=".66" stop-color="#62bcc8"/><stop offset=".86" stop-color="#b4d8b4"/><stop offset="1" stop-color="#f0d890"/></linearGradient><radialGradient id="i10sun" cx=".5" cy=".5" r=".5"><stop offset="0" stop-color="#fff8d8"/><stop offset=".3" stop-color="#fbeeb0" stop-opacity=".85"/><stop offset=".7" stop-color="#f5e4a0" stop-opacity=".35"/><stop offset="1" stop-color="#f5e4a0" stop-opacity="0"/></radialGradient><linearGradient id="i10lake" x1="0" y1="0" x2="0" y2="1"><stop offset="0" stop-color="#a8dade"/><stop offset=".5" stop-color="#74c0d8"/><stop offset="1" stop-color="#409cc4"/></linearGradient><linearGradient id="i10gr" x1="0" y1="0" x2="0" y2="1"><stop offset="0" stop-color="#1a6076"/><stop offset="1" stop-color="#14566a"/></linearGradient></defs><rect width="240" height="135" fill="#17586c"/><g transform="scale(0.20194) translate(-19.8,-47)"><rect x="19" y="47" width="1190" height="400" fill="url(#i10sky)"/><circle cx="688" cy="410" r="100" fill="url(#i10sun)"/><path d="M19 340L40 350L60 375L100 385L200 398L300 402L380 420L430 430L470 425L540 442L575 425L600 408L625 420L650 440L700 448L760 422L850 395L900 370L960 345L1000 335L1040 352L1100 330L1150 302L1207 296L1207 600L19 600z" fill="#3fa2c2" /><path d="M430 432L470 425L540 442L575 425L600 408L625 420L650 440L700 448L760 422L850 395L850 470L430 470z" fill="#8ecfd6" /><path d="M520 442L575 425L600 408L625 420L650 440L680 446L640 460L520 460z" fill="#b8dcd0" /><circle cx="688" cy="410" r="60" fill="url(#i10sun)" opacity=".7"/><circle cx="688" cy="410" r="9" fill="#fffdf0"/><path d="M19 400L100 415L200 425L300 432L380 442L460 455L540 462L600 470L660 465L720 450L800 432L880 420L960 400L1040 385L1207 370L1207 620L19 620z" fill="#2489a6" /><path d="M19 440L150 445L300 455L420 470L520 480L600 486L700 470L760 455L850 440L1000 425L1207 410L1207 620L19 620z" fill="#1b768f" /><path d="M700 500L760 470L820 455L900 450L1000 470L1207 470L1207 620L700 620z" fill="#1a7088" /><path d="M462 535L480 515L520 498L580 490L640 494L700 505L745 522L752 548L720 570L660 582L580 582L510 570L470 552z" fill="url(#i10lake)" /><path d="M19 520L150 540L300 560L400 570L470 578L560 595L650 610L700 600L780 575L880 555L1000 530L1207 510L1207 716L19 716z" fill="url(#i10gr)" /><path d="M478 580L476 548L482 538L500 532L512 524L516 512L522 510L528 522L526 545L524 580L518 580L517 555L490 555L486 580z" fill="#17566a" /><path d="M516 512L506 497L498 484M506 497L498 498M522 510L532 496L540 482M532 496L540 496" stroke="#17566a" stroke-width="3" fill="none"/><path d="M100 235L115.707 275.5L109.739 269.425L127.296 316L116.924 309.925L140.03 356.5L124.819 350.425L146.339 397L128.73 390.925L165.45 437.5L140.579 431.425L176.607 478L147.496 471.925L183.814 518.5L151.965 512.425L182.464 559L151.127 552.925L200.375 599.5L162.232 593.425L204.378 640L1.36319 640L33.3176 593.425L-8.3425 599.5L53.5752 552.925L13.015 559L47.5895 512.425L18.8099 518.5L54.8286 471.925L21.7465 478L60.1423 431.425L33.0153 437.5L70.7201 390.925L57.1857 397L74.233 350.425L56.8943 356.5L81.8155 309.925L72.4197 316L91.1577 269.425L85.852 275.5z" fill="#1a6076" /><path d="M185 300L193.486 332L190.261 327.2L203.789 364L196.649 359.2L207.622 396L199.026 391.2L214.383 428L203.217 423.2L225.538 460L210.133 455.2L225.904 492L210.36 487.2L234.576 524L215.737 519.2L238.946 556L218.446 551.2L238.859 588L218.393 583.2L252.737 620L113.745 620L154.007 583.2L134.352 588L152.413 551.2L136.09 556L154.589 519.2L133.083 524L159.173 487.2L144.259 492L158.511 455.2L147.424 460L166.744 423.2L156.576 428L170.859 391.2L164.18 396L172.889 359.2L167.763 364L180.107 327.2L176.129 332z" fill="#1a6076" /><path d="M260 355L272.283 381.5L267.615 377.525L279.52 408L272.102 404.025L287.414 434.5L276.997 430.525L293.461 461L280.746 457.025L300.773 487.5L285.279 483.525L312.046 514L292.269 510.025L312.852 540.5L292.768 536.525L318.228 567L296.102 563.025L330.509 593.5L303.715 589.525L331.299 620L187.506 620L214.195 589.525L186.674 593.5L224.388 563.025L203.951 567L227.945 536.525L212.386 540.5L226.819 510.025L210.052 514L235.795 483.525L222.717 487.5L239.656 457.025L226.375 461L243.508 430.525L231.037 434.5L247.641 404.025L241.584 408L252.426 377.525L246.933 381.5z" fill="#1a6076" /><path d="M35 380L41.9216 406L39.2914 402.1L47.7372 432L42.8971 428.1L50.5556 458L44.6445 454.1L57.3122 484L48.8336 480.1L61.7784 510L51.6026 506.1L65.7788 536L54.0828 532.1L70.266 562L56.8649 558.1L76.2057 588L60.5476 584.1L80.0158 614L62.9098 610.1L83.6237 640L-10.2124 640L7.66393 610.1L-13.3633 614L10.098 584.1L-2.34712 588L15.3104 558.1L-0.138172 562L17.6517 532.1L6.78529 536L19.7327 506.1L8.71077 510L20.078 480.1L12.971 484L25.5238 454.1L19.7777 458L27.1803 428.1L22.5115 432L30.5768 402.1L27.6518 406z" fill="#1a6076" /><path d="M950 318L963.024 350.2L958.075 345.37L971.903 382.4L963.58 377.57L982.745 414.6L970.302 409.77L994.5 446.8L977.59 441.97L994.359 479L977.502 474.17L1003.01 511.2L982.869 506.37L1016.78 543.4L991.404 538.57L1026.07 575.6L997.164 570.77L1033.17 607.8L1001.56 602.97L1039.74 640L855.834 640L899.148 602.97L863.06 607.8L899.383 570.77L875.575 575.6L906.336 538.57L881.265 543.4L915.16 506.37L901.846 511.2L920.728 474.17L903.954 479L920.389 441.97L902.089 446.8L930.685 409.77L916.581 414.6L937.433 377.57L927.941 382.4L941.396 345.37L937.828 350.2z" fill="#1a6076" /><path d="M1088 255L1102.83 295.5L1097.2 289.425L1112.81 336L1103.38 329.925L1124.17 376.5L1110.43 370.425L1134.36 417L1116.74 410.925L1142.31 457.5L1121.67 451.425L1167.8 498L1137.48 491.925L1176.65 538.5L1142.97 532.425L1177.49 579L1143.49 572.925L1194.08 619.5L1153.77 613.425L1202.67 660L974.017 660L1023.79 613.425L979.843 619.5L1032.51 572.925L1003.17 579L1034.93 532.425L998.202 538.5L1037.89 491.925L1013.17 498L1054 451.425L1030.57 457.5L1057.62 410.925L1040.83 417L1067.53 370.425L1052.69 376.5L1073.91 329.925L1065.43 336L1079.3 289.425L1073.43 295.5z" fill="#1a6076" /><path d="M1200 285L1212.49 322.5L1207.74 316.875L1221.8 360L1213.51 354.375L1228.12 397.5L1217.44 391.875L1239.94 435L1224.76 429.375L1246.05 472.5L1228.55 466.875L1253.79 510L1233.35 504.375L1257.49 547.5L1235.64 541.875L1267.53 585L1241.87 579.375L1272.7 622.5L1245.07 616.875L1287.69 660L1113.46 660L1155.81 616.875L1128.33 622.5L1158.7 579.375L1130.84 585L1163.3 541.875L1139.97 547.5L1167.55 504.375L1143.91 510L1169.34 466.875L1150.32 472.5L1174.5 429.375L1163.59 435L1181.65 391.875L1170.46 397.5L1187.8 354.375L1179.1 360L1192.58 316.875L1187.1 322.5z" fill="#1a6076" /><path d="M1160 370L1164.25 397L1162.63 392.95L1167.03 424L1164.36 419.95L1169.67 451L1165.99 446.95L1172.28 478L1167.62 473.95L1174.54 505L1169.02 500.95L1180.36 532L1172.62 527.95L1184.01 559L1174.89 554.95L1182.46 586L1173.92 581.95L1188.42 613L1177.62 608.95L1192.63 640L1129.5 640L1142.33 608.95L1132.17 613L1145.02 581.95L1136.27 586L1146.56 554.95L1137.52 559L1146.71 527.95L1139.57 532L1151.04 500.95L1144.79 505L1152.1 473.95L1146.83 478L1154.25 446.95L1151.22 451L1155.53 419.95L1153.61 424L1157.36 392.95L1155.52 397z" fill="#1a6076" /><path d="M1010 420L1014.69 442L1012.91 438.7L1018.91 464L1015.53 460.7L1021.23 486L1016.96 482.7L1024.29 508L1018.86 504.7L1029.45 530L1022.06 526.7L1034.17 552L1024.99 548.7L1038.43 574L1027.63 570.7L1034.84 596L1025.4 592.7L1044.57 618L1031.43 614.7L1044.22 640L977.048 640L989.177 614.7L975.291 618L995.178 592.7L986.998 596L991.39 570.7L980.798 574L994.867 548.7L985.102 552L997.009 526.7L991.885 530L1000.71 504.7L995.027 508L1003.3 482.7L998.763 486L1004.57 460.7L1001.67 464L1007.15 438.7L1005.65 442z" fill="#1a6076" /><defs><linearGradient id="i10fg" x1="0" y1="0" x2="0" y2="1"><stop offset="0" stop-color="#18596e" stop-opacity="0"/><stop offset=".6" stop-color="#17586c" stop-opacity="1"/></linearGradient></defs><rect x="19" y="560" width="1190" height="160" fill="url(#i10fg)"/><path d="M957.889 329.971L931.078 352.468L898.188 340.498L892.111 306.029L918.922 283.532L951.812 295.502z" fill="#e8f4f0" opacity="0.35"/><path d="M1079.43 270.893L1059.51 287.605L1035.08 278.712L1030.57 253.107L1050.49 236.395L1074.92 245.288z" fill="#d8d0f0" opacity="0.3"/><path d="M1215.78 233.941L1162.16 278.937L1096.38 254.995L1084.22 186.059L1137.84 141.063L1203.62 165.005z" fill="#b8e8d8" opacity="0.22"/><path d="M1256.38 140.521L1210.42 179.088L1154.04 158.567L1143.62 99.4788L1189.58 60.9115L1245.96 81.4327z" fill="#b8e8d8" opacity="0.12"/><path d="M487.889 508.971L461.078 531.468L428.188 519.498L422.111 485.029L448.922 462.532L481.812 474.502z" fill="#50d0a0" opacity="0.28"/><path d="M347.553 561.208L329.168 576.635L306.615 568.427L302.447 544.792L320.832 529.365L343.385 537.573z" fill="#e080c0" opacity="0.42"/><path d="M255.477 630.652L198.024 678.861L127.547 653.209L114.523 579.348L171.976 531.139L242.453 556.791z" fill="#60c070" opacity="0.12"/><path d="M301.683 608.811L259.551 644.164L207.868 625.353L198.317 571.189L240.449 535.836L292.132 554.647z" fill="#50b080" opacity="0.08"/><path d="M821.397 361.42L813.736 367.848L804.34 364.428L802.603 354.58L810.264 348.152L819.66 351.572z" fill="#f0f0d0" opacity="0.4"/></g></svg></div><div class="dot"></div><svg class="dl" viewBox="0 0 24 24"><path d="M19 9h-4V3H9v6H5l7 7 7-7zM5 18v2h14v-2H5z"/></svg><svg class="cl" viewBox="0 0 24 24"><path d="M19 6.41L17.59 5 12 10.59 6.41 5 5 6.41 10.59 12 5 17.59 6.41 19 12 13.41 17.59 19 19 17.59 13.41 12z"/></svg><div class="r1"><span class="lab">Quality</span><i class="trk" style="left:57px;width:133px"></i><i class="thm" style="left:153px"></i><span class="val">80%</span></div><div class="r2"><span class="sel">To JPG</span><svg class="arr" style="left:60.5px" viewBox="0 0 8 13"><path d="M4 0L8 5H0zM4 13L0 8H8z"/></svg><span class="sz">511.87KB / 976.47KB (-47.6%)</span></div></div><div class="card" style="left:18px;top:772px"><div class="img" style="top:52px;height:135px"><svg viewBox="0 0 240 135" height="135" preserveAspectRatio="none"><defs><linearGradient id="gffffffffffff" x1="0" y1="0" x2="0" y2="1"><stop offset="0" stop-color="#ffffff"/><stop offset="1" stop-color="#ffffff"/></linearGradient></defs><rect width="240" height="135" fill="url(#gffffffffffff)"/></svg></div><div class="dot"></div><svg class="dl" viewBox="0 0 24 24"><path d="M19 9h-4V3H9v6H5l7 7 7-7zM5 18v2h14v-2H5z"/></svg><svg class="cl" viewBox="0 0 24 24"><path d="M19 6.41L17.59 5 12 10.59 6.41 5 5 6.41 10.59 12 5 17.59 6.41 19 12 13.41 17.59 19 19 17.59 13.41 12z"/></svg><div class="r1"><span class="lab"></span><i class="trk" style="left:0px;width:0px"></i><i class="thm" style="left:-5px"></i><span class="val"></span></div><div class="r2"><span class="sel"></span><svg class="arr" style="left:0.0px" viewBox="0 0 8 13"><path d="M4 0L8 5H0zM4 13L0 8H8z"/></svg><span class="sz"></span></div></div><div class="card" style="left:278px;top:772px"><div class="img" style="top:52px;height:135px"><svg viewBox="0 0 240 135" height="135" preserveAspectRatio="none"><defs><linearGradient id="gffffffffffff" x1="0" y1="0" x2="0" y2="1"><stop offset="0" stop-color="#ffffff"/><stop offset="1" stop-color="#ffffff"/></linearGradient></defs><rect width="240" height="135" fill="url(#gffffffffffff)"/></svg></div><div class="dot"></div><svg class="dl" viewBox="0 0 24 24"><path d="M19 9h-4V3H9v6H5l7 7 7-7zM5 18v2h14v-2H5z"/></svg><svg class="cl" viewBox="0 0 24 24"><path d="M19 6.41L17.59 5 12 10.59 6.41 5 5 6.41 10.59 12 5 17.59 6.41 19 12 13.41 17.59 19 19 17.59 13.41 12z"/></svg><div class="r1"><span class="lab"></span><i class="trk" style="left:0px;width:0px"></i><i class="thm" style="left:-5px"></i><span class="val"></span></div><div class="r2"><span class="sel"></span><svg class="arr" style="left:0.0px" viewBox="0 0 8 13"><path d="M4 0L8 5H0zM4 13L0 8H8z"/></svg><span class="sz"></span></div></div><div id="titlebar"><i class="tl" style="left:10px;background:#e95b66"></i><i class="tl" style="left:38px;background:#ecb732"></i><div id="title">Imagine</div><div class="menu" id="m1" style="left:5px;transform:scaleX(.79)">Imagine</div><div class="menu" id="m2" style="left:65px;transform:scaleX(.79)">File</div></div><div id="toolbar"><div class="tb" style="left:24px;width:40px"><svg viewBox="0 0 24 24"><path d="M19 13h-6v6h-2v-6H5v-2h6V5h2v6h6v2z"/></svg><span>Add</span></div><div class="tb" style="left:94px;width:40px"><svg viewBox="0 0 24 24"><path d="M19 9h-4V3H9v6H5l7 7 7-7zM5 18v2h14v-2H5z"/></svg><span>Save</span></div><div class="tb" style="left:164px;width:40px"><svg viewBox="0 0 24 24"><path d="M15 16h4v2h-4zm0-8h7v2h-7zm0 4h6v2h-6zM3 18c0 1.1.9 2 2 2h6c1.1 0 2-.9 2-2V8H3v10zM14 5h-3l-1-1H6L5 5H2v2h12z"/></svg><span>Clear all</span></div></div><div id="tune"><svg viewBox="0 0 24 24"><path d="M3 17v2h6v-2H3zM3 5v2h10V5H3zm10 16v-2h8v-2h-8v-2h-2v6h2zM7 9v2H3v2h4v2h2V9H7zm14 4v-2H11v2h10zm-6-4h2V7h4V5h-4V3h-2v6z"/></svg></div><div id="sb"><svg class="abs" style="left:4px;top:6px" width="7" height="4" viewBox="0 0 7 4"><path d="M3.5 0L7 4H0z" fill="#a3a3a3"/></svg><i class="th"></i><svg class="abs" style="left:4px;top:719px" width="7" height="4" viewBox="0 0 7 4"><path d="M0 0H7L3.5 4z" fill="#505050"/></svg></div><div id="pop"><svg class="abs" style="left:485px;top:-5px" width="11" height="5" viewBox="0 0 11 5"><path d="M0 5L5.5 0L11 5z" fill="#fff"/></svg><svg class="ptri" style="top:27px" viewBox="0 0 5 5"><path d="M5 0V5H0z"/></svg><span class="ph" style="top:23px">PNG</span><span class="psel" style="left:443px;top:23px">To PNG</span><svg class="parr" style="left:493px;top:24px" viewBox="0 0 8 13"><path d="M4 0L8 5H0zM4 13L0 8H8z"/></svg><svg class="ptri" style="top:97px" viewBox="0 0 5 5"><path d="M5 0V5H0z"/></svg><span class="ph" style="top:93px">JPEG</span><span class="psel" style="left:443px;top:93px">To JPG</span><svg class="parr" style="left:493px;top:94px" viewBox="0 0 8 13"><path d="M4 0L8 5H0zM4 13L0 8H8z"/></svg><svg class="ptri" style="top:167px" viewBox="0 0 5 5"><path d="M5 0V5H0z"/></svg><span class="ph" style="top:163px">WebP</span><span class="plab" style="top:56px">Colors</span><i class="ptrk" style="left:64px;top:61px;width:391px"></i><i class="pthm" style="left:391px;top:58px"></i><span class="pval" style="top:56px">128</span><div class="spin" style="top:56px"><svg viewBox="0 0 7 10"><path d="M3.5 0L7 4H0zM3.5 10L0 6H7z"/></svg></div><span class="plab" style="top:126px">Quality</span><i class="ptrk" style="left:66px;top:131px;width:389px"></i><i class="pthm" style="left:361px;top:128px"></i><span class="pval" style="top:126px">80</span><div class="spin" style="top:126px"><svg viewBox="0 0 7 10"><path d="M3.5 0L7 4H0zM3.5 10L0 6H7z"/></svg></div><span class="plab" style="top:196px">Quality</span><i class="ptrk" style="left:66px;top:201px;width:389px"></i><i class="pthm" style="left:361px;top:198px"></i><span class="pval" style="top:196px">80</span><div class="spin" style="top:196px"><svg viewBox="0 0 7 10"><path d="M3.5 0L7 4H0zM3.5 10L0 6H7z"/></svg></div><div class="ft"><svg class="abs" style="left:10px;top:9px" width="14" height="12" viewBox="0 0 14 12"><path d="M0.3 6.3L3.5 9.5L9.8 3M5.2 7.8L6.6 9.5L13.1 2.7" fill="none" stroke="#5a5a6c" stroke-width="1.3"/></svg><span class="abs" style="left:28px;top:8px;font-size:12px;line-height:14px;color:#5b5b6b">Apply now</span><svg class="abs" style="left:497px;top:9px" width="13" height="13" viewBox="0 0 13 13"><path d="M0.7 0.7L12.3 12.3M12.3 0.7L0.7 12.3" stroke="#5a5a6e" stroke-width="1" fill="none"/></svg></div></div><div id="bottom"><i></i></div></div></body></html>
